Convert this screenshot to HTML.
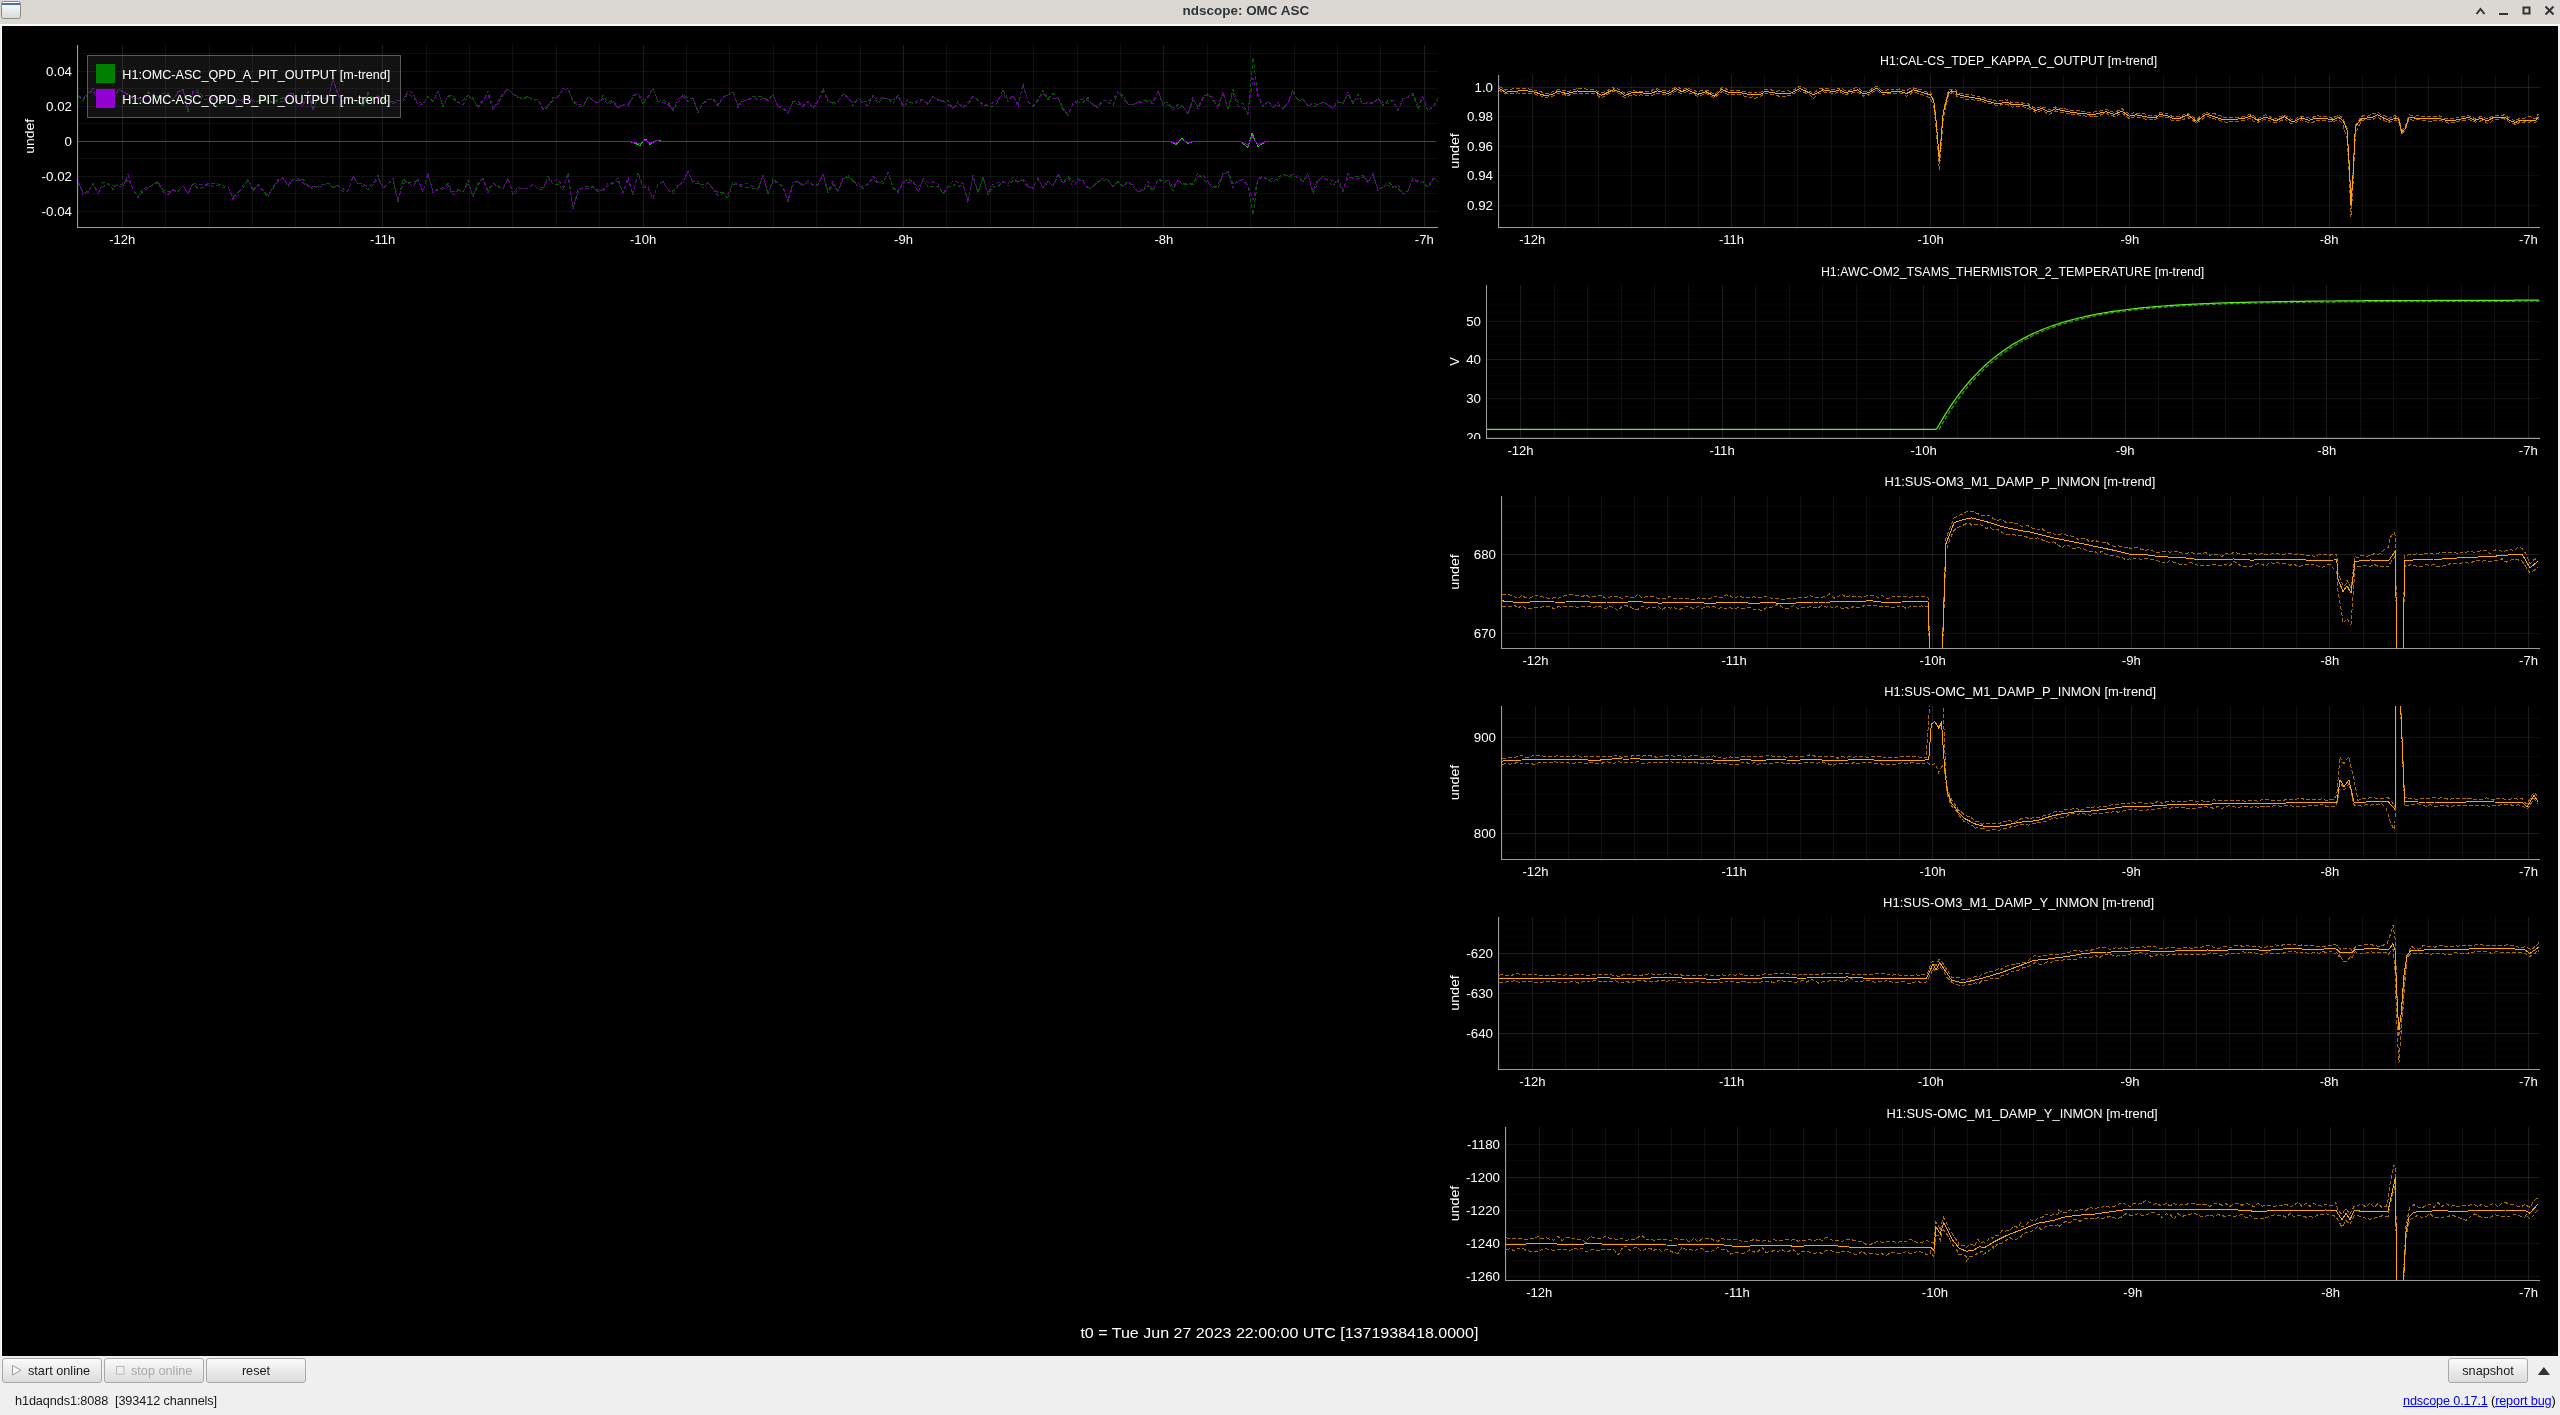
<!DOCTYPE html>
<html><head><meta charset="utf-8"><title>ndscope: OMC ASC</title>
<style>
html,body{margin:0;padding:0;}
body{width:2560px;height:1415px;overflow:hidden;background:#efefef;position:relative;font-family:'Liberation Sans', sans-serif;}
.a{position:absolute;}
#tb{left:0;top:0;width:2560px;height:24px;background:#dbd7d3;}
#tbl{left:0;top:24px;width:2560px;height:2px;background:#fbfbfb;}
#lc{left:1px;top:26px;width:1px;height:1330px;background:#ffffff;}
#blk{left:2px;top:26px;width:2556px;height:1330px;background:#000;}
#title{left:0;top:0;width:2492px;height:24px;line-height:24px;text-align:center;font-weight:bold;font-size:12.6px;color:#2e3436;}
.btn{position:absolute;top:1358px;height:23px;border:1px solid #a9a9a9;border-radius:3px;background:linear-gradient(#fafafa,#dcdcdc);box-sizing:content-box;font-size:12.7px;color:#1a1a1a;}
.btn span{position:absolute;top:5px;white-space:nowrap;}
.st{position:absolute;font-size:12.7px;white-space:nowrap;}
a{color:#0000ff;text-decoration:underline;}
svg text{font-family:'Liberation Sans', sans-serif;}
.g{mix-blend-mode:plus-lighter;}
</style></head>
<body>
<div class="a" id="tb"></div>
<div class="a" id="tbl"></div>
<div class="a" id="lc"></div>
<div class="a" id="blk"></div>
<svg class="a" style="left:0;top:0" width="2560" height="1415" viewBox="0 0 2560 1415">
<defs>
<linearGradient id="wig" x1="0" y1="0" x2="0" y2="1"><stop offset="0" stop-color="#ffffff"/><stop offset="1" stop-color="#d8dad6"/></linearGradient>
<clipPath id="c0"><rect x="78" y="45" width="1360" height="182"/></clipPath>
<clipPath id="c1"><rect x="1499" y="75" width="1041" height="152"/></clipPath>
<clipPath id="l1"><rect x="1400" y="65" width="98" height="163"/></clipPath>
<clipPath id="c2"><rect x="1487" y="285" width="1053" height="153"/></clipPath>
<clipPath id="l2"><rect x="1400" y="275" width="86" height="164"/></clipPath>
<clipPath id="c3"><rect x="1502" y="496" width="1038" height="152"/></clipPath>
<clipPath id="l3"><rect x="1400" y="486" width="101" height="163"/></clipPath>
<clipPath id="c4"><rect x="1502" y="706" width="1038" height="153"/></clipPath>
<clipPath id="l4"><rect x="1400" y="696" width="101" height="164"/></clipPath>
<clipPath id="c5"><rect x="1499" y="917" width="1041" height="152"/></clipPath>
<clipPath id="l5"><rect x="1400" y="907" width="98" height="163"/></clipPath>
<clipPath id="c6"><rect x="1506" y="1127" width="1034" height="153"/></clipPath>
<clipPath id="l6"><rect x="1400" y="1117" width="105" height="164"/></clipPath>
</defs>
<rect x="1.5" y="1.5" width="19" height="17" rx="2" fill="url(#wig)" stroke="#8c8c8c"/>
<rect x="2" y="3" width="18" height="2" fill="#4a72aa"/>
<g stroke="#2e3436" stroke-width="2" fill="none">
<polyline points="2476.5,14 2480.5,9 2484.5,14"/>
<line x1="2499" y1="14" x2="2508" y2="14"/>
<rect x="2523.5" y="7.5" width="6" height="6"/>
<line x1="2545.5" y1="6.5" x2="2553.5" y2="14.5"/>
<line x1="2553.5" y1="6.5" x2="2545.5" y2="14.5"/>
</g>
<rect class="g" x="78" y="45" width="1" height="182" fill="#111111"/>
<rect class="g" x="122" y="45" width="1" height="182" fill="#1d1d1d"/>
<rect class="g" x="165" y="45" width="1" height="182" fill="#111111"/>
<rect class="g" x="209" y="45" width="1" height="182" fill="#111111"/>
<rect class="g" x="252" y="45" width="1" height="182" fill="#111111"/>
<rect class="g" x="295" y="45" width="1" height="182" fill="#111111"/>
<rect class="g" x="339" y="45" width="1" height="182" fill="#111111"/>
<rect class="g" x="382" y="45" width="1" height="182" fill="#1d1d1d"/>
<rect class="g" x="426" y="45" width="1" height="182" fill="#111111"/>
<rect class="g" x="469" y="45" width="1" height="182" fill="#111111"/>
<rect class="g" x="512" y="45" width="1" height="182" fill="#111111"/>
<rect class="g" x="556" y="45" width="1" height="182" fill="#111111"/>
<rect class="g" x="599" y="45" width="1" height="182" fill="#111111"/>
<rect class="g" x="643" y="45" width="1" height="182" fill="#1d1d1d"/>
<rect class="g" x="686" y="45" width="1" height="182" fill="#111111"/>
<rect class="g" x="729" y="45" width="1" height="182" fill="#111111"/>
<rect class="g" x="773" y="45" width="1" height="182" fill="#111111"/>
<rect class="g" x="816" y="45" width="1" height="182" fill="#111111"/>
<rect class="g" x="860" y="45" width="1" height="182" fill="#111111"/>
<rect class="g" x="903" y="45" width="1" height="182" fill="#1d1d1d"/>
<rect class="g" x="946" y="45" width="1" height="182" fill="#111111"/>
<rect class="g" x="990" y="45" width="1" height="182" fill="#111111"/>
<rect class="g" x="1033" y="45" width="1" height="182" fill="#111111"/>
<rect class="g" x="1077" y="45" width="1" height="182" fill="#111111"/>
<rect class="g" x="1120" y="45" width="1" height="182" fill="#111111"/>
<rect class="g" x="1163" y="45" width="1" height="182" fill="#1d1d1d"/>
<rect class="g" x="1207" y="45" width="1" height="182" fill="#111111"/>
<rect class="g" x="1250" y="45" width="1" height="182" fill="#111111"/>
<rect class="g" x="1294" y="45" width="1" height="182" fill="#111111"/>
<rect class="g" x="1337" y="45" width="1" height="182" fill="#111111"/>
<rect class="g" x="1380" y="45" width="1" height="182" fill="#111111"/>
<rect class="g" x="1424" y="45" width="1" height="182" fill="#1d1d1d"/>
<rect class="g" x="78" y="211" width="1360" height="1" fill="#101010"/>
<rect class="g" x="78" y="193" width="1360" height="1" fill="#0d0d0d"/>
<rect class="g" x="78" y="176" width="1360" height="1" fill="#101010"/>
<rect class="g" x="78" y="158" width="1360" height="1" fill="#0d0d0d"/>
<rect class="g" x="78" y="141" width="1360" height="1" fill="#101010"/>
<rect class="g" x="78" y="123" width="1360" height="1" fill="#0d0d0d"/>
<rect class="g" x="78" y="106" width="1360" height="1" fill="#101010"/>
<rect class="g" x="78" y="88" width="1360" height="1" fill="#0d0d0d"/>
<rect class="g" x="78" y="71" width="1360" height="1" fill="#101010"/>
<rect class="g" x="78" y="53" width="1360" height="1" fill="#0d0d0d"/>
<rect class="g" x="1499" y="75" width="1" height="152" fill="#111111"/>
<rect class="g" x="1532" y="75" width="1" height="152" fill="#1d1d1d"/>
<rect class="g" x="1565" y="75" width="1" height="152" fill="#111111"/>
<rect class="g" x="1598" y="75" width="1" height="152" fill="#111111"/>
<rect class="g" x="1631" y="75" width="1" height="152" fill="#111111"/>
<rect class="g" x="1665" y="75" width="1" height="152" fill="#111111"/>
<rect class="g" x="1698" y="75" width="1" height="152" fill="#111111"/>
<rect class="g" x="1731" y="75" width="1" height="152" fill="#1d1d1d"/>
<rect class="g" x="1764" y="75" width="1" height="152" fill="#111111"/>
<rect class="g" x="1797" y="75" width="1" height="152" fill="#111111"/>
<rect class="g" x="1831" y="75" width="1" height="152" fill="#111111"/>
<rect class="g" x="1864" y="75" width="1" height="152" fill="#111111"/>
<rect class="g" x="1897" y="75" width="1" height="152" fill="#111111"/>
<rect class="g" x="1930" y="75" width="1" height="152" fill="#1d1d1d"/>
<rect class="g" x="1963" y="75" width="1" height="152" fill="#111111"/>
<rect class="g" x="1997" y="75" width="1" height="152" fill="#111111"/>
<rect class="g" x="2030" y="75" width="1" height="152" fill="#111111"/>
<rect class="g" x="2063" y="75" width="1" height="152" fill="#111111"/>
<rect class="g" x="2096" y="75" width="1" height="152" fill="#111111"/>
<rect class="g" x="2129" y="75" width="1" height="152" fill="#1d1d1d"/>
<rect class="g" x="2163" y="75" width="1" height="152" fill="#111111"/>
<rect class="g" x="2196" y="75" width="1" height="152" fill="#111111"/>
<rect class="g" x="2229" y="75" width="1" height="152" fill="#111111"/>
<rect class="g" x="2262" y="75" width="1" height="152" fill="#111111"/>
<rect class="g" x="2295" y="75" width="1" height="152" fill="#111111"/>
<rect class="g" x="2329" y="75" width="1" height="152" fill="#1d1d1d"/>
<rect class="g" x="2362" y="75" width="1" height="152" fill="#111111"/>
<rect class="g" x="2395" y="75" width="1" height="152" fill="#111111"/>
<rect class="g" x="2428" y="75" width="1" height="152" fill="#111111"/>
<rect class="g" x="2461" y="75" width="1" height="152" fill="#111111"/>
<rect class="g" x="2495" y="75" width="1" height="152" fill="#111111"/>
<rect class="g" x="2528" y="75" width="1" height="152" fill="#1d1d1d"/>
<rect class="g" x="1499" y="87" width="1041" height="1" fill="#1d1d1d"/>
<rect class="g" x="1499" y="116" width="1041" height="1" fill="#0b0b0b"/>
<rect class="g" x="1499" y="146" width="1041" height="1" fill="#0b0b0b"/>
<rect class="g" x="1499" y="175" width="1041" height="1" fill="#0b0b0b"/>
<rect class="g" x="1499" y="205" width="1041" height="1" fill="#0b0b0b"/>
<rect class="g" x="1520" y="285" width="1" height="153" fill="#1d1d1d"/>
<rect class="g" x="1554" y="285" width="1" height="153" fill="#111111"/>
<rect class="g" x="1587" y="285" width="1" height="153" fill="#111111"/>
<rect class="g" x="1621" y="285" width="1" height="153" fill="#111111"/>
<rect class="g" x="1654" y="285" width="1" height="153" fill="#111111"/>
<rect class="g" x="1688" y="285" width="1" height="153" fill="#111111"/>
<rect class="g" x="1722" y="285" width="1" height="153" fill="#1d1d1d"/>
<rect class="g" x="1755" y="285" width="1" height="153" fill="#111111"/>
<rect class="g" x="1789" y="285" width="1" height="153" fill="#111111"/>
<rect class="g" x="1822" y="285" width="1" height="153" fill="#111111"/>
<rect class="g" x="1856" y="285" width="1" height="153" fill="#111111"/>
<rect class="g" x="1890" y="285" width="1" height="153" fill="#111111"/>
<rect class="g" x="1923" y="285" width="1" height="153" fill="#1d1d1d"/>
<rect class="g" x="1957" y="285" width="1" height="153" fill="#111111"/>
<rect class="g" x="1990" y="285" width="1" height="153" fill="#111111"/>
<rect class="g" x="2024" y="285" width="1" height="153" fill="#111111"/>
<rect class="g" x="2057" y="285" width="1" height="153" fill="#111111"/>
<rect class="g" x="2091" y="285" width="1" height="153" fill="#111111"/>
<rect class="g" x="2125" y="285" width="1" height="153" fill="#1d1d1d"/>
<rect class="g" x="2158" y="285" width="1" height="153" fill="#111111"/>
<rect class="g" x="2192" y="285" width="1" height="153" fill="#111111"/>
<rect class="g" x="2225" y="285" width="1" height="153" fill="#111111"/>
<rect class="g" x="2259" y="285" width="1" height="153" fill="#111111"/>
<rect class="g" x="2293" y="285" width="1" height="153" fill="#111111"/>
<rect class="g" x="2326" y="285" width="1" height="153" fill="#1d1d1d"/>
<rect class="g" x="2360" y="285" width="1" height="153" fill="#111111"/>
<rect class="g" x="2393" y="285" width="1" height="153" fill="#111111"/>
<rect class="g" x="2427" y="285" width="1" height="153" fill="#111111"/>
<rect class="g" x="2461" y="285" width="1" height="153" fill="#111111"/>
<rect class="g" x="2494" y="285" width="1" height="153" fill="#111111"/>
<rect class="g" x="2528" y="285" width="1" height="153" fill="#1d1d1d"/>
<rect class="g" x="1487" y="429" width="1053" height="1" fill="#050505"/>
<rect class="g" x="1487" y="421" width="1053" height="1" fill="#050505"/>
<rect class="g" x="1487" y="413" width="1053" height="1" fill="#050505"/>
<rect class="g" x="1487" y="406" width="1053" height="1" fill="#050505"/>
<rect class="g" x="1487" y="390" width="1053" height="1" fill="#050505"/>
<rect class="g" x="1487" y="383" width="1053" height="1" fill="#050505"/>
<rect class="g" x="1487" y="375" width="1053" height="1" fill="#050505"/>
<rect class="g" x="1487" y="367" width="1053" height="1" fill="#050505"/>
<rect class="g" x="1487" y="352" width="1053" height="1" fill="#050505"/>
<rect class="g" x="1487" y="344" width="1053" height="1" fill="#050505"/>
<rect class="g" x="1487" y="336" width="1053" height="1" fill="#050505"/>
<rect class="g" x="1487" y="329" width="1053" height="1" fill="#050505"/>
<rect class="g" x="1487" y="313" width="1053" height="1" fill="#050505"/>
<rect class="g" x="1487" y="305" width="1053" height="1" fill="#050505"/>
<rect class="g" x="1487" y="298" width="1053" height="1" fill="#050505"/>
<rect class="g" x="1487" y="290" width="1053" height="1" fill="#050505"/>
<rect class="g" x="1487" y="359" width="1053" height="1" fill="#1d1d1d"/>
<rect class="g" x="1487" y="437" width="1053" height="1" fill="#1d1d1d"/>
<rect class="g" x="1487" y="321" width="1053" height="1" fill="#111111"/>
<rect class="g" x="1487" y="398" width="1053" height="1" fill="#111111"/>
<rect class="g" x="1502" y="496" width="1" height="152" fill="#111111"/>
<rect class="g" x="1535" y="496" width="1" height="152" fill="#1d1d1d"/>
<rect class="g" x="1568" y="496" width="1" height="152" fill="#111111"/>
<rect class="g" x="1601" y="496" width="1" height="152" fill="#111111"/>
<rect class="g" x="1634" y="496" width="1" height="152" fill="#111111"/>
<rect class="g" x="1667" y="496" width="1" height="152" fill="#111111"/>
<rect class="g" x="1701" y="496" width="1" height="152" fill="#111111"/>
<rect class="g" x="1734" y="496" width="1" height="152" fill="#1d1d1d"/>
<rect class="g" x="1767" y="496" width="1" height="152" fill="#111111"/>
<rect class="g" x="1800" y="496" width="1" height="152" fill="#111111"/>
<rect class="g" x="1833" y="496" width="1" height="152" fill="#111111"/>
<rect class="g" x="1866" y="496" width="1" height="152" fill="#111111"/>
<rect class="g" x="1899" y="496" width="1" height="152" fill="#111111"/>
<rect class="g" x="1932" y="496" width="1" height="152" fill="#1d1d1d"/>
<rect class="g" x="1965" y="496" width="1" height="152" fill="#111111"/>
<rect class="g" x="1998" y="496" width="1" height="152" fill="#111111"/>
<rect class="g" x="2032" y="496" width="1" height="152" fill="#111111"/>
<rect class="g" x="2065" y="496" width="1" height="152" fill="#111111"/>
<rect class="g" x="2098" y="496" width="1" height="152" fill="#111111"/>
<rect class="g" x="2131" y="496" width="1" height="152" fill="#1d1d1d"/>
<rect class="g" x="2164" y="496" width="1" height="152" fill="#111111"/>
<rect class="g" x="2197" y="496" width="1" height="152" fill="#111111"/>
<rect class="g" x="2230" y="496" width="1" height="152" fill="#111111"/>
<rect class="g" x="2263" y="496" width="1" height="152" fill="#111111"/>
<rect class="g" x="2296" y="496" width="1" height="152" fill="#111111"/>
<rect class="g" x="2329" y="496" width="1" height="152" fill="#1d1d1d"/>
<rect class="g" x="2363" y="496" width="1" height="152" fill="#111111"/>
<rect class="g" x="2396" y="496" width="1" height="152" fill="#111111"/>
<rect class="g" x="2429" y="496" width="1" height="152" fill="#111111"/>
<rect class="g" x="2462" y="496" width="1" height="152" fill="#111111"/>
<rect class="g" x="2495" y="496" width="1" height="152" fill="#111111"/>
<rect class="g" x="2528" y="496" width="1" height="152" fill="#1d1d1d"/>
<rect class="g" x="1502" y="617" width="1038" height="1" fill="#070707"/>
<rect class="g" x="1502" y="601" width="1038" height="1" fill="#070707"/>
<rect class="g" x="1502" y="585" width="1038" height="1" fill="#070707"/>
<rect class="g" x="1502" y="569" width="1038" height="1" fill="#070707"/>
<rect class="g" x="1502" y="538" width="1038" height="1" fill="#070707"/>
<rect class="g" x="1502" y="522" width="1038" height="1" fill="#070707"/>
<rect class="g" x="1502" y="506" width="1038" height="1" fill="#070707"/>
<rect class="g" x="1502" y="554" width="1038" height="1" fill="#1d1d1d"/>
<rect class="g" x="1502" y="633" width="1038" height="1" fill="#111111"/>
<rect class="g" x="1502" y="706" width="1" height="153" fill="#111111"/>
<rect class="g" x="1535" y="706" width="1" height="153" fill="#1d1d1d"/>
<rect class="g" x="1568" y="706" width="1" height="153" fill="#111111"/>
<rect class="g" x="1601" y="706" width="1" height="153" fill="#111111"/>
<rect class="g" x="1634" y="706" width="1" height="153" fill="#111111"/>
<rect class="g" x="1667" y="706" width="1" height="153" fill="#111111"/>
<rect class="g" x="1701" y="706" width="1" height="153" fill="#111111"/>
<rect class="g" x="1734" y="706" width="1" height="153" fill="#1d1d1d"/>
<rect class="g" x="1767" y="706" width="1" height="153" fill="#111111"/>
<rect class="g" x="1800" y="706" width="1" height="153" fill="#111111"/>
<rect class="g" x="1833" y="706" width="1" height="153" fill="#111111"/>
<rect class="g" x="1866" y="706" width="1" height="153" fill="#111111"/>
<rect class="g" x="1899" y="706" width="1" height="153" fill="#111111"/>
<rect class="g" x="1932" y="706" width="1" height="153" fill="#1d1d1d"/>
<rect class="g" x="1965" y="706" width="1" height="153" fill="#111111"/>
<rect class="g" x="1998" y="706" width="1" height="153" fill="#111111"/>
<rect class="g" x="2032" y="706" width="1" height="153" fill="#111111"/>
<rect class="g" x="2065" y="706" width="1" height="153" fill="#111111"/>
<rect class="g" x="2098" y="706" width="1" height="153" fill="#111111"/>
<rect class="g" x="2131" y="706" width="1" height="153" fill="#1d1d1d"/>
<rect class="g" x="2164" y="706" width="1" height="153" fill="#111111"/>
<rect class="g" x="2197" y="706" width="1" height="153" fill="#111111"/>
<rect class="g" x="2230" y="706" width="1" height="153" fill="#111111"/>
<rect class="g" x="2263" y="706" width="1" height="153" fill="#111111"/>
<rect class="g" x="2296" y="706" width="1" height="153" fill="#111111"/>
<rect class="g" x="2329" y="706" width="1" height="153" fill="#1d1d1d"/>
<rect class="g" x="2363" y="706" width="1" height="153" fill="#111111"/>
<rect class="g" x="2396" y="706" width="1" height="153" fill="#111111"/>
<rect class="g" x="2429" y="706" width="1" height="153" fill="#111111"/>
<rect class="g" x="2462" y="706" width="1" height="153" fill="#111111"/>
<rect class="g" x="2495" y="706" width="1" height="153" fill="#111111"/>
<rect class="g" x="2528" y="706" width="1" height="153" fill="#1d1d1d"/>
<rect class="g" x="1502" y="852" width="1038" height="1" fill="#080808"/>
<rect class="g" x="1502" y="814" width="1038" height="1" fill="#080808"/>
<rect class="g" x="1502" y="794" width="1038" height="1" fill="#080808"/>
<rect class="g" x="1502" y="775" width="1038" height="1" fill="#080808"/>
<rect class="g" x="1502" y="756" width="1038" height="1" fill="#080808"/>
<rect class="g" x="1502" y="718" width="1038" height="1" fill="#080808"/>
<rect class="g" x="1502" y="833" width="1038" height="1" fill="#1d1d1d"/>
<rect class="g" x="1502" y="737" width="1038" height="1" fill="#111111"/>
<rect class="g" x="1499" y="917" width="1" height="152" fill="#111111"/>
<rect class="g" x="1532" y="917" width="1" height="152" fill="#1d1d1d"/>
<rect class="g" x="1565" y="917" width="1" height="152" fill="#111111"/>
<rect class="g" x="1598" y="917" width="1" height="152" fill="#111111"/>
<rect class="g" x="1632" y="917" width="1" height="152" fill="#111111"/>
<rect class="g" x="1665" y="917" width="1" height="152" fill="#111111"/>
<rect class="g" x="1698" y="917" width="1" height="152" fill="#111111"/>
<rect class="g" x="1731" y="917" width="1" height="152" fill="#1d1d1d"/>
<rect class="g" x="1764" y="917" width="1" height="152" fill="#111111"/>
<rect class="g" x="1798" y="917" width="1" height="152" fill="#111111"/>
<rect class="g" x="1831" y="917" width="1" height="152" fill="#111111"/>
<rect class="g" x="1864" y="917" width="1" height="152" fill="#111111"/>
<rect class="g" x="1897" y="917" width="1" height="152" fill="#111111"/>
<rect class="g" x="1930" y="917" width="1" height="152" fill="#1d1d1d"/>
<rect class="g" x="1964" y="917" width="1" height="152" fill="#111111"/>
<rect class="g" x="1997" y="917" width="1" height="152" fill="#111111"/>
<rect class="g" x="2030" y="917" width="1" height="152" fill="#111111"/>
<rect class="g" x="2063" y="917" width="1" height="152" fill="#111111"/>
<rect class="g" x="2096" y="917" width="1" height="152" fill="#111111"/>
<rect class="g" x="2130" y="917" width="1" height="152" fill="#1d1d1d"/>
<rect class="g" x="2163" y="917" width="1" height="152" fill="#111111"/>
<rect class="g" x="2196" y="917" width="1" height="152" fill="#111111"/>
<rect class="g" x="2229" y="917" width="1" height="152" fill="#111111"/>
<rect class="g" x="2262" y="917" width="1" height="152" fill="#111111"/>
<rect class="g" x="2296" y="917" width="1" height="152" fill="#111111"/>
<rect class="g" x="2329" y="917" width="1" height="152" fill="#1d1d1d"/>
<rect class="g" x="2362" y="917" width="1" height="152" fill="#111111"/>
<rect class="g" x="2395" y="917" width="1" height="152" fill="#111111"/>
<rect class="g" x="2428" y="917" width="1" height="152" fill="#111111"/>
<rect class="g" x="2462" y="917" width="1" height="152" fill="#111111"/>
<rect class="g" x="2495" y="917" width="1" height="152" fill="#111111"/>
<rect class="g" x="2528" y="917" width="1" height="152" fill="#1d1d1d"/>
<rect class="g" x="1499" y="1065" width="1041" height="1" fill="#050505"/>
<rect class="g" x="1499" y="1057" width="1041" height="1" fill="#050505"/>
<rect class="g" x="1499" y="1049" width="1041" height="1" fill="#050505"/>
<rect class="g" x="1499" y="1041" width="1041" height="1" fill="#050505"/>
<rect class="g" x="1499" y="1025" width="1041" height="1" fill="#050505"/>
<rect class="g" x="1499" y="1017" width="1041" height="1" fill="#050505"/>
<rect class="g" x="1499" y="1009" width="1041" height="1" fill="#050505"/>
<rect class="g" x="1499" y="1001" width="1041" height="1" fill="#050505"/>
<rect class="g" x="1499" y="985" width="1041" height="1" fill="#050505"/>
<rect class="g" x="1499" y="977" width="1041" height="1" fill="#050505"/>
<rect class="g" x="1499" y="969" width="1041" height="1" fill="#050505"/>
<rect class="g" x="1499" y="961" width="1041" height="1" fill="#050505"/>
<rect class="g" x="1499" y="945" width="1041" height="1" fill="#050505"/>
<rect class="g" x="1499" y="937" width="1041" height="1" fill="#050505"/>
<rect class="g" x="1499" y="929" width="1041" height="1" fill="#050505"/>
<rect class="g" x="1499" y="921" width="1041" height="1" fill="#050505"/>
<rect class="g" x="1499" y="953" width="1041" height="1" fill="#1d1d1d"/>
<rect class="g" x="1499" y="1033" width="1041" height="1" fill="#1d1d1d"/>
<rect class="g" x="1499" y="993" width="1041" height="1" fill="#111111"/>
<rect class="g" x="1506" y="1127" width="1" height="153" fill="#111111"/>
<rect class="g" x="1539" y="1127" width="1" height="153" fill="#1d1d1d"/>
<rect class="g" x="1572" y="1127" width="1" height="153" fill="#111111"/>
<rect class="g" x="1605" y="1127" width="1" height="153" fill="#111111"/>
<rect class="g" x="1638" y="1127" width="1" height="153" fill="#111111"/>
<rect class="g" x="1671" y="1127" width="1" height="153" fill="#111111"/>
<rect class="g" x="1704" y="1127" width="1" height="153" fill="#111111"/>
<rect class="g" x="1737" y="1127" width="1" height="153" fill="#1d1d1d"/>
<rect class="g" x="1770" y="1127" width="1" height="153" fill="#111111"/>
<rect class="g" x="1803" y="1127" width="1" height="153" fill="#111111"/>
<rect class="g" x="1836" y="1127" width="1" height="153" fill="#111111"/>
<rect class="g" x="1869" y="1127" width="1" height="153" fill="#111111"/>
<rect class="g" x="1902" y="1127" width="1" height="153" fill="#111111"/>
<rect class="g" x="1934" y="1127" width="1" height="153" fill="#1d1d1d"/>
<rect class="g" x="1967" y="1127" width="1" height="153" fill="#111111"/>
<rect class="g" x="2000" y="1127" width="1" height="153" fill="#111111"/>
<rect class="g" x="2033" y="1127" width="1" height="153" fill="#111111"/>
<rect class="g" x="2066" y="1127" width="1" height="153" fill="#111111"/>
<rect class="g" x="2099" y="1127" width="1" height="153" fill="#111111"/>
<rect class="g" x="2132" y="1127" width="1" height="153" fill="#1d1d1d"/>
<rect class="g" x="2165" y="1127" width="1" height="153" fill="#111111"/>
<rect class="g" x="2198" y="1127" width="1" height="153" fill="#111111"/>
<rect class="g" x="2231" y="1127" width="1" height="153" fill="#111111"/>
<rect class="g" x="2264" y="1127" width="1" height="153" fill="#111111"/>
<rect class="g" x="2297" y="1127" width="1" height="153" fill="#111111"/>
<rect class="g" x="2330" y="1127" width="1" height="153" fill="#1d1d1d"/>
<rect class="g" x="2363" y="1127" width="1" height="153" fill="#111111"/>
<rect class="g" x="2396" y="1127" width="1" height="153" fill="#111111"/>
<rect class="g" x="2429" y="1127" width="1" height="153" fill="#111111"/>
<rect class="g" x="2462" y="1127" width="1" height="153" fill="#111111"/>
<rect class="g" x="2495" y="1127" width="1" height="153" fill="#111111"/>
<rect class="g" x="2528" y="1127" width="1" height="153" fill="#1d1d1d"/>
<rect class="g" x="1506" y="1160" width="1034" height="1" fill="#070707"/>
<rect class="g" x="1506" y="1194" width="1034" height="1" fill="#070707"/>
<rect class="g" x="1506" y="1227" width="1034" height="1" fill="#070707"/>
<rect class="g" x="1506" y="1260" width="1034" height="1" fill="#070707"/>
<rect class="g" x="1506" y="1177" width="1034" height="1" fill="#1d1d1d"/>
<rect class="g" x="1506" y="1144" width="1034" height="1" fill="#111111"/>
<rect class="g" x="1506" y="1210" width="1034" height="1" fill="#111111"/>
<rect class="g" x="1506" y="1243" width="1034" height="1" fill="#111111"/>
<rect class="g" x="1506" y="1276" width="1034" height="1" fill="#111111"/>
<g clip-path="url(#c1)" fill="none" shape-rendering="crispEdges">
<path d="M1499.2,86.7L1501.2,87.7L1503.2,89.0L1505.2,90.2L1505.5,89.9L1507.2,89.9L1509.2,90.2L1511.2,89.2L1513.2,88.8L1515.2,88.9L1517.2,89.0L1519.2,88.8L1521.2,88.8L1523.2,88.8L1524.5,88.5L1525.2,88.5L1527.2,88.7L1529.2,89.0L1531.2,89.5L1533.2,90.0L1535.1,90.3L1535.2,90.3L1537.2,91.1L1539.2,91.6L1541.2,91.9L1543.2,92.5L1544.6,93.3L1545.2,93.5L1547.2,93.5L1549.2,93.4L1550.9,92.9L1551.2,92.3L1553.2,91.6L1555.2,90.9L1557.2,89.8L1558.3,89.2L1559.2,89.4L1561.2,90.2L1563.2,90.5L1565.2,90.6L1566.7,91.4L1567.2,91.8L1569.2,91.2L1571.2,90.5L1573.2,89.9L1575.2,89.4L1577.2,88.4L1577.3,87.9L1579.2,88.1L1581.2,88.3L1583.2,88.4L1585.2,88.6L1587.2,89.4L1587.8,90.0L1589.2,90.2L1591.2,89.5L1593.2,89.0L1595.2,89.4L1597.2,91.1L1599.2,92.2L1601.2,92.6L1601.5,92.5L1603.2,92.2L1605.2,91.8L1607.2,90.9L1609.2,89.5L1611.2,88.3L1613.1,87.6L1613.2,88.2L1615.2,88.2L1617.2,88.7L1619.2,90.0L1619.5,89.6L1621.2,90.6L1623.2,92.0L1624.7,93.1L1625.2,93.5L1627.2,92.2L1629.2,91.5L1631.2,91.3L1632.1,91.0L1633.2,90.8L1635.2,91.1L1637.2,91.2L1639.2,91.2L1641.2,91.2L1643.2,91.3L1645.2,91.3L1647.2,91.5L1649.2,91.6L1651.1,91.2L1651.2,90.7L1653.2,89.6L1655.2,89.2L1657.2,88.9L1657.4,88.9L1659.2,89.4L1661.2,90.1L1663.2,90.5L1665.2,90.9L1667.2,91.6L1668.0,91.8L1669.2,90.6L1671.2,89.2L1673.2,88.5L1675.2,87.8L1676.4,87.0L1677.2,87.2L1679.2,87.8L1681.2,89.1L1681.7,89.9L1683.2,89.4L1685.2,88.5L1687.0,87.8L1687.2,87.6L1689.2,88.3L1691.2,89.7L1693.2,90.2L1695.2,90.7L1697.2,92.3L1697.5,92.3L1699.2,91.5L1701.2,90.6L1703.2,90.5L1705.2,90.0L1705.9,90.0L1707.2,90.3L1709.2,91.3L1711.2,92.8L1713.2,93.5L1714.4,94.3L1715.2,93.7L1717.2,91.9L1719.2,90.1L1721.2,88.2L1721.8,87.3L1723.2,87.2L1725.2,88.1L1727.2,89.4L1729.2,90.5L1731.2,90.6L1733.2,90.9L1735.2,90.5L1737.2,90.5L1739.2,90.6L1740.8,90.7L1741.2,91.2L1743.2,91.3L1745.2,91.9L1747.2,92.2L1749.2,92.5L1751.2,92.7L1752.4,92.8L1753.2,92.5L1755.2,92.4L1757.2,92.8L1759.2,92.7L1760.8,92.5L1761.2,91.8L1763.2,90.8L1765.0,89.6L1765.2,89.2L1767.2,89.4L1769.2,89.6L1771.2,89.9L1773.2,90.7L1775.2,91.4L1777.2,91.3L1778.7,90.9L1779.2,90.4L1781.2,91.0L1783.2,91.8L1785.2,91.2L1787.2,90.5L1789.2,91.2L1790.3,91.3L1791.2,90.8L1793.2,90.0L1795.2,89.2L1797.2,87.9L1799.2,86.5L1799.8,86.2L1801.2,87.0L1803.2,87.7L1805.2,88.7L1807.2,89.9L1809.2,91.0L1811.2,92.0L1813.2,92.9L1813.5,92.8L1815.2,92.1L1817.2,90.4L1819.2,89.0L1821.2,88.4L1823.0,88.1L1823.2,88.2L1825.2,88.5L1827.2,88.9L1829.2,89.0L1831.2,89.5L1833.2,89.8L1833.6,89.8L1835.2,89.6L1837.2,89.0L1839.2,88.4L1839.9,88.1L1841.2,88.4L1843.2,89.2L1845.2,90.7L1847.2,90.7L1849.2,90.2L1851.2,89.4L1853.2,88.6L1855.2,87.9L1857.2,88.0L1857.8,88.0L1859.2,88.8L1861.2,90.3L1863.1,92.1L1863.2,91.6L1865.2,91.3L1867.2,91.1L1868.4,90.8L1869.2,90.6L1871.2,89.2L1873.2,87.7L1875.2,86.8L1876.8,86.3L1877.2,86.6L1879.2,88.4L1881.2,90.0L1882.1,90.2L1883.2,90.3L1885.2,90.4L1887.2,90.0L1889.2,89.5L1891.2,89.6L1893.2,90.0L1895.2,89.5L1897.2,89.2L1899.2,89.6L1900.0,88.7L1901.2,89.3L1903.2,90.5L1905.2,91.1L1906.3,90.9L1907.2,90.3L1909.2,89.0L1911.2,88.1L1913.2,87.8L1913.7,88.1L1915.2,88.3L1917.2,89.1L1919.2,89.6L1921.2,89.8L1923.2,90.4L1925.2,91.6L1927.2,92.0L1929.2,92.6L1930.6,92.3L1931.2,93.6L1933.2,98.4L1933.8,99.1L1935.2,111.5L1936.5,122.6L1937.2,131.4L1939.2,157.7L1939.3,158.4L1941.2,136.7L1941.5,133.0L1943.2,110.9L1945.2,103.3L1947.2,95.1L1948.5,90.1L1949.2,90.0L1951.2,89.2L1951.7,89.3L1953.2,89.2L1955.2,89.8L1955.9,89.6L1957.0,92.1L1957.2,92.3L1959.2,93.1L1961.2,93.7L1963.2,94.0L1965.2,94.3L1965.4,94.7L1967.2,94.7L1969.2,94.7L1971.2,94.9L1973.2,95.3L1975.2,96.0L1977.2,96.4L1979.1,96.2L1979.2,96.8L1981.2,97.0L1983.2,97.5L1985.2,98.3L1987.2,99.2L1989.2,99.6L1991.2,99.5L1993.2,99.9L1995.2,100.6L1997.0,101.7L1997.2,101.8L1999.2,100.8L2001.2,100.5L2003.2,99.9L2005.2,99.9L2007.2,100.3L2007.6,99.6L2009.2,100.9L2011.2,102.5L2011.8,103.0L2013.2,102.9L2015.2,102.8L2017.2,102.7L2019.2,102.7L2020.2,102.2L2021.2,102.7L2023.2,103.2L2025.2,103.1L2027.2,103.5L2028.7,104.1L2029.2,104.5L2030.0,105.4L2031.2,106.4L2033.2,107.3L2035.2,108.2L2035.3,107.9L2037.2,107.6L2039.2,107.3L2041.2,106.4L2041.6,106.1L2043.2,107.5L2045.2,107.7L2047.2,108.6L2049.0,110.1L2049.2,109.9L2051.2,109.0L2053.2,108.1L2055.2,107.0L2055.3,107.2L2057.2,107.5L2059.2,108.1L2061.2,108.1L2063.2,109.0L2063.8,108.7L2065.2,108.8L2067.2,109.3L2069.2,109.7L2071.2,110.5L2072.2,110.4L2073.2,110.9L2075.2,110.8L2077.2,110.0L2079.2,110.0L2081.2,110.9L2083.2,111.8L2084.8,112.0L2085.2,111.9L2087.2,112.1L2089.2,112.0L2091.2,112.1L2093.2,112.2L2093.3,112.2L2095.2,111.8L2097.2,111.4L2099.2,111.4L2101.2,110.7L2103.2,110.2L2105.2,109.9L2105.9,109.4L2107.2,109.6L2109.2,110.6L2111.2,111.8L2113.2,112.0L2114.4,112.3L2115.2,112.5L2117.2,111.1L2119.2,110.1L2121.2,109.1L2121.8,108.5L2123.2,109.5L2125.2,111.7L2127.2,112.5L2129.1,114.0L2129.2,114.4L2131.2,113.9L2133.2,113.0L2135.2,112.7L2135.5,112.9L2137.2,113.2L2139.2,113.1L2141.2,112.9L2143.2,113.2L2145.2,114.1L2147.2,115.3L2149.2,115.3L2151.2,115.2L2153.2,115.3L2155.2,115.4L2155.5,115.7L2157.2,114.8L2159.2,113.3L2159.7,112.8L2161.2,112.9L2163.2,113.2L2165.2,113.0L2167.1,113.5L2167.2,113.7L2169.2,114.8L2171.2,115.9L2172.4,116.7L2173.2,116.6L2175.2,116.4L2177.2,116.2L2179.2,116.0L2179.8,116.2L2181.2,116.0L2183.2,115.1L2185.2,113.9L2187.2,113.0L2189.2,114.6L2191.2,116.0L2193.2,117.3L2195.2,118.4L2196.6,119.3L2197.2,119.1L2199.2,117.1L2201.2,116.1L2203.2,114.1L2205.2,113.0L2206.1,112.1L2207.2,112.7L2209.2,113.4L2211.2,113.7L2213.2,113.7L2215.2,113.9L2217.2,114.8L2219.2,115.5L2220.9,116.0L2221.2,116.2L2223.2,117.0L2225.2,117.5L2227.2,117.4L2229.2,117.9L2230.4,117.8L2231.2,117.6L2233.2,117.8L2235.2,117.2L2237.2,117.0L2239.2,117.0L2241.2,117.1L2243.2,116.7L2244.1,116.3L2245.2,115.9L2247.2,115.2L2249.2,114.4L2250.4,114.2L2251.2,114.4L2253.2,115.6L2255.2,117.1L2257.2,117.9L2257.8,118.3L2259.2,118.1L2261.2,116.9L2263.2,115.9L2265.2,114.8L2267.2,115.2L2269.2,116.2L2271.2,117.6L2273.2,118.0L2275.2,118.8L2275.8,119.0L2277.2,117.8L2279.2,117.0L2281.2,116.4L2283.2,114.9L2284.2,114.4L2285.2,115.6L2287.2,116.3L2289.2,117.5L2291.2,119.3L2291.6,119.5L2293.2,119.7L2295.2,119.3L2297.2,118.1L2299.2,117.0L2301.2,116.4L2301.6,116.3L2303.2,116.8L2305.2,117.4L2307.2,117.6L2309.0,118.1L2309.2,118.2L2311.2,117.7L2313.2,117.1L2315.2,116.3L2315.3,115.9L2317.2,115.7L2319.2,116.1L2321.2,116.7L2323.2,116.8L2325.2,116.8L2326.9,116.9L2327.2,116.6L2329.2,117.0L2331.2,117.7L2332.2,118.5L2333.2,117.5L2335.2,116.7L2337.2,115.9L2338.5,114.7L2339.2,115.3L2341.2,116.7L2342.7,118.0L2343.2,119.5L2345.2,124.2L2347.0,128.1L2347.2,131.3L2349.2,163.1L2349.5,168.1L2351.0,203.4L2351.2,200.3L2353.0,173.3L2353.2,169.1L2355.2,128.8L2355.4,124.6L2357.2,122.0L2359.2,119.6L2361.2,117.3L2361.7,116.5L2363.2,115.6L2365.2,115.4L2367.2,116.3L2369.2,115.2L2371.2,114.3L2372.3,113.9L2373.2,113.8L2375.2,113.4L2377.2,112.4L2377.5,112.1L2379.2,113.4L2381.2,115.1L2382.8,116.0L2383.2,115.8L2385.2,116.1L2387.2,117.3L2389.1,118.5L2389.2,118.2L2391.2,117.7L2393.2,116.3L2395.2,115.6L2395.5,116.1L2397.2,116.7L2398.6,117.1L2399.2,119.9L2401.2,127.8L2401.8,129.9L2403.2,128.6L2405.0,127.1L2405.2,126.6L2407.2,120.8L2409.2,114.9L2411.2,115.4L2413.2,116.1L2414.5,116.1L2415.2,116.2L2417.2,115.8L2419.2,116.0L2421.2,116.4L2423.2,116.5L2425.2,116.4L2427.2,116.2L2429.2,116.2L2431.2,116.2L2433.2,116.0L2435.2,116.1L2437.2,116.1L2438.7,115.7L2439.2,115.8L2441.2,116.8L2443.2,117.7L2445.2,118.2L2447.2,118.5L2449.2,118.8L2451.2,118.2L2453.2,118.1L2454.5,118.5L2455.2,117.7L2457.2,117.3L2459.2,117.7L2461.2,116.9L2463.2,116.7L2465.2,116.2L2467.2,115.4L2468.3,115.3L2469.2,116.0L2471.2,117.0L2473.2,117.9L2474.6,118.4L2475.2,118.4L2477.2,117.9L2479.2,117.2L2480.9,116.4L2481.2,116.3L2483.2,117.5L2485.2,118.1L2487.2,118.6L2489.2,117.7L2491.2,116.8L2492.5,116.1L2493.2,116.0L2495.2,116.0L2497.2,115.3L2499.2,115.0L2501.2,115.3L2503.2,115.2L2504.1,114.6L2505.2,115.4L2507.2,116.9L2509.2,117.8L2511.2,118.3L2511.5,118.5L2513.2,120.1L2515.2,120.0L2515.7,120.4L2517.2,119.7L2519.2,118.7L2519.9,118.4L2521.2,118.5L2523.2,118.4L2525.2,118.1L2527.2,116.9L2529.2,116.5L2531.2,117.1L2531.5,117.7L2533.2,118.5L2535.2,118.6L2535.8,118.7L2537.2,115.9L2537.9,114.6L2539.0,115.1" stroke="#a86d00" stroke-dasharray="4 2"/>
<path d="M1499.2,90.2L1501.2,91.5L1503.2,92.7L1505.2,93.7L1505.5,93.9L1507.2,94.0L1509.2,93.8L1511.2,93.4L1513.2,93.7L1515.2,93.4L1517.2,92.9L1519.2,93.1L1521.2,93.2L1523.2,93.3L1524.5,93.5L1525.2,93.5L1527.2,93.5L1529.2,93.4L1531.2,93.4L1533.2,93.5L1535.1,94.0L1535.2,94.0L1537.2,95.0L1539.2,95.4L1541.2,96.1L1543.2,97.0L1544.6,97.1L1545.2,97.5L1547.2,97.3L1549.2,96.8L1550.9,97.0L1551.2,96.8L1553.2,96.1L1555.2,95.1L1557.2,93.7L1558.3,93.0L1559.2,93.4L1561.2,94.0L1563.2,94.3L1565.2,94.8L1566.7,95.6L1567.2,95.8L1569.2,95.1L1571.2,94.4L1573.2,94.0L1575.2,93.7L1577.2,93.3L1577.3,93.3L1579.2,93.5L1581.2,93.6L1583.2,93.2L1585.2,93.5L1587.2,93.7L1587.8,93.6L1589.2,93.7L1591.2,93.6L1593.2,93.8L1595.2,94.0L1597.2,94.6L1599.2,96.9L1601.2,98.3L1601.5,98.2L1603.2,97.1L1605.2,95.3L1607.2,94.7L1609.2,93.4L1611.2,92.4L1613.1,91.5L1613.2,91.6L1615.2,92.1L1617.2,92.9L1619.2,93.4L1619.5,93.7L1621.2,95.6L1623.2,96.8L1624.7,97.1L1625.2,97.2L1627.2,96.3L1629.2,95.9L1631.2,95.2L1632.1,94.8L1633.2,94.3L1635.2,95.0L1637.2,95.2L1639.2,95.1L1641.2,94.9L1643.2,95.1L1645.2,95.0L1647.2,95.1L1649.2,95.3L1651.1,95.0L1651.2,95.4L1653.2,94.9L1655.2,93.6L1657.2,93.1L1657.4,93.3L1659.2,93.6L1661.2,93.7L1663.2,94.3L1665.2,94.5L1667.2,95.2L1668.0,95.3L1669.2,94.8L1671.2,93.7L1673.2,92.5L1675.2,91.4L1676.4,90.6L1677.2,91.2L1679.2,92.7L1681.2,93.4L1681.7,93.4L1683.2,92.8L1685.2,92.3L1687.0,91.4L1687.2,92.2L1689.2,93.0L1691.2,93.7L1693.2,94.4L1695.2,94.9L1697.2,96.2L1697.5,96.4L1699.2,96.1L1701.2,95.1L1703.2,94.9L1705.2,94.5L1705.9,93.6L1707.2,94.1L1709.2,95.2L1711.2,96.2L1713.2,97.2L1714.4,97.8L1715.2,97.2L1717.2,95.5L1719.2,94.2L1721.2,92.2L1721.8,91.5L1723.2,92.2L1725.2,93.3L1727.2,94.1L1729.2,94.4L1731.2,94.3L1733.2,94.3L1735.2,94.4L1737.2,94.4L1739.2,94.5L1740.8,94.4L1741.2,94.6L1743.2,95.4L1745.2,96.6L1747.2,96.9L1749.2,97.0L1751.2,97.2L1752.4,96.8L1753.2,98.1L1755.2,98.2L1757.2,97.4L1759.2,96.3L1760.8,96.0L1761.2,96.1L1763.2,94.6L1765.0,93.4L1765.2,93.1L1767.2,93.8L1769.2,94.1L1771.2,94.2L1773.2,94.5L1775.2,95.0L1777.2,95.1L1778.7,96.0L1779.2,96.6L1781.2,96.9L1783.2,96.6L1785.2,96.2L1787.2,96.0L1789.2,95.1L1790.3,95.8L1791.2,95.4L1793.2,93.5L1795.2,93.1L1797.2,91.9L1799.2,90.7L1799.8,90.7L1801.2,91.7L1803.2,92.0L1805.2,92.9L1807.2,93.6L1809.2,94.4L1811.2,96.2L1813.2,98.2L1813.5,98.4L1815.2,96.6L1817.2,94.6L1819.2,93.5L1821.2,92.9L1823.0,92.2L1823.2,91.9L1825.2,92.1L1827.2,92.6L1829.2,92.9L1831.2,93.0L1833.2,93.3L1833.6,93.9L1835.2,93.5L1837.2,92.6L1839.2,91.6L1839.9,91.6L1841.2,92.4L1843.2,93.7L1845.2,94.8L1847.2,94.1L1849.2,93.5L1851.2,93.1L1853.2,92.8L1855.2,92.7L1857.2,92.7L1857.8,92.7L1859.2,93.1L1861.2,94.6L1863.1,96.1L1863.2,95.6L1865.2,95.3L1867.2,94.8L1868.4,95.2L1869.2,94.5L1871.2,92.9L1873.2,91.8L1875.2,90.9L1876.8,89.8L1877.2,90.0L1879.2,92.1L1881.2,94.2L1882.1,95.0L1883.2,94.7L1885.2,94.1L1887.2,94.0L1889.2,93.8L1891.2,93.7L1893.2,93.7L1895.2,93.5L1897.2,93.3L1899.2,92.9L1900.0,92.9L1901.2,93.3L1903.2,94.2L1905.2,95.0L1906.3,96.1L1907.2,96.0L1909.2,94.9L1911.2,93.4L1913.2,91.8L1913.7,91.7L1915.2,92.2L1917.2,92.9L1919.2,94.4L1921.2,94.5L1923.2,95.0L1925.2,95.9L1927.2,96.5L1929.2,97.7L1930.6,98.4L1931.2,100.2L1933.2,104.7L1933.8,105.9L1935.2,119.5L1936.5,132.3L1937.2,141.5L1939.2,168.4L1939.3,170.2L1941.2,146.5L1941.5,142.5L1943.2,118.4L1945.2,109.6L1947.2,101.0L1948.5,95.3L1949.2,94.7L1951.2,93.4L1951.7,92.8L1953.2,93.0L1955.2,93.7L1955.9,94.3L1957.0,96.6L1957.2,96.0L1959.2,97.0L1961.2,97.4L1963.2,97.9L1965.2,98.7L1965.4,99.2L1967.2,99.5L1969.2,99.2L1971.2,99.0L1973.2,99.8L1975.2,100.4L1977.2,100.5L1979.1,100.5L1979.2,100.3L1981.2,100.9L1983.2,101.7L1985.2,102.7L1987.2,103.3L1989.2,103.7L1991.2,103.9L1993.2,104.4L1995.2,105.0L1997.0,105.8L1997.2,106.0L1999.2,105.4L2001.2,104.8L2003.2,104.9L2005.2,104.5L2007.2,104.0L2007.6,104.3L2009.2,105.5L2011.2,106.3L2011.8,107.0L2013.2,107.0L2015.2,106.3L2017.2,106.9L2019.2,107.0L2020.2,106.2L2021.2,106.6L2023.2,106.7L2025.2,107.6L2027.2,108.0L2028.7,108.5L2029.2,109.6L2030.0,110.0L2031.2,109.9L2033.2,111.2L2035.2,112.3L2035.3,112.2L2037.2,111.6L2039.2,111.1L2041.2,110.8L2041.6,110.7L2043.2,110.9L2045.2,112.3L2047.2,113.5L2049.0,114.2L2049.2,114.3L2051.2,113.3L2053.2,111.9L2055.2,110.9L2055.3,111.1L2057.2,111.1L2059.2,111.7L2061.2,112.3L2063.2,112.8L2063.8,113.0L2065.2,113.3L2067.2,113.3L2069.2,113.5L2071.2,114.0L2072.2,114.6L2073.2,114.9L2075.2,114.8L2077.2,114.7L2079.2,115.0L2081.2,115.7L2083.2,116.0L2084.8,115.6L2085.2,116.1L2087.2,116.4L2089.2,115.8L2091.2,116.5L2093.2,116.4L2093.3,116.6L2095.2,116.6L2097.2,116.4L2099.2,115.7L2101.2,114.6L2103.2,114.0L2105.2,113.7L2105.9,113.7L2107.2,113.8L2109.2,115.4L2111.2,116.0L2113.2,115.8L2114.4,116.5L2115.2,115.7L2117.2,115.4L2119.2,114.7L2121.2,113.5L2121.8,112.6L2123.2,113.9L2125.2,115.5L2127.2,117.1L2129.1,118.3L2129.2,117.7L2131.2,117.9L2133.2,117.3L2135.2,116.7L2135.5,116.5L2137.2,117.2L2139.2,117.5L2141.2,118.0L2143.2,118.6L2145.2,119.1L2147.2,119.1L2149.2,119.1L2151.2,119.8L2153.2,120.1L2155.2,119.8L2155.5,119.5L2157.2,118.4L2159.2,117.1L2159.7,116.4L2161.2,116.9L2163.2,116.7L2165.2,117.4L2167.1,117.5L2167.2,117.2L2169.2,118.5L2171.2,120.1L2172.4,120.5L2173.2,120.3L2175.2,120.1L2177.2,120.5L2179.2,120.4L2179.8,120.1L2181.2,119.7L2183.2,119.5L2185.2,118.7L2187.2,117.3L2189.2,118.4L2191.2,119.8L2193.2,120.8L2195.2,122.3L2196.6,123.4L2197.2,122.6L2199.2,121.5L2201.2,120.0L2203.2,118.4L2205.2,116.8L2206.1,116.2L2207.2,116.6L2209.2,117.0L2211.2,117.6L2213.2,118.6L2215.2,119.0L2217.2,119.4L2219.2,120.1L2220.9,121.1L2221.2,121.3L2223.2,121.0L2225.2,122.1L2227.2,122.2L2229.2,121.5L2230.4,121.5L2231.2,121.5L2233.2,121.4L2235.2,121.3L2237.2,121.2L2239.2,121.2L2241.2,121.0L2243.2,120.5L2244.1,120.4L2245.2,120.1L2247.2,119.3L2249.2,118.7L2250.4,118.2L2251.2,118.4L2253.2,121.0L2255.2,122.3L2257.2,122.9L2257.8,122.7L2259.2,121.5L2261.2,120.6L2263.2,119.9L2265.2,119.2L2267.2,120.0L2269.2,120.1L2271.2,121.8L2273.2,122.3L2275.2,122.3L2275.8,122.4L2277.2,122.0L2279.2,121.5L2281.2,120.6L2283.2,119.6L2284.2,118.7L2285.2,119.1L2287.2,121.1L2289.2,122.7L2291.2,123.5L2291.6,123.4L2293.2,124.0L2295.2,123.1L2297.2,121.7L2299.2,120.8L2301.2,119.8L2301.6,119.8L2303.2,121.0L2305.2,121.8L2307.2,122.0L2309.0,122.2L2309.2,122.6L2311.2,122.7L2313.2,122.2L2315.2,120.5L2315.3,120.1L2317.2,120.1L2319.2,120.4L2321.2,120.5L2323.2,120.6L2325.2,120.9L2326.9,120.7L2327.2,120.8L2329.2,121.7L2331.2,121.7L2332.2,122.0L2333.2,121.4L2335.2,121.0L2337.2,120.3L2338.5,119.7L2339.2,120.2L2341.2,122.1L2342.7,124.3L2343.2,125.9L2345.2,132.3L2347.0,137.4L2347.2,141.4L2349.2,175.8L2349.5,180.5L2351.0,217.4L2351.2,213.9L2353.0,184.7L2353.2,180.2L2355.2,137.5L2355.4,133.0L2357.2,129.3L2359.2,125.2L2361.2,121.5L2361.7,120.3L2363.2,120.1L2365.2,119.8L2367.2,120.0L2369.2,119.7L2371.2,119.9L2372.3,120.4L2373.2,119.2L2375.2,117.9L2377.2,116.9L2377.5,117.0L2379.2,118.4L2381.2,119.3L2382.8,119.6L2383.2,119.9L2385.2,121.3L2387.2,122.2L2389.1,122.5L2389.2,122.0L2391.2,121.2L2393.2,120.8L2395.2,120.1L2395.5,119.6L2397.2,120.4L2398.6,121.5L2399.2,123.8L2401.2,131.2L2401.8,133.6L2403.2,132.3L2405.0,130.8L2405.2,130.3L2407.2,124.6L2409.2,118.9L2411.2,119.8L2413.2,120.3L2414.5,120.0L2415.2,119.9L2417.2,119.8L2419.2,119.9L2421.2,120.2L2423.2,120.0L2425.2,120.3L2427.2,121.3L2429.2,121.6L2431.2,121.2L2433.2,120.6L2435.2,120.1L2437.2,120.5L2438.7,120.4L2439.2,120.2L2441.2,120.9L2443.2,121.3L2445.2,121.7L2447.2,122.9L2449.2,123.3L2451.2,122.7L2453.2,122.5L2454.5,122.4L2455.2,121.8L2457.2,121.6L2459.2,121.0L2461.2,120.8L2463.2,120.7L2465.2,120.2L2467.2,119.5L2468.3,119.1L2469.2,119.6L2471.2,120.7L2473.2,121.6L2474.6,122.0L2475.2,122.1L2477.2,121.8L2479.2,121.3L2480.9,120.9L2481.2,120.5L2483.2,120.9L2485.2,121.8L2487.2,123.1L2489.2,122.8L2491.2,121.8L2492.5,120.7L2493.2,120.0L2495.2,119.4L2497.2,119.5L2499.2,119.3L2501.2,119.0L2503.2,118.8L2504.1,118.8L2505.2,119.6L2507.2,120.6L2509.2,121.9L2511.2,123.3L2511.5,123.1L2513.2,123.5L2515.2,124.3L2515.7,125.0L2517.2,123.9L2519.2,122.4L2519.9,121.8L2521.2,122.1L2523.2,122.4L2525.2,121.8L2527.2,122.4L2529.2,122.4L2531.2,121.7L2531.5,121.9L2533.2,121.9L2535.2,122.3L2535.8,122.6L2537.2,120.5L2537.9,119.1L2539.0,119.1" stroke="#a86d00" stroke-dasharray="4 2"/>
<path d="M1499.2,88.5L1501.2,89.7L1503.2,90.8L1505.2,92.0L1505.5,92.2L1507.2,92.0L1509.2,91.8L1511.2,91.7L1513.2,91.5L1515.2,91.3L1517.2,91.1L1519.2,90.9L1521.2,90.7L1523.2,90.5L1524.5,90.4L1525.2,90.5L1527.2,90.9L1529.2,91.2L1531.2,91.5L1533.2,91.9L1535.1,92.2L1535.2,92.2L1537.2,92.9L1539.2,93.6L1541.2,94.3L1543.2,94.9L1544.6,95.4L1545.2,95.4L1547.2,95.2L1549.2,95.0L1550.9,94.9L1551.2,94.8L1553.2,93.8L1555.2,92.7L1557.2,91.7L1558.3,91.2L1559.2,91.5L1561.2,92.0L1563.2,92.6L1565.2,93.2L1566.7,93.6L1567.2,93.5L1569.2,93.0L1571.2,92.5L1573.2,91.9L1575.2,91.4L1577.2,90.9L1577.3,90.9L1579.2,91.1L1581.2,91.3L1583.2,91.5L1585.2,91.7L1587.2,91.8L1587.8,91.9L1589.2,91.9L1591.2,91.8L1593.2,91.8L1595.2,91.7L1597.2,92.9L1599.2,94.0L1601.2,95.2L1601.5,95.4L1603.2,94.6L1605.2,93.6L1607.2,92.6L1609.2,91.7L1611.2,90.7L1613.1,89.8L1613.2,89.8L1615.2,90.4L1617.2,91.0L1619.2,91.6L1619.5,91.7L1621.2,92.9L1623.2,94.3L1624.7,95.4L1625.2,95.2L1627.2,94.5L1629.2,93.7L1631.2,92.9L1632.1,92.6L1633.2,92.6L1635.2,92.7L1637.2,92.8L1639.2,92.9L1641.2,92.9L1643.2,93.0L1645.2,93.1L1647.2,93.2L1649.2,93.2L1651.1,93.3L1651.2,93.3L1653.2,92.5L1655.2,91.7L1657.2,91.0L1657.4,90.9L1659.2,91.4L1661.2,91.9L1663.2,92.4L1665.2,92.9L1667.2,93.4L1668.0,93.6L1669.2,92.9L1671.2,91.8L1673.2,90.6L1675.2,89.5L1676.4,88.8L1677.2,89.2L1679.2,90.3L1681.2,91.4L1681.7,91.7L1683.2,91.1L1685.2,90.3L1687.0,89.6L1687.2,89.7L1689.2,90.6L1691.2,91.5L1693.2,92.4L1695.2,93.3L1697.2,94.2L1697.5,94.3L1699.2,93.8L1701.2,93.2L1703.2,92.5L1705.2,91.9L1705.9,91.7L1707.2,92.4L1709.2,93.4L1711.2,94.4L1713.2,95.5L1714.4,96.1L1715.2,95.4L1717.2,93.6L1719.2,91.8L1721.2,89.9L1721.8,89.4L1723.2,90.0L1725.2,90.9L1727.2,91.7L1729.2,92.6L1731.2,92.6L1733.2,92.7L1735.2,92.7L1737.2,92.7L1739.2,92.8L1740.8,92.8L1741.2,92.9L1743.2,93.2L1745.2,93.6L1747.2,94.0L1749.2,94.3L1751.2,94.7L1752.4,94.9L1753.2,94.8L1755.2,94.7L1757.2,94.6L1759.2,94.4L1760.8,94.3L1761.2,94.0L1763.2,92.7L1765.0,91.5L1765.2,91.5L1767.2,91.8L1769.2,92.1L1771.2,92.5L1773.2,92.8L1775.2,93.1L1777.2,93.4L1778.7,93.6L1779.2,93.6L1781.2,93.5L1783.2,93.5L1785.2,93.4L1787.2,93.4L1789.2,93.3L1790.3,93.3L1791.2,92.8L1793.2,91.8L1795.2,90.8L1797.2,89.8L1799.2,88.8L1799.8,88.5L1801.2,89.1L1803.2,90.0L1805.2,90.9L1807.2,91.8L1809.2,92.8L1811.2,93.7L1813.2,94.6L1813.5,94.7L1815.2,93.8L1817.2,92.8L1819.2,91.8L1821.2,90.7L1823.0,89.8L1823.2,89.8L1825.2,90.2L1827.2,90.6L1829.2,90.9L1831.2,91.3L1833.2,91.6L1833.6,91.7L1835.2,91.2L1837.2,90.6L1839.2,90.0L1839.9,89.8L1841.2,90.5L1843.2,91.7L1845.2,92.8L1847.2,92.3L1849.2,91.8L1851.2,91.4L1853.2,90.9L1855.2,90.4L1857.2,89.9L1857.8,89.8L1859.2,90.9L1861.2,92.4L1863.1,93.8L1863.2,93.8L1865.2,93.4L1867.2,93.0L1868.4,92.8L1869.2,92.3L1871.2,91.2L1873.2,90.1L1875.2,88.9L1876.8,88.0L1877.2,88.4L1879.2,90.2L1881.2,92.0L1882.1,92.8L1883.2,92.7L1885.2,92.5L1887.2,92.3L1889.2,92.2L1891.2,92.0L1893.2,91.8L1895.2,91.6L1897.2,91.5L1899.2,91.3L1900.0,91.2L1901.2,91.7L1903.2,92.4L1905.2,93.2L1906.3,93.6L1907.2,93.1L1909.2,92.1L1911.2,91.1L1913.2,90.1L1913.7,89.8L1915.2,90.3L1917.2,90.9L1919.2,91.5L1921.2,92.2L1923.2,92.8L1925.2,93.4L1927.2,93.9L1929.2,94.5L1930.6,94.9L1931.2,96.1L1933.2,100.0L1933.8,101.2L1935.2,113.5L1936.5,125.0L1937.2,133.9L1939.2,159.4L1939.3,160.7L1941.2,138.5L1941.5,135.0L1943.2,112.8L1945.2,105.3L1947.2,97.7L1948.5,92.8L1949.2,92.4L1951.2,91.2L1951.7,90.9L1953.2,91.2L1955.2,91.6L1955.9,91.7L1957.0,94.3L1957.2,94.4L1959.2,94.9L1961.2,95.4L1963.2,95.9L1965.2,96.4L1965.4,96.5L1967.2,96.8L1969.2,97.1L1971.2,97.4L1973.2,97.7L1975.2,98.0L1977.2,98.3L1979.1,98.6L1979.2,98.6L1981.2,99.2L1983.2,99.8L1985.2,100.4L1987.2,101.0L1989.2,101.5L1991.2,102.1L1993.2,102.7L1995.2,103.3L1997.0,103.8L1997.2,103.8L1999.2,103.4L2001.2,103.1L2003.2,102.7L2005.2,102.4L2007.2,102.1L2007.6,102.0L2009.2,103.1L2011.2,104.5L2011.8,104.9L2013.2,104.8L2015.2,104.7L2017.2,104.6L2019.2,104.5L2020.2,104.4L2021.2,104.6L2023.2,105.0L2025.2,105.3L2027.2,105.7L2028.7,106.0L2029.2,106.5L2030.0,107.4L2031.2,108.1L2033.2,109.3L2035.2,110.5L2035.3,110.6L2037.2,110.0L2039.2,109.3L2041.2,108.6L2041.6,108.5L2043.2,109.2L2045.2,110.2L2047.2,111.1L2049.0,111.9L2049.2,111.8L2051.2,110.9L2053.2,109.9L2055.2,108.9L2055.3,108.9L2057.2,109.3L2059.2,109.8L2061.2,110.2L2063.2,110.7L2063.8,110.8L2065.2,111.1L2067.2,111.4L2069.2,111.8L2071.2,112.2L2072.2,112.4L2073.2,112.5L2075.2,112.7L2077.2,113.0L2079.2,113.2L2081.2,113.4L2083.2,113.6L2084.8,113.8L2085.2,113.8L2087.2,114.0L2089.2,114.2L2091.2,114.3L2093.2,114.5L2093.3,114.5L2095.2,114.1L2097.2,113.6L2099.2,113.2L2101.2,112.7L2103.2,112.3L2105.2,111.9L2105.9,111.7L2107.2,112.1L2109.2,112.8L2111.2,113.4L2113.2,114.1L2114.4,114.5L2115.2,114.1L2117.2,113.2L2119.2,112.2L2121.2,111.3L2121.8,111.0L2123.2,112.0L2125.2,113.4L2127.2,114.8L2129.1,116.1L2129.2,116.1L2131.2,115.7L2133.2,115.3L2135.2,114.9L2135.5,114.8L2137.2,115.1L2139.2,115.5L2141.2,115.9L2143.2,116.3L2145.2,116.6L2147.2,117.0L2149.2,117.4L2151.2,117.5L2153.2,117.6L2155.2,117.7L2155.5,117.7L2157.2,116.5L2159.2,115.1L2159.7,114.8L2161.2,114.9L2163.2,115.0L2165.2,115.2L2167.1,115.3L2167.2,115.4L2169.2,116.5L2171.2,117.7L2172.4,118.4L2173.2,118.4L2175.2,118.4L2177.2,118.4L2179.2,118.4L2179.8,118.4L2181.2,117.7L2183.2,116.7L2185.2,115.8L2187.2,114.8L2189.2,116.2L2191.2,117.6L2193.2,119.0L2195.2,120.4L2196.6,121.4L2197.2,120.9L2199.2,119.4L2201.2,117.8L2203.2,116.3L2205.2,114.7L2206.1,114.0L2207.2,114.4L2209.2,115.0L2211.2,115.7L2213.2,116.4L2215.2,117.1L2217.2,117.7L2219.2,118.4L2220.9,119.0L2221.2,119.0L2223.2,119.2L2225.2,119.4L2227.2,119.5L2229.2,119.7L2230.4,119.8L2231.2,119.7L2233.2,119.5L2235.2,119.3L2237.2,119.1L2239.2,118.9L2241.2,118.7L2243.2,118.5L2244.1,118.4L2245.2,118.0L2247.2,117.2L2249.2,116.4L2250.4,115.9L2251.2,116.4L2253.2,117.6L2255.2,118.8L2257.2,119.9L2257.8,120.3L2259.2,119.7L2261.2,118.8L2263.2,118.0L2265.2,117.1L2267.2,117.8L2269.2,118.5L2271.2,119.2L2273.2,119.9L2275.2,120.6L2275.8,120.8L2277.2,120.1L2279.2,119.1L2281.2,118.1L2283.2,117.1L2284.2,116.6L2285.2,117.2L2287.2,118.5L2289.2,119.8L2291.2,121.1L2291.6,121.4L2293.2,121.9L2295.2,121.0L2297.2,120.0L2299.2,119.1L2301.2,118.2L2301.6,118.0L2303.2,118.5L2305.2,119.1L2307.2,119.7L2309.0,120.3L2309.2,120.2L2311.2,119.6L2313.2,118.9L2315.2,118.2L2315.3,118.2L2317.2,118.3L2319.2,118.4L2321.2,118.5L2323.2,118.5L2325.2,118.6L2326.9,118.7L2327.2,118.8L2329.2,119.3L2331.2,119.8L2332.2,120.1L2333.2,119.7L2335.2,118.8L2337.2,118.0L2338.5,117.4L2339.2,117.9L2341.2,119.3L2342.7,120.3L2343.2,121.4L2345.2,125.8L2347.0,129.8L2347.2,133.0L2349.2,165.2L2349.5,170.0L2351.0,205.0L2351.2,202.0L2353.0,175.0L2353.2,171.0L2355.2,130.6L2355.4,126.6L2357.2,124.3L2359.2,121.7L2361.2,119.1L2361.7,118.4L2363.2,118.3L2365.2,118.2L2367.2,118.0L2369.2,117.9L2371.2,117.8L2372.3,117.7L2373.2,117.1L2375.2,115.9L2377.2,114.7L2377.5,114.5L2379.2,115.5L2381.2,116.7L2382.8,117.7L2383.2,117.9L2385.2,118.7L2387.2,119.5L2389.1,120.3L2389.2,120.3L2391.2,119.5L2393.2,118.8L2395.2,118.1L2395.5,118.0L2397.2,118.7L2398.6,119.3L2399.2,121.7L2401.2,129.5L2401.8,131.9L2403.2,130.5L2405.0,128.8L2405.2,128.2L2407.2,122.7L2409.2,117.1L2411.2,117.4L2413.2,117.8L2414.5,118.0L2415.2,118.0L2417.2,118.0L2419.2,118.1L2421.2,118.1L2423.2,118.1L2425.2,118.2L2427.2,118.2L2429.2,118.2L2431.2,118.3L2433.2,118.3L2435.2,118.3L2437.2,118.4L2438.7,118.4L2439.2,118.5L2441.2,119.0L2443.2,119.5L2445.2,120.0L2447.2,120.5L2449.2,120.4L2451.2,120.4L2453.2,120.3L2454.5,120.3L2455.2,120.2L2457.2,119.7L2459.2,119.3L2461.2,118.9L2463.2,118.5L2465.2,118.1L2467.2,117.6L2468.3,117.4L2469.2,117.8L2471.2,118.7L2473.2,119.7L2474.6,120.3L2475.2,120.1L2477.2,119.5L2479.2,118.9L2480.9,118.4L2481.2,118.5L2483.2,119.3L2485.2,120.0L2487.2,120.8L2489.2,119.7L2491.2,118.7L2492.5,118.0L2493.2,117.9L2495.2,117.8L2497.2,117.6L2499.2,117.5L2501.2,117.3L2503.2,117.2L2504.1,117.1L2505.2,117.7L2507.2,118.9L2509.2,120.1L2511.2,121.2L2511.5,121.4L2513.2,121.8L2515.2,122.3L2515.7,122.4L2517.2,121.6L2519.2,120.5L2519.9,120.1L2521.2,120.1L2523.2,120.1L2525.2,120.1L2527.2,120.1L2529.2,120.1L2531.2,120.1L2531.5,120.1L2533.2,120.2L2535.2,120.3L2535.8,120.3L2537.2,118.2L2537.9,117.1L2539.0,117.4" stroke="#ffa500"/>
</g>
<g clip-path="url(#c2)" fill="none">
<path d="M1937.0,428.6L1939.0,425.0L1941.0,421.5L1943.0,418.1L1945.0,414.9L1947.0,411.7L1949.0,408.6L1951.0,405.6L1953.0,402.6L1955.0,399.8L1957.0,397.0L1959.0,394.3L1961.0,391.7L1963.0,389.2L1965.0,386.7L1967.0,384.3L1969.0,382.0L1971.0,379.7L1973.0,377.5L1975.0,375.3L1977.0,373.3L1979.0,371.2L1981.0,369.3L1983.0,367.4L1985.0,365.5L1987.0,363.7L1989.0,361.9L1991.0,360.2L1993.0,358.6L1995.0,357.0L1997.0,355.4L1999.0,353.9L2001.0,352.4L2003.0,351.0L2005.0,349.6L2007.0,348.2L2009.0,346.9L2011.0,345.6L2013.0,344.3L2015.0,343.1L2017.0,342.0L2019.0,340.8L2021.0,339.7L2023.0,338.6L2025.0,337.6L2027.0,336.5L2029.0,335.5L2031.0,334.6L2033.0,333.6L2035.0,332.7L2037.0,331.8L2039.0,331.0L2041.0,330.1L2043.0,329.3L2045.0,328.5L2047.0,327.7L2049.0,327.0L2051.0,326.3L2053.0,325.6L2055.0,324.9L2057.0,324.2L2059.0,323.6L2061.0,322.9L2063.0,322.3L2065.0,321.7L2067.0,321.1L2069.0,320.6L2071.0,320.0L2073.0,319.5L2075.0,319.0L2077.0,318.5L2079.0,318.0L2081.0,317.5L2083.0,317.0L2085.0,316.6L2087.0,316.1L2089.0,315.7L2091.0,315.3L2093.0,314.9L2095.0,314.5L2097.0,314.1L2099.0,313.7L2101.0,313.4L2103.0,313.0L2105.0,312.7L2107.0,312.4L2109.0,312.0L2111.0,311.7L2113.0,311.4L2115.0,311.1L2117.0,310.8L2119.0,310.6L2121.0,310.3L2123.0,310.0L2125.0,309.8L2127.0,309.5L2129.0,309.3L2131.0,309.0L2133.0,308.8L2135.0,308.6L2137.0,308.4L2139.0,308.1L2141.0,307.9L2143.0,307.7L2145.0,307.5L2147.0,307.4L2149.0,307.2L2151.0,307.0L2153.0,306.8L2155.0,306.6L2157.0,306.5L2159.0,306.3L2161.0,306.2L2163.0,306.0L2165.0,305.9L2167.0,305.7L2169.0,305.6L2171.0,305.4L2173.0,305.3L2175.0,305.2L2177.0,305.1L2179.0,304.9L2181.0,304.8L2183.0,304.7L2185.0,304.6L2187.0,304.5L2189.0,304.4L2191.0,304.3L2193.0,304.2L2195.0,304.1L2197.0,304.0L2199.0,303.9L2201.0,303.8L2203.0,303.7L2205.0,303.6L2207.0,303.5L2209.0,303.5L2211.0,303.4L2213.0,303.3L2215.0,303.2L2217.0,303.1L2219.0,303.1L2221.0,303.0L2223.0,302.9L2225.0,302.9L2227.0,302.8L2229.0,302.7L2231.0,302.7L2233.0,302.6L2235.0,302.6L2237.0,302.5L2239.0,302.5L2241.0,302.4L2243.0,302.4L2245.0,302.3L2247.0,302.3L2249.0,302.2L2251.0,302.2L2253.0,302.1L2255.0,302.1L2257.0,302.0L2259.0,302.0L2261.0,301.9L2263.0,301.9L2265.0,301.9L2267.0,301.8L2269.0,301.8L2271.0,301.8L2273.0,301.7L2275.0,301.7L2277.0,301.6L2279.0,301.6L2281.0,301.6L2283.0,301.6L2285.0,301.5L2287.0,301.5L2289.0,301.5L2291.0,301.4L2293.0,301.4L2295.0,301.4L2297.0,301.4L2299.0,301.3L2301.0,301.3L2303.0,301.3L2305.0,301.3L2307.0,301.2L2309.0,301.2L2311.0,301.2L2313.0,301.2L2315.0,301.1L2317.0,301.1L2319.0,301.1L2321.0,301.1L2323.0,301.1L2325.0,301.0L2327.0,301.0L2329.0,301.0L2331.0,301.0L2333.0,301.0L2335.0,301.0L2337.0,300.9L2339.0,300.9L2341.0,300.9L2343.0,300.9L2345.0,300.9L2347.0,300.9L2349.0,300.8L2351.0,300.8L2353.0,300.8L2355.0,300.8L2357.0,300.8L2359.0,300.8L2361.0,300.8L2363.0,300.8L2365.0,300.7L2367.0,300.7L2369.0,300.7L2371.0,300.7L2373.0,300.7L2375.0,300.7L2377.0,300.7L2379.0,300.7L2381.0,300.7L2383.0,300.6L2385.0,300.6L2387.0,300.6L2389.0,300.6L2391.0,300.6L2393.0,300.6L2395.0,300.6L2397.0,300.6L2399.0,300.6L2401.0,300.6L2403.0,300.6L2405.0,300.5L2407.0,300.5L2409.0,300.5L2411.0,300.5L2413.0,300.5L2415.0,300.5L2417.0,300.5L2419.0,300.5L2421.0,300.5L2423.0,300.5L2425.0,300.5L2427.0,300.5L2429.0,300.5L2431.0,300.5L2433.0,300.4L2435.0,300.4L2437.0,300.4L2439.0,300.4L2441.0,300.4L2443.0,300.4L2445.0,300.4L2447.0,300.4L2449.0,300.4L2451.0,300.4L2453.0,300.4L2455.0,300.4L2457.0,300.4L2459.0,300.4L2461.0,300.4L2463.0,300.4L2465.0,300.4L2467.0,300.3L2469.0,300.3L2471.0,300.3L2473.0,300.3L2475.0,300.3L2477.0,300.3L2479.0,300.3L2481.0,300.3L2483.0,300.3L2485.0,300.3L2487.0,300.3L2489.0,300.3L2491.0,300.3L2493.0,300.3L2495.0,300.3L2497.0,300.3L2499.0,300.3L2501.0,300.3L2503.0,300.3L2505.0,300.3L2507.0,300.3L2509.0,300.3L2511.0,300.3L2513.0,300.3L2515.0,300.2L2517.0,300.2L2519.0,300.2L2521.0,300.2L2523.0,300.2L2525.0,300.2L2527.0,300.2L2529.0,300.2L2531.0,300.2L2533.0,300.2L2535.0,300.2L2537.0,300.2L2539.0,300.2" stroke="#5cf01a" stroke-width="1.3" stroke-dasharray="4 2" opacity="0.6" transform="translate(2,1)"/>
<path d="M1487.0,429.3L1489.0,429.3L1491.0,429.3L1493.0,429.3L1495.0,429.3L1497.0,429.3L1499.0,429.3L1501.0,429.3L1503.0,429.3L1505.0,429.3L1507.0,429.3L1509.0,429.3L1511.0,429.3L1513.0,429.3L1515.0,429.3L1517.0,429.3L1519.0,429.3L1521.0,429.3L1523.0,429.3L1525.0,429.3L1527.0,429.3L1529.0,429.3L1531.0,429.3L1533.0,429.3L1535.0,429.3L1537.0,429.3L1539.0,429.3L1541.0,429.3L1543.0,429.3L1545.0,429.3L1547.0,429.3L1549.0,429.3L1551.0,429.3L1553.0,429.3L1555.0,429.3L1557.0,429.3L1559.0,429.3L1561.0,429.3L1563.0,429.3L1565.0,429.3L1567.0,429.3L1569.0,429.3L1571.0,429.3L1573.0,429.3L1575.0,429.3L1577.0,429.3L1579.0,429.3L1581.0,429.3L1583.0,429.3L1585.0,429.3L1587.0,429.3L1589.0,429.3L1591.0,429.3L1593.0,429.3L1595.0,429.3L1597.0,429.3L1599.0,429.3L1601.0,429.3L1603.0,429.3L1605.0,429.3L1607.0,429.3L1609.0,429.3L1611.0,429.3L1613.0,429.3L1615.0,429.3L1617.0,429.3L1619.0,429.3L1621.0,429.3L1623.0,429.3L1625.0,429.3L1627.0,429.3L1629.0,429.3L1631.0,429.3L1633.0,429.3L1635.0,429.3L1637.0,429.3L1639.0,429.3L1641.0,429.3L1643.0,429.3L1645.0,429.3L1647.0,429.3L1649.0,429.3L1651.0,429.3L1653.0,429.3L1655.0,429.3L1657.0,429.3L1659.0,429.3L1661.0,429.3L1663.0,429.3L1665.0,429.3L1667.0,429.3L1669.0,429.3L1671.0,429.3L1673.0,429.3L1675.0,429.3L1677.0,429.3L1679.0,429.3L1681.0,429.3L1683.0,429.3L1685.0,429.3L1687.0,429.3L1689.0,429.3L1691.0,429.3L1693.0,429.3L1695.0,429.3L1697.0,429.3L1699.0,429.3L1701.0,429.3L1703.0,429.3L1705.0,429.3L1707.0,429.3L1709.0,429.3L1711.0,429.3L1713.0,429.3L1715.0,429.3L1717.0,429.3L1719.0,429.3L1721.0,429.3L1723.0,429.3L1725.0,429.3L1727.0,429.3L1729.0,429.3L1731.0,429.3L1733.0,429.3L1735.0,429.3L1737.0,429.3L1739.0,429.3L1741.0,429.3L1743.0,429.3L1745.0,429.3L1747.0,429.3L1749.0,429.3L1751.0,429.3L1753.0,429.3L1755.0,429.3L1757.0,429.3L1759.0,429.3L1761.0,429.3L1763.0,429.3L1765.0,429.3L1767.0,429.3L1769.0,429.3L1771.0,429.3L1773.0,429.3L1775.0,429.3L1777.0,429.3L1779.0,429.3L1781.0,429.3L1783.0,429.3L1785.0,429.3L1787.0,429.3L1789.0,429.3L1791.0,429.3L1793.0,429.3L1795.0,429.3L1797.0,429.3L1799.0,429.3L1801.0,429.3L1803.0,429.3L1805.0,429.3L1807.0,429.3L1809.0,429.3L1811.0,429.3L1813.0,429.3L1815.0,429.3L1817.0,429.3L1819.0,429.3L1821.0,429.3L1823.0,429.3L1825.0,429.3L1827.0,429.3L1829.0,429.3L1831.0,429.3L1833.0,429.3L1835.0,429.3L1837.0,429.3L1839.0,429.3L1841.0,429.3L1843.0,429.3L1845.0,429.3L1847.0,429.3L1849.0,429.3L1851.0,429.3L1853.0,429.3L1855.0,429.3L1857.0,429.3L1859.0,429.3L1861.0,429.3L1863.0,429.3L1865.0,429.3L1867.0,429.3L1869.0,429.3L1871.0,429.3L1873.0,429.3L1875.0,429.3L1877.0,429.3L1879.0,429.3L1881.0,429.3L1883.0,429.3L1885.0,429.3L1887.0,429.3L1889.0,429.3L1891.0,429.3L1893.0,429.3L1895.0,429.3L1897.0,429.3L1899.0,429.3L1901.0,429.3L1903.0,429.3L1905.0,429.3L1907.0,429.3L1909.0,429.3L1911.0,429.3L1913.0,429.3L1915.0,429.3L1917.0,429.3L1919.0,429.3L1921.0,429.3L1923.0,429.3L1925.0,429.3L1927.0,429.3L1929.0,429.3L1931.0,429.3L1933.0,429.3L1935.0,429.3L1937.0,428.6L1939.0,425.0L1941.0,421.5L1943.0,418.1L1945.0,414.9L1947.0,411.7L1949.0,408.6L1951.0,405.6L1953.0,402.6L1955.0,399.8L1957.0,397.0L1959.0,394.3L1961.0,391.7L1963.0,389.2L1965.0,386.7L1967.0,384.3L1969.0,382.0L1971.0,379.7L1973.0,377.5L1975.0,375.3L1977.0,373.3L1979.0,371.2L1981.0,369.3L1983.0,367.4L1985.0,365.5L1987.0,363.7L1989.0,361.9L1991.0,360.2L1993.0,358.6L1995.0,357.0L1997.0,355.4L1999.0,353.9L2001.0,352.4L2003.0,351.0L2005.0,349.6L2007.0,348.2L2009.0,346.9L2011.0,345.6L2013.0,344.3L2015.0,343.1L2017.0,342.0L2019.0,340.8L2021.0,339.7L2023.0,338.6L2025.0,337.6L2027.0,336.5L2029.0,335.5L2031.0,334.6L2033.0,333.6L2035.0,332.7L2037.0,331.8L2039.0,331.0L2041.0,330.1L2043.0,329.3L2045.0,328.5L2047.0,327.7L2049.0,327.0L2051.0,326.3L2053.0,325.6L2055.0,324.9L2057.0,324.2L2059.0,323.6L2061.0,322.9L2063.0,322.3L2065.0,321.7L2067.0,321.1L2069.0,320.6L2071.0,320.0L2073.0,319.5L2075.0,319.0L2077.0,318.5L2079.0,318.0L2081.0,317.5L2083.0,317.0L2085.0,316.6L2087.0,316.1L2089.0,315.7L2091.0,315.3L2093.0,314.9L2095.0,314.5L2097.0,314.1L2099.0,313.7L2101.0,313.4L2103.0,313.0L2105.0,312.7L2107.0,312.4L2109.0,312.0L2111.0,311.7L2113.0,311.4L2115.0,311.1L2117.0,310.8L2119.0,310.6L2121.0,310.3L2123.0,310.0L2125.0,309.8L2127.0,309.5L2129.0,309.3L2131.0,309.0L2133.0,308.8L2135.0,308.6L2137.0,308.4L2139.0,308.1L2141.0,307.9L2143.0,307.7L2145.0,307.5L2147.0,307.4L2149.0,307.2L2151.0,307.0L2153.0,306.8L2155.0,306.6L2157.0,306.5L2159.0,306.3L2161.0,306.2L2163.0,306.0L2165.0,305.9L2167.0,305.7L2169.0,305.6L2171.0,305.4L2173.0,305.3L2175.0,305.2L2177.0,305.1L2179.0,304.9L2181.0,304.8L2183.0,304.7L2185.0,304.6L2187.0,304.5L2189.0,304.4L2191.0,304.3L2193.0,304.2L2195.0,304.1L2197.0,304.0L2199.0,303.9L2201.0,303.8L2203.0,303.7L2205.0,303.6L2207.0,303.5L2209.0,303.5L2211.0,303.4L2213.0,303.3L2215.0,303.2L2217.0,303.1L2219.0,303.1L2221.0,303.0L2223.0,302.9L2225.0,302.9L2227.0,302.8L2229.0,302.7L2231.0,302.7L2233.0,302.6L2235.0,302.6L2237.0,302.5L2239.0,302.5L2241.0,302.4L2243.0,302.4L2245.0,302.3L2247.0,302.3L2249.0,302.2L2251.0,302.2L2253.0,302.1L2255.0,302.1L2257.0,302.0L2259.0,302.0L2261.0,301.9L2263.0,301.9L2265.0,301.9L2267.0,301.8L2269.0,301.8L2271.0,301.8L2273.0,301.7L2275.0,301.7L2277.0,301.6L2279.0,301.6L2281.0,301.6L2283.0,301.6L2285.0,301.5L2287.0,301.5L2289.0,301.5L2291.0,301.4L2293.0,301.4L2295.0,301.4L2297.0,301.4L2299.0,301.3L2301.0,301.3L2303.0,301.3L2305.0,301.3L2307.0,301.2L2309.0,301.2L2311.0,301.2L2313.0,301.2L2315.0,301.1L2317.0,301.1L2319.0,301.1L2321.0,301.1L2323.0,301.1L2325.0,301.0L2327.0,301.0L2329.0,301.0L2331.0,301.0L2333.0,301.0L2335.0,301.0L2337.0,300.9L2339.0,300.9L2341.0,300.9L2343.0,300.9L2345.0,300.9L2347.0,300.9L2349.0,300.8L2351.0,300.8L2353.0,300.8L2355.0,300.8L2357.0,300.8L2359.0,300.8L2361.0,300.8L2363.0,300.8L2365.0,300.7L2367.0,300.7L2369.0,300.7L2371.0,300.7L2373.0,300.7L2375.0,300.7L2377.0,300.7L2379.0,300.7L2381.0,300.7L2383.0,300.6L2385.0,300.6L2387.0,300.6L2389.0,300.6L2391.0,300.6L2393.0,300.6L2395.0,300.6L2397.0,300.6L2399.0,300.6L2401.0,300.6L2403.0,300.6L2405.0,300.5L2407.0,300.5L2409.0,300.5L2411.0,300.5L2413.0,300.5L2415.0,300.5L2417.0,300.5L2419.0,300.5L2421.0,300.5L2423.0,300.5L2425.0,300.5L2427.0,300.5L2429.0,300.5L2431.0,300.5L2433.0,300.4L2435.0,300.4L2437.0,300.4L2439.0,300.4L2441.0,300.4L2443.0,300.4L2445.0,300.4L2447.0,300.4L2449.0,300.4L2451.0,300.4L2453.0,300.4L2455.0,300.4L2457.0,300.4L2459.0,300.4L2461.0,300.4L2463.0,300.4L2465.0,300.4L2467.0,300.3L2469.0,300.3L2471.0,300.3L2473.0,300.3L2475.0,300.3L2477.0,300.3L2479.0,300.3L2481.0,300.3L2483.0,300.3L2485.0,300.3L2487.0,300.3L2489.0,300.3L2491.0,300.3L2493.0,300.3L2495.0,300.3L2497.0,300.3L2499.0,300.3L2501.0,300.3L2503.0,300.3L2505.0,300.3L2507.0,300.3L2509.0,300.3L2511.0,300.3L2513.0,300.3L2515.0,300.2L2517.0,300.2L2519.0,300.2L2521.0,300.2L2523.0,300.2L2525.0,300.2L2527.0,300.2L2529.0,300.2L2531.0,300.2L2533.0,300.2L2535.0,300.2L2537.0,300.2L2539.0,300.2" stroke="#5cf01a" stroke-width="1.2"/>
</g>
<g clip-path="url(#c3)" fill="none" shape-rendering="crispEdges">
<path d="M1502.0,594.0L1506.0,594.5L1510.0,594.9L1514.0,596.2L1518.0,598.7L1522.0,595.3L1526.0,597.9L1530.0,598.1L1534.0,596.1L1538.0,595.5L1542.0,596.7L1546.0,597.6L1550.0,598.8L1554.0,597.6L1558.0,598.6L1562.0,596.3L1566.0,595.8L1570.0,594.7L1574.0,595.1L1578.0,595.9L1582.0,596.6L1586.0,595.1L1590.0,597.6L1594.0,596.6L1598.0,596.0L1602.0,595.8L1606.0,598.9L1610.0,597.0L1614.0,596.0L1618.0,596.0L1622.0,599.0L1626.0,596.2L1630.0,597.9L1634.0,598.0L1638.0,593.9L1642.0,598.1L1646.0,596.7L1650.0,596.1L1654.0,597.0L1658.0,598.4L1662.0,598.1L1666.0,598.0L1670.0,596.4L1674.0,598.3L1678.0,598.5L1682.0,598.8L1686.0,598.0L1690.0,599.0L1694.0,599.3L1698.0,597.9L1700.0,598.3L1702.0,598.2L1706.0,598.4L1710.0,598.8L1714.0,595.9L1718.0,597.3L1722.0,597.9L1726.0,594.9L1730.0,595.5L1734.0,598.9L1738.0,596.1L1742.0,596.9L1746.0,598.0L1750.0,597.2L1754.0,596.9L1758.0,597.2L1762.0,597.2L1766.0,596.8L1770.0,597.7L1774.0,599.4L1778.0,598.2L1782.0,599.7L1786.0,598.8L1790.0,598.9L1794.0,598.5L1798.0,597.3L1802.0,597.8L1806.0,597.4L1810.0,595.6L1814.0,597.6L1818.0,597.4L1822.0,597.2L1826.0,596.1L1830.0,593.8L1834.0,598.2L1838.0,596.4L1842.0,594.0L1846.0,597.1L1850.0,595.5L1854.0,597.0L1858.0,596.1L1862.0,597.2L1866.0,595.9L1870.0,595.9L1874.0,595.9L1878.0,597.6L1882.0,595.4L1886.0,598.4L1890.0,597.9L1894.0,596.4L1898.0,596.8L1902.0,596.2L1906.0,596.7L1910.0,597.5L1914.0,595.6L1918.0,596.9L1922.0,596.9L1926.0,596.5L1928.0,597.5L1930.0,654.2L1934.0,655.4L1938.0,657.7L1942.0,655.3L1946.0,538.2L1950.0,528.1L1954.0,518.2L1958.0,515.5L1962.0,514.6L1966.0,511.8L1970.0,511.7L1971.6,511.5L1974.0,512.0L1978.0,513.7L1982.0,515.9L1986.0,515.8L1990.0,516.0L1994.0,519.0L1998.0,520.2L2002.0,519.6L2006.0,522.3L2010.0,522.0L2014.0,523.3L2018.0,524.0L2022.0,526.4L2026.0,525.1L2028.7,526.1L2030.0,526.9L2034.0,528.8L2038.0,530.0L2042.0,528.6L2046.0,532.1L2050.0,532.1L2054.0,534.0L2058.0,534.7L2062.0,533.7L2066.0,535.1L2070.0,535.5L2074.0,537.1L2078.0,539.3L2082.0,538.3L2086.0,538.4L2090.0,542.8L2094.0,539.8L2098.0,541.8L2102.0,542.6L2106.0,542.0L2110.0,545.0L2114.0,546.2L2118.0,545.8L2122.0,546.9L2126.0,547.7L2129.7,546.8L2130.0,549.0L2134.0,547.6L2138.0,548.0L2142.0,549.6L2146.0,550.5L2150.0,549.1L2154.0,551.8L2158.0,553.0L2162.0,551.6L2166.0,551.6L2170.0,552.1L2174.0,551.6L2178.0,551.3L2182.0,553.1L2186.0,553.5L2190.0,552.6L2194.0,553.2L2198.0,553.5L2198.7,553.5L2202.0,553.2L2206.0,552.7L2210.0,555.4L2214.0,554.1L2218.0,554.6L2222.0,556.3L2226.0,553.5L2230.0,554.4L2234.0,552.2L2238.0,553.2L2242.0,555.0L2246.0,554.3L2250.0,553.2L2254.0,553.0L2258.0,554.8L2262.0,553.1L2266.0,554.7L2270.0,554.1L2274.0,553.5L2278.0,553.8L2282.0,554.7L2286.0,553.9L2290.0,552.9L2294.0,554.5L2298.0,553.9L2302.0,554.3L2306.0,555.4L2310.0,555.3L2314.0,556.2L2318.0,554.9L2322.0,554.6L2326.0,554.6L2330.0,555.2L2334.0,553.8L2336.8,554.2L2338.0,572.9L2342.0,582.9L2343.0,586.3L2346.0,584.4L2347.0,580.0L2350.0,586.2L2351.0,587.8L2354.0,564.1L2355.0,556.3L2358.0,557.9L2362.0,555.0L2366.0,556.6L2370.0,555.4L2374.0,553.8L2378.0,554.3L2382.0,552.5L2386.0,547.5L2388.6,547.1L2390.0,537.8L2394.0,532.2L2395.3,536.2L2397.0,654.7L2398.0,653.8L2402.0,657.2L2403.0,654.7L2404.6,555.7L2406.0,555.8L2410.0,554.5L2414.0,554.2L2418.0,553.8L2422.0,555.0L2426.0,553.2L2430.0,553.7L2434.0,554.1L2438.0,553.3L2442.0,552.2L2446.0,552.3L2450.0,552.9L2454.0,552.0L2458.0,553.7L2462.0,552.4L2466.0,552.2L2470.0,551.0L2474.0,552.5L2478.0,551.4L2482.0,550.5L2486.0,550.7L2490.0,553.7L2494.0,550.2L2498.0,549.7L2502.0,551.6L2506.0,550.7L2510.0,549.2L2514.0,550.6L2518.0,547.4L2522.0,548.3L2526.0,553.9L2530.0,563.9L2534.0,559.2L2538.0,558.7" stroke="#a86d00" stroke-dasharray="4 2"/>
<path d="M1502.0,606.8L1506.0,606.7L1510.0,606.9L1514.0,604.9L1518.0,608.2L1522.0,605.3L1526.0,608.5L1530.0,608.0L1534.0,608.0L1538.0,607.8L1542.0,607.1L1546.0,606.3L1550.0,606.7L1554.0,608.9L1558.0,606.8L1562.0,607.2L1566.0,606.5L1570.0,606.6L1574.0,606.7L1578.0,607.2L1582.0,606.7L1586.0,606.8L1590.0,606.6L1594.0,607.4L1598.0,605.8L1602.0,607.3L1606.0,608.7L1610.0,606.6L1614.0,607.5L1618.0,610.7L1622.0,606.5L1626.0,605.6L1630.0,606.7L1634.0,609.1L1638.0,609.3L1642.0,605.9L1646.0,608.1L1650.0,607.9L1654.0,607.5L1658.0,606.2L1662.0,609.4L1666.0,607.1L1670.0,608.1L1674.0,607.6L1678.0,609.5L1682.0,608.7L1686.0,606.2L1690.0,607.2L1694.0,608.7L1698.0,606.3L1700.0,607.5L1702.0,608.4L1706.0,606.6L1710.0,607.1L1714.0,606.5L1718.0,608.5L1722.0,607.4L1726.0,608.8L1730.0,607.8L1734.0,608.4L1738.0,607.8L1742.0,608.9L1746.0,608.1L1750.0,607.3L1754.0,609.7L1758.0,609.5L1762.0,610.7L1766.0,607.9L1770.0,607.4L1774.0,606.6L1778.0,604.1L1782.0,607.1L1786.0,609.1L1790.0,607.6L1794.0,605.6L1798.0,608.9L1802.0,607.3L1806.0,607.2L1810.0,606.9L1814.0,607.2L1818.0,607.9L1822.0,605.5L1826.0,607.1L1830.0,606.7L1834.0,608.4L1838.0,605.9L1842.0,608.8L1846.0,607.6L1850.0,608.7L1854.0,606.1L1858.0,607.7L1862.0,607.0L1866.0,604.6L1870.0,605.9L1874.0,605.9L1878.0,605.8L1882.0,606.6L1886.0,606.1L1890.0,607.2L1894.0,607.9L1898.0,606.5L1902.0,605.6L1906.0,608.3L1910.0,606.7L1914.0,606.9L1918.0,606.4L1922.0,605.9L1926.0,607.0L1928.0,605.8L1930.0,665.0L1934.0,663.6L1938.0,663.8L1942.0,665.4L1946.0,551.0L1950.0,538.9L1954.0,530.3L1958.0,527.2L1962.0,525.9L1966.0,523.7L1970.0,523.5L1971.6,525.2L1974.0,525.1L1978.0,524.1L1982.0,525.2L1986.0,528.3L1990.0,527.5L1994.0,530.4L1998.0,529.6L2002.0,532.4L2006.0,534.5L2010.0,534.7L2014.0,534.9L2018.0,535.6L2022.0,536.0L2026.0,536.6L2028.7,538.3L2030.0,538.6L2034.0,538.7L2038.0,537.9L2042.0,539.8L2046.0,541.7L2050.0,542.4L2054.0,541.8L2058.0,544.9L2062.0,547.8L2066.0,544.3L2070.0,546.5L2074.0,549.1L2078.0,547.6L2082.0,548.4L2086.0,549.9L2090.0,551.2L2094.0,551.1L2098.0,553.5L2102.0,551.1L2106.0,554.7L2110.0,555.2L2114.0,555.4L2118.0,556.9L2122.0,557.5L2126.0,559.9L2129.7,558.9L2130.0,559.3L2134.0,558.0L2138.0,558.4L2142.0,559.5L2146.0,558.4L2150.0,559.7L2154.0,559.7L2158.0,561.1L2162.0,562.2L2166.0,563.3L2170.0,560.3L2174.0,562.4L2178.0,563.8L2182.0,564.5L2186.0,564.9L2190.0,562.2L2194.0,563.7L2198.0,565.4L2198.7,565.9L2202.0,565.2L2206.0,565.2L2210.0,565.3L2214.0,564.3L2218.0,565.3L2222.0,565.8L2226.0,564.2L2230.0,565.6L2234.0,561.2L2238.0,564.1L2242.0,566.7L2246.0,566.1L2250.0,566.9L2254.0,565.4L2258.0,563.7L2262.0,564.2L2266.0,566.2L2270.0,562.4L2274.0,563.4L2278.0,562.6L2282.0,563.9L2286.0,564.0L2290.0,565.2L2294.0,563.8L2298.0,566.8L2302.0,565.8L2306.0,564.8L2310.0,564.5L2314.0,564.0L2318.0,565.9L2322.0,567.8L2326.0,565.4L2330.0,564.2L2334.0,569.2L2336.8,571.5L2338.0,591.4L2342.0,614.6L2343.0,623.1L2346.0,620.0L2347.0,618.4L2350.0,623.6L2351.0,624.5L2354.0,581.9L2355.0,567.9L2358.0,566.3L2362.0,566.2L2366.0,565.0L2370.0,566.5L2374.0,564.3L2378.0,566.3L2382.0,566.8L2386.0,566.9L2388.6,566.8L2390.0,563.5L2394.0,557.7L2395.3,556.0L2397.0,664.4L2398.0,663.7L2402.0,664.7L2403.0,664.7L2404.6,565.0L2406.0,566.4L2410.0,564.8L2414.0,565.5L2418.0,566.5L2422.0,566.5L2426.0,564.6L2430.0,565.6L2434.0,564.6L2438.0,567.0L2442.0,566.1L2446.0,565.5L2450.0,563.8L2454.0,563.3L2458.0,563.9L2462.0,563.0L2466.0,562.6L2470.0,563.5L2474.0,561.2L2478.0,560.2L2482.0,561.1L2486.0,560.7L2490.0,561.7L2494.0,560.5L2498.0,561.0L2502.0,558.7L2506.0,562.2L2510.0,560.6L2514.0,558.8L2518.0,559.9L2522.0,560.8L2526.0,567.2L2530.0,573.0L2534.0,570.5L2538.0,567.5" stroke="#a86d00" stroke-dasharray="4 2"/>
<path d="M1502.0,600.9L1506.0,601.2L1510.0,601.7L1514.0,602.1L1518.0,602.4L1522.0,602.4L1526.0,602.2L1530.0,602.0L1534.0,601.8L1538.0,601.6L1542.0,601.5L1546.0,601.6L1550.0,601.7L1554.0,602.0L1558.0,602.1L1562.0,602.1L1566.0,602.0L1570.0,601.9L1574.0,601.7L1578.0,601.6L1582.0,601.7L1586.0,601.9L1590.0,602.0L1594.0,602.0L1598.0,602.0L1602.0,602.0L1606.0,602.0L1610.0,602.1L1614.0,602.3L1618.0,602.3L1622.0,602.3L1626.0,602.1L1630.0,601.9L1634.0,601.8L1638.0,601.8L1642.0,601.9L1646.0,602.2L1650.0,602.6L1654.0,602.9L1658.0,603.0L1662.0,603.0L1666.0,602.8L1670.0,602.5L1674.0,602.2L1678.0,602.1L1682.0,602.1L1686.0,602.2L1690.0,602.2L1694.0,602.3L1698.0,602.4L1700.0,602.6L1702.0,602.9L1706.0,603.1L1710.0,603.2L1714.0,603.1L1718.0,602.9L1722.0,602.7L1726.0,602.5L1730.0,602.4L1734.0,602.4L1738.0,602.6L1742.0,602.7L1746.0,602.9L1750.0,603.1L1754.0,603.1L1758.0,603.1L1762.0,602.9L1766.0,602.8L1770.0,602.8L1774.0,602.9L1778.0,603.1L1782.0,603.2L1786.0,603.3L1790.0,603.2L1794.0,603.1L1798.0,602.9L1802.0,602.7L1806.0,602.3L1810.0,602.1L1814.0,602.0L1818.0,602.0L1822.0,602.1L1826.0,602.0L1830.0,602.0L1834.0,601.9L1838.0,601.8L1842.0,601.7L1846.0,601.7L1850.0,601.6L1854.0,601.6L1858.0,601.5L1862.0,601.3L1866.0,601.0L1870.0,600.8L1874.0,601.1L1878.0,601.6L1882.0,602.1L1886.0,602.4L1890.0,602.4L1894.0,602.3L1898.0,602.1L1902.0,602.0L1906.0,601.9L1910.0,601.8L1914.0,601.6L1918.0,601.4L1922.0,601.2L1926.0,601.1L1928.0,601.1L1930.0,659.6L1934.0,659.9L1938.0,660.3L1942.0,660.6L1946.0,543.6L1950.0,533.4L1954.0,522.9L1958.0,521.4L1962.0,520.1L1966.0,519.1L1970.0,518.2L1971.6,517.9L1974.0,518.5L1978.0,519.5L1982.0,520.4L1986.0,521.5L1990.0,522.8L1994.0,524.1L1998.0,525.3L2002.0,526.5L2006.0,527.5L2010.0,528.4L2014.0,529.3L2018.0,530.1L2022.0,530.8L2026.0,531.4L2028.7,531.7L2030.0,532.0L2034.0,533.0L2038.0,534.0L2042.0,535.1L2046.0,536.1L2050.0,537.1L2054.0,538.0L2058.0,538.8L2062.0,539.6L2066.0,540.4L2070.0,541.2L2074.0,542.0L2078.0,542.8L2082.0,543.6L2086.0,544.4L2090.0,545.3L2094.0,546.2L2098.0,547.1L2102.0,547.9L2106.0,548.7L2110.0,549.5L2114.0,550.3L2118.0,551.2L2122.0,552.2L2126.0,553.2L2129.7,554.1L2130.0,554.1L2134.0,554.2L2138.0,554.3L2142.0,554.4L2146.0,554.8L2150.0,555.3L2154.0,555.9L2158.0,556.4L2162.0,556.7L2166.0,556.9L2170.0,557.1L2174.0,557.3L2178.0,557.5L2182.0,557.7L2186.0,558.0L2190.0,558.4L2194.0,559.0L2198.0,559.5L2198.7,559.6L2202.0,559.6L2206.0,559.6L2210.0,559.7L2214.0,559.8L2218.0,559.8L2222.0,559.6L2226.0,559.3L2230.0,559.1L2234.0,559.0L2238.0,559.2L2242.0,559.5L2246.0,559.9L2250.0,560.0L2254.0,560.0L2258.0,559.7L2262.0,559.4L2266.0,559.2L2270.0,559.1L2274.0,559.2L2278.0,559.2L2282.0,559.2L2286.0,559.2L2290.0,559.2L2294.0,559.4L2298.0,559.6L2302.0,559.8L2306.0,560.0L2310.0,560.3L2314.0,560.4L2318.0,560.4L2322.0,560.4L2326.0,560.2L2330.0,560.1L2334.0,560.0L2336.8,559.9L2338.0,579.1L2342.0,589.0L2343.0,591.8L2346.0,587.1L2347.0,585.7L2350.0,591.2L2351.0,593.0L2354.0,569.6L2355.0,561.5L2358.0,561.1L2362.0,560.6L2366.0,560.2L2370.0,560.0L2374.0,560.1L2378.0,560.3L2382.0,560.5L2386.0,560.7L2388.6,560.7L2390.0,558.7L2394.0,553.0L2395.3,551.1L2397.0,659.5L2398.0,659.6L2402.0,659.9L2403.0,660.1L2404.6,560.7L2406.0,560.7L2410.0,560.3L2414.0,559.9L2418.0,559.5L2422.0,559.3L2426.0,559.2L2430.0,559.1L2434.0,559.0L2438.0,559.0L2442.0,559.0L2446.0,558.9L2450.0,558.7L2454.0,558.3L2458.0,557.9L2462.0,557.7L2466.0,557.6L2470.0,557.4L2474.0,557.2L2478.0,557.0L2482.0,556.9L2486.0,556.7L2490.0,556.4L2494.0,556.2L2498.0,555.9L2502.0,555.6L2506.0,555.3L2510.0,554.8L2514.0,554.5L2518.0,554.3L2522.0,554.2L2526.0,561.0L2530.0,567.8L2534.0,564.5L2538.0,561.2" stroke="#ffa500"/>
</g>
<g clip-path="url(#c4)" fill="none" shape-rendering="crispEdges">
<path d="M1502.0,758.5L1506.0,758.1L1510.0,757.3L1514.0,757.5L1518.0,756.4L1522.0,755.5L1526.0,757.9L1530.0,757.0L1534.0,755.2L1538.0,755.8L1542.0,755.9L1546.0,756.4L1550.0,756.9L1554.0,756.2L1558.0,755.8L1562.0,756.7L1566.0,756.4L1570.0,756.8L1574.0,756.1L1578.0,755.6L1582.0,757.4L1586.0,756.5L1590.0,757.0L1594.0,756.6L1598.0,756.6L1602.0,756.5L1606.0,756.8L1610.0,756.7L1614.0,756.1L1618.0,755.3L1622.0,757.8L1626.0,756.5L1630.0,756.4L1634.0,755.3L1638.0,755.6L1642.0,756.3L1646.0,754.9L1650.0,755.7L1654.0,756.5L1658.0,757.8L1662.0,756.3L1666.0,755.2L1670.0,755.0L1674.0,756.5L1678.0,755.2L1682.0,755.6L1686.0,757.3L1690.0,756.0L1694.0,755.8L1698.0,755.7L1702.0,757.3L1706.0,757.4L1710.0,756.2L1714.0,755.9L1718.0,757.1L1722.0,758.4L1726.0,758.0L1730.0,756.9L1734.0,757.7L1738.0,757.6L1742.0,756.6L1746.0,756.6L1750.0,756.7L1754.0,756.7L1758.0,756.7L1762.0,756.1L1766.0,756.0L1770.0,755.4L1774.0,756.8L1778.0,756.8L1782.0,756.6L1786.0,757.1L1790.0,756.9L1794.0,756.4L1798.0,757.0L1802.0,756.5L1806.0,756.3L1810.0,754.8L1814.0,755.9L1818.0,756.7L1822.0,756.5L1826.0,756.4L1830.0,756.1L1834.0,756.8L1838.0,758.2L1842.0,756.6L1846.0,757.6L1850.0,756.4L1854.0,757.4L1858.0,756.3L1862.0,756.9L1866.0,757.0L1870.0,757.0L1874.0,756.2L1878.0,757.0L1882.0,756.9L1886.0,757.6L1890.0,757.3L1894.0,757.2L1898.0,757.6L1902.0,756.3L1906.0,756.5L1910.0,756.7L1914.0,757.0L1918.0,756.7L1922.0,757.6L1922.9,756.4L1926.0,757.8L1928.8,718.7L1930.0,700.1L1931.3,680.5L1934.0,678.3L1934.7,678.2L1938.0,684.6L1938.7,684.9L1941.5,680.3L1942.0,686.4L1942.7,698.3L1944.1,730.9L1945.6,767.6L1946.0,775.7L1947.6,789.6L1950.0,795.7L1951.6,800.2L1954.0,803.0L1957.5,808.1L1958.0,809.6L1962.0,812.4L1964.4,815.3L1966.0,815.8L1970.0,816.9L1974.0,820.0L1974.3,821.6L1978.0,821.0L1982.0,824.3L1984.2,823.7L1986.0,823.5L1990.0,823.8L1994.0,823.0L1998.0,823.0L1999.1,823.9L2002.0,822.1L2006.0,821.8L2010.0,820.4L2010.9,821.0L2014.0,822.4L2018.0,820.3L2022.0,818.2L2026.0,817.2L2028.8,818.6L2030.0,818.8L2034.0,817.3L2038.0,818.0L2042.0,816.4L2043.6,815.9L2046.0,815.1L2050.0,814.2L2054.0,812.1L2058.0,811.0L2062.0,811.7L2063.4,810.4L2066.0,809.3L2070.0,809.7L2074.0,808.5L2078.0,808.6L2078.2,810.7L2082.0,809.7L2086.0,808.0L2090.0,807.2L2093.1,807.7L2094.0,806.8L2098.0,807.1L2102.0,806.6L2106.0,806.4L2110.0,805.5L2114.0,804.0L2118.0,804.3L2122.0,803.9L2126.0,803.6L2130.0,803.9L2132.0,802.3L2134.0,803.1L2138.0,802.9L2142.0,802.8L2146.0,803.6L2150.0,802.5L2154.0,804.1L2158.0,800.8L2162.0,803.3L2166.0,801.8L2170.0,800.7L2174.0,801.4L2178.0,801.2L2182.0,801.7L2186.0,801.9L2190.0,800.5L2194.0,801.0L2198.0,801.1L2198.7,801.1L2202.0,800.8L2206.0,802.0L2210.0,801.1L2214.0,799.8L2218.0,800.8L2222.0,800.3L2226.0,800.1L2230.0,800.8L2234.0,800.7L2238.0,800.6L2242.0,800.8L2246.0,801.2L2250.0,800.1L2254.0,800.4L2258.0,801.1L2262.0,799.7L2266.0,799.8L2270.0,799.8L2274.0,801.1L2278.0,800.0L2282.0,800.9L2286.0,799.5L2290.0,799.6L2294.0,799.5L2298.0,798.8L2302.0,798.5L2306.0,799.9L2310.0,799.1L2314.0,799.9L2318.0,800.1L2322.0,798.7L2326.0,800.6L2330.0,799.7L2334.0,799.2L2336.8,794.9L2338.0,780.2L2340.0,756.7L2342.0,761.4L2344.0,763.4L2346.0,760.0L2349.0,756.6L2350.0,762.9L2354.0,779.2L2358.0,800.5L2362.0,798.5L2366.0,798.3L2370.0,797.9L2374.0,797.9L2378.0,798.4L2382.0,798.6L2386.0,797.4L2388.6,798.0L2390.0,799.9L2394.0,804.7L2395.0,807.2L2396.0,688.5L2398.0,687.9L2400.0,688.2L2402.0,735.3L2404.6,798.7L2406.0,797.2L2410.0,798.5L2414.0,798.9L2418.0,799.3L2422.0,798.7L2426.0,798.7L2430.0,798.0L2434.0,797.1L2438.0,798.3L2442.0,797.6L2446.0,798.9L2450.0,799.2L2454.0,798.5L2458.0,798.1L2462.0,798.9L2466.0,798.3L2470.0,798.8L2474.0,799.1L2478.0,799.6L2482.0,799.2L2486.0,797.9L2490.0,798.6L2494.0,800.2L2498.0,798.2L2502.0,798.5L2506.0,799.7L2510.0,799.2L2514.0,798.4L2518.0,799.2L2522.0,798.6L2526.0,803.6L2527.0,803.8L2530.0,798.7L2534.0,792.0L2538.0,797.1" stroke="#a86d00" stroke-dasharray="4 2"/>
<path d="M1502.0,764.6L1506.0,763.6L1510.0,764.1L1514.0,763.5L1518.0,762.2L1522.0,763.9L1526.0,763.0L1530.0,763.5L1534.0,764.3L1538.0,763.1L1542.0,762.0L1546.0,762.1L1550.0,763.1L1554.0,761.3L1558.0,762.7L1562.0,763.0L1566.0,762.2L1570.0,763.2L1574.0,763.3L1578.0,762.3L1582.0,762.6L1586.0,763.5L1590.0,762.4L1594.0,762.8L1598.0,764.0L1602.0,763.2L1606.0,761.7L1610.0,762.3L1614.0,763.4L1618.0,761.0L1622.0,762.8L1626.0,762.8L1630.0,762.0L1634.0,762.5L1638.0,761.7L1642.0,763.4L1646.0,763.7L1650.0,762.1L1654.0,762.5L1658.0,762.6L1662.0,762.0L1666.0,762.5L1670.0,761.5L1674.0,762.6L1678.0,762.0L1682.0,762.2L1686.0,762.6L1690.0,763.0L1694.0,761.8L1698.0,763.2L1702.0,763.3L1706.0,762.8L1710.0,764.1L1714.0,762.8L1718.0,763.2L1722.0,764.1L1726.0,763.6L1730.0,765.1L1734.0,764.0L1738.0,764.6L1742.0,762.3L1746.0,762.3L1750.0,764.1L1754.0,762.7L1758.0,764.3L1762.0,762.9L1766.0,763.4L1770.0,763.8L1774.0,762.8L1778.0,762.1L1782.0,762.7L1786.0,764.0L1790.0,763.4L1794.0,763.8L1798.0,763.3L1802.0,763.3L1806.0,762.7L1810.0,762.0L1814.0,763.0L1818.0,763.0L1822.0,761.8L1826.0,763.5L1830.0,764.3L1834.0,765.1L1838.0,762.7L1842.0,763.6L1846.0,763.7L1850.0,763.7L1854.0,762.6L1858.0,763.4L1862.0,762.7L1866.0,762.9L1870.0,762.6L1874.0,763.5L1878.0,763.3L1882.0,764.1L1886.0,764.0L1890.0,764.6L1894.0,765.0L1898.0,763.5L1902.0,762.9L1906.0,763.3L1910.0,763.1L1914.0,762.4L1918.0,763.7L1922.0,763.3L1922.9,764.2L1926.0,762.9L1928.8,763.1L1930.0,765.3L1931.3,765.4L1934.0,763.9L1934.7,763.5L1938.0,770.1L1938.7,772.8L1941.5,767.3L1942.0,766.6L1942.7,764.9L1944.1,764.1L1945.6,780.3L1946.0,783.3L1947.6,795.3L1950.0,802.4L1951.6,805.8L1954.0,809.0L1957.5,812.8L1958.0,813.7L1962.0,819.1L1964.4,822.0L1966.0,821.3L1970.0,824.6L1974.0,826.7L1974.3,829.0L1978.0,827.2L1982.0,828.6L1984.2,828.9L1986.0,830.1L1990.0,830.2L1994.0,829.2L1998.0,830.4L1999.1,830.8L2002.0,828.6L2006.0,828.7L2010.0,827.4L2010.9,826.8L2014.0,826.3L2018.0,825.7L2022.0,824.3L2026.0,824.7L2028.8,825.1L2030.0,824.0L2034.0,823.7L2038.0,822.7L2042.0,822.7L2043.6,821.7L2046.0,821.5L2050.0,819.5L2054.0,817.7L2058.0,818.2L2062.0,816.9L2063.4,817.7L2066.0,817.0L2070.0,814.0L2074.0,813.8L2078.0,814.7L2078.2,814.3L2082.0,813.2L2086.0,814.2L2090.0,815.2L2093.1,814.4L2094.0,813.2L2098.0,813.5L2102.0,813.4L2106.0,812.1L2110.0,813.1L2114.0,810.8L2118.0,812.2L2122.0,811.3L2126.0,810.1L2130.0,809.5L2132.0,809.3L2134.0,808.9L2138.0,810.4L2142.0,810.6L2146.0,810.1L2150.0,809.5L2154.0,809.2L2158.0,808.2L2162.0,808.2L2166.0,807.3L2170.0,808.2L2174.0,807.0L2178.0,808.0L2182.0,806.9L2186.0,808.4L2190.0,808.5L2194.0,808.4L2198.0,808.0L2198.7,807.1L2202.0,807.2L2206.0,806.8L2210.0,807.5L2214.0,808.3L2218.0,806.2L2222.0,808.5L2226.0,806.3L2230.0,805.8L2234.0,806.9L2238.0,807.5L2242.0,806.6L2246.0,806.3L2250.0,808.1L2254.0,805.9L2258.0,807.2L2262.0,806.6L2266.0,806.2L2270.0,806.7L2274.0,805.9L2278.0,805.9L2282.0,806.7L2286.0,805.5L2290.0,805.3L2294.0,806.7L2298.0,806.8L2302.0,806.4L2306.0,806.3L2310.0,805.6L2314.0,806.0L2318.0,805.5L2322.0,804.1L2326.0,806.2L2330.0,806.1L2334.0,806.4L2336.8,804.7L2338.0,797.8L2340.0,782.5L2342.0,785.5L2344.0,789.7L2346.0,787.8L2349.0,783.2L2350.0,788.1L2354.0,804.9L2358.0,805.8L2362.0,806.1L2366.0,804.6L2370.0,805.4L2374.0,804.0L2378.0,805.0L2382.0,803.8L2386.0,808.2L2388.6,815.9L2390.0,821.1L2394.0,829.7L2395.0,821.0L2396.0,693.9L2398.0,693.3L2400.0,694.4L2402.0,741.9L2404.6,805.9L2406.0,805.2L2410.0,805.3L2414.0,804.2L2418.0,803.8L2422.0,804.7L2426.0,806.5L2430.0,804.5L2434.0,806.0L2438.0,806.2L2442.0,805.0L2446.0,805.5L2450.0,806.8L2454.0,805.8L2458.0,805.6L2462.0,805.2L2466.0,805.3L2470.0,805.0L2474.0,805.8L2478.0,805.2L2482.0,805.9L2486.0,805.0L2490.0,806.9L2494.0,805.1L2498.0,805.2L2502.0,804.7L2506.0,804.1L2510.0,804.7L2514.0,805.5L2518.0,804.8L2522.0,806.1L2526.0,808.3L2527.0,809.2L2530.0,805.3L2534.0,798.6L2538.0,804.2" stroke="#a86d00" stroke-dasharray="4 2"/>
<path d="M1502.0,761.1L1506.0,760.8L1510.0,760.5L1514.0,760.2L1518.0,760.1L1522.0,760.0L1526.0,759.9L1530.0,759.9L1534.0,759.8L1538.0,759.7L1542.0,759.5L1546.0,759.3L1550.0,759.2L1554.0,759.2L1558.0,759.3L1562.0,759.6L1566.0,759.8L1570.0,759.8L1574.0,759.7L1578.0,759.7L1582.0,759.7L1586.0,759.9L1590.0,760.1L1594.0,760.2L1598.0,760.2L1602.0,759.9L1606.0,759.5L1610.0,759.1L1614.0,758.9L1618.0,758.9L1622.0,759.0L1626.0,759.1L1630.0,759.0L1634.0,758.9L1638.0,758.9L1642.0,759.1L1646.0,759.3L1650.0,759.5L1654.0,759.5L1658.0,759.3L1662.0,759.2L1666.0,759.1L1670.0,759.0L1674.0,759.0L1678.0,759.0L1682.0,759.0L1686.0,759.1L1690.0,759.2L1694.0,759.3L1698.0,759.4L1702.0,759.5L1706.0,759.7L1710.0,759.8L1714.0,760.1L1718.0,760.4L1722.0,760.7L1726.0,760.9L1730.0,760.9L1734.0,760.7L1738.0,760.2L1742.0,759.8L1746.0,759.7L1750.0,759.9L1754.0,760.2L1758.0,760.4L1762.0,760.3L1766.0,760.0L1770.0,759.8L1774.0,759.7L1778.0,759.7L1782.0,759.8L1786.0,760.0L1790.0,760.1L1794.0,760.1L1798.0,760.1L1802.0,759.9L1806.0,759.7L1810.0,759.5L1814.0,759.4L1818.0,759.6L1822.0,760.0L1826.0,760.3L1830.0,760.5L1834.0,760.5L1838.0,760.5L1842.0,760.3L1846.0,760.1L1850.0,759.9L1854.0,759.9L1858.0,759.9L1862.0,759.8L1866.0,759.8L1870.0,759.8L1874.0,760.0L1878.0,760.4L1882.0,760.7L1886.0,760.9L1890.0,760.8L1894.0,760.6L1898.0,760.4L1902.0,760.2L1906.0,760.2L1910.0,760.3L1914.0,760.4L1918.0,760.4L1922.0,760.4L1922.9,760.4L1926.0,759.8L1928.8,759.2L1930.0,742.5L1931.3,724.4L1934.0,721.8L1934.7,721.3L1938.0,726.5L1938.7,728.1L1941.5,722.5L1942.0,730.1L1942.7,740.5L1944.1,759.9L1945.6,777.3L1946.0,780.2L1947.6,792.7L1950.0,799.0L1951.6,803.2L1954.0,806.3L1957.5,811.0L1958.0,811.7L1962.0,815.8L1964.4,818.3L1966.0,819.3L1970.0,821.3L1974.0,823.4L1974.3,823.7L1978.0,824.7L1982.0,825.8L1984.2,826.4L1986.0,826.4L1990.0,826.3L1994.0,826.2L1998.0,826.1L1999.1,826.1L2002.0,825.7L2006.0,825.1L2010.0,824.4L2010.9,824.1L2014.0,823.4L2018.0,822.6L2022.0,822.0L2026.0,821.5L2028.8,821.4L2030.0,821.5L2034.0,820.9L2038.0,820.2L2042.0,819.2L2043.6,818.6L2046.0,817.7L2050.0,816.6L2054.0,815.5L2058.0,814.7L2062.0,813.9L2063.4,813.7L2066.0,813.3L2070.0,812.6L2074.0,812.0L2078.0,811.5L2078.2,811.6L2082.0,811.5L2086.0,811.4L2090.0,811.1L2093.1,810.8L2094.0,810.6L2098.0,810.1L2102.0,809.5L2106.0,809.1L2110.0,808.7L2114.0,808.1L2118.0,807.5L2122.0,807.0L2126.0,806.5L2130.0,806.1L2132.0,806.1L2134.0,806.3L2138.0,806.5L2142.0,806.5L2146.0,806.3L2150.0,806.1L2154.0,805.9L2158.0,805.7L2162.0,805.4L2166.0,805.1L2170.0,804.7L2174.0,804.4L2178.0,804.2L2182.0,804.2L2186.0,804.2L2190.0,804.2L2194.0,804.1L2198.0,804.0L2198.7,804.1L2202.0,804.2L2206.0,804.2L2210.0,804.1L2214.0,803.9L2218.0,803.8L2222.0,803.6L2226.0,803.5L2230.0,803.4L2234.0,803.4L2238.0,803.5L2242.0,803.7L2246.0,803.8L2250.0,803.7L2254.0,803.5L2258.0,803.3L2262.0,803.3L2266.0,803.3L2270.0,803.4L2274.0,803.5L2278.0,803.5L2282.0,803.3L2286.0,803.0L2290.0,802.7L2294.0,802.5L2298.0,802.4L2302.0,802.4L2306.0,802.5L2310.0,802.6L2314.0,802.7L2318.0,802.8L2322.0,802.9L2326.0,802.9L2330.0,802.8L2334.0,802.6L2336.8,802.3L2338.0,793.8L2340.0,779.7L2342.0,783.1L2344.0,786.6L2346.0,784.0L2349.0,780.0L2350.0,784.6L2354.0,802.3L2358.0,802.3L2362.0,802.2L2366.0,802.0L2370.0,801.9L2374.0,801.7L2378.0,801.6L2382.0,801.7L2386.0,801.8L2388.6,802.0L2390.0,803.7L2394.0,808.2L2395.0,809.5L2396.0,690.6L2398.0,690.8L2400.0,690.8L2402.0,739.1L2404.6,801.7L2406.0,801.7L2410.0,801.8L2414.0,801.9L2418.0,802.0L2422.0,802.1L2426.0,802.0L2430.0,802.0L2434.0,802.0L2438.0,802.1L2442.0,802.2L2446.0,802.5L2450.0,802.7L2454.0,802.8L2458.0,802.7L2462.0,802.4L2466.0,802.0L2470.0,801.8L2474.0,801.8L2478.0,801.8L2482.0,801.8L2486.0,801.8L2490.0,801.9L2494.0,802.0L2498.0,802.1L2502.0,802.1L2506.0,802.1L2510.0,802.1L2514.0,802.2L2518.0,802.3L2522.0,802.3L2526.0,806.2L2527.0,807.1L2530.0,801.9L2534.0,795.1L2538.0,801.7" stroke="#ffa500"/>
</g>
<g clip-path="url(#c5)" fill="none" shape-rendering="crispEdges">
<path d="M1499.0,975.2L1503.0,974.2L1507.0,975.8L1511.0,975.9L1515.0,973.5L1519.0,973.9L1523.0,974.9L1527.0,974.5L1531.0,974.8L1535.0,974.3L1539.0,975.8L1543.0,975.8L1547.0,975.2L1551.0,976.0L1555.0,975.5L1559.0,974.5L1563.0,975.5L1567.0,974.4L1571.0,975.8L1575.0,974.9L1579.0,974.9L1583.0,974.6L1587.0,976.1L1591.0,974.9L1595.0,974.3L1599.0,974.0L1603.0,974.6L1607.0,974.6L1611.0,974.9L1615.0,975.3L1619.0,976.8L1623.0,974.8L1627.0,974.6L1631.0,974.3L1635.0,975.5L1639.0,975.9L1643.0,974.9L1647.0,974.1L1651.0,973.8L1655.0,974.7L1659.0,974.6L1663.0,974.3L1667.0,973.3L1671.0,974.0L1675.0,974.1L1679.0,974.5L1683.0,975.3L1687.0,975.0L1691.0,975.4L1695.0,975.1L1699.0,975.4L1703.0,975.8L1707.0,974.4L1711.0,975.5L1715.0,975.4L1719.0,975.1L1723.0,975.0L1727.0,976.1L1731.0,974.1L1735.0,975.5L1739.0,973.6L1743.0,975.0L1747.0,975.6L1751.0,975.9L1755.0,975.7L1759.0,975.4L1763.0,974.1L1767.0,973.8L1771.0,974.7L1775.0,973.9L1779.0,973.0L1783.0,973.2L1787.0,973.4L1791.0,974.6L1795.0,974.5L1799.0,975.1L1803.0,974.3L1807.0,974.6L1811.0,974.8L1815.0,974.1L1819.0,974.8L1823.0,973.9L1827.0,974.0L1831.0,973.8L1835.0,973.0L1839.0,974.1L1843.0,973.2L1847.0,973.5L1851.0,974.0L1855.0,974.1L1859.0,974.6L1863.0,974.4L1867.0,974.4L1871.0,974.8L1875.0,973.5L1879.0,973.7L1883.0,973.8L1887.0,974.2L1891.0,975.4L1895.0,974.4L1899.0,974.9L1903.0,976.2L1907.0,974.9L1911.0,975.9L1915.0,974.6L1919.0,975.3L1923.0,974.5L1926.5,974.8L1927.0,974.5L1931.0,963.7L1933.0,961.0L1935.0,964.5L1936.0,965.6L1939.0,959.6L1939.8,959.4L1943.0,963.5L1947.0,970.0L1951.0,975.6L1951.7,977.9L1955.0,977.2L1959.0,977.5L1962.3,979.4L1963.0,979.3L1967.0,979.4L1971.0,978.1L1975.0,976.8L1979.0,976.7L1983.0,973.6L1987.0,972.8L1991.0,971.4L1995.0,970.5L1999.0,968.6L1999.5,970.1L2003.0,968.2L2007.0,965.8L2011.0,964.7L2015.0,964.2L2019.0,963.1L2023.0,962.6L2027.0,961.8L2031.0,958.4L2034.0,956.1L2035.0,955.1L2039.0,956.6L2043.0,955.3L2047.0,955.2L2051.0,954.6L2055.0,954.4L2059.0,954.9L2063.0,953.7L2067.0,952.9L2071.0,951.6L2075.0,950.4L2079.0,950.7L2079.2,950.8L2083.0,951.8L2087.0,950.0L2091.0,950.2L2095.0,948.7L2099.0,947.8L2103.0,947.8L2107.0,947.9L2111.0,950.2L2115.0,947.8L2119.0,948.9L2123.0,947.3L2127.0,948.5L2131.0,947.8L2135.0,947.2L2139.0,947.2L2143.0,946.5L2145.6,947.5L2147.0,947.0L2151.0,946.6L2155.0,946.7L2159.0,947.9L2163.0,949.0L2167.0,947.9L2171.0,947.6L2175.0,947.8L2179.0,948.4L2183.0,947.5L2187.0,947.1L2191.0,948.3L2195.0,947.6L2199.0,948.2L2203.0,946.8L2207.0,945.6L2211.0,945.5L2215.0,948.1L2219.0,948.3L2223.0,946.7L2227.0,946.3L2231.0,947.5L2235.0,945.2L2239.0,945.2L2243.0,946.5L2247.0,945.8L2251.0,946.2L2255.0,946.2L2259.0,946.8L2263.0,947.8L2267.0,946.8L2271.0,947.0L2275.0,944.6L2279.0,945.8L2283.0,944.9L2287.0,944.3L2291.0,944.3L2295.0,944.7L2299.0,945.9L2303.0,944.5L2307.0,946.0L2311.0,945.8L2315.0,946.0L2319.0,946.8L2323.0,946.0L2327.0,946.4L2331.0,945.1L2335.0,944.8L2336.8,945.4L2339.0,948.2L2340.0,949.2L2343.0,948.0L2347.0,948.9L2351.0,949.0L2352.0,950.9L2355.0,947.3L2359.0,945.1L2363.0,945.3L2367.0,944.1L2371.0,944.7L2375.0,945.5L2379.0,946.4L2383.0,945.2L2387.0,943.5L2388.6,939.3L2391.0,932.8L2393.0,925.2L2395.0,937.8L2397.5,1008.5L2399.0,1036.1L2401.0,1027.8L2403.0,1008.9L2404.0,994.2L2407.0,958.8L2411.0,946.1L2415.0,948.5L2419.0,949.2L2423.0,945.7L2427.0,946.0L2431.0,946.3L2435.0,947.3L2439.0,945.1L2443.0,945.7L2447.0,946.7L2451.0,946.5L2455.0,945.9L2459.0,946.1L2463.0,945.0L2467.0,945.5L2471.0,945.1L2475.0,945.1L2479.0,944.2L2483.0,945.1L2487.0,945.8L2491.0,945.4L2495.0,945.7L2499.0,945.4L2503.0,945.4L2507.0,944.8L2511.0,945.6L2515.0,945.4L2519.0,947.4L2523.0,947.3L2525.0,946.7L2527.0,947.3L2530.0,949.1L2531.0,950.2L2535.0,946.5L2538.0,944.4L2539.0,942.4" stroke="#a86d00" stroke-dasharray="4 2"/>
<path d="M1499.0,982.1L1503.0,982.6L1507.0,981.7L1511.0,981.5L1515.0,980.5L1519.0,982.7L1523.0,981.8L1527.0,981.9L1531.0,981.2L1535.0,982.9L1539.0,982.8L1543.0,982.0L1547.0,981.7L1551.0,981.8L1555.0,981.5L1559.0,982.2L1563.0,981.7L1567.0,982.6L1571.0,981.8L1575.0,981.7L1579.0,983.2L1583.0,981.5L1587.0,980.9L1591.0,982.3L1595.0,980.0L1599.0,981.5L1603.0,982.0L1607.0,981.3L1611.0,981.6L1615.0,980.3L1619.0,982.6L1623.0,982.4L1627.0,981.1L1631.0,983.5L1635.0,981.0L1639.0,980.7L1643.0,980.5L1647.0,981.8L1651.0,981.7L1655.0,981.5L1659.0,980.7L1663.0,980.2L1667.0,981.5L1671.0,980.1L1675.0,980.0L1679.0,982.4L1683.0,981.7L1687.0,982.2L1691.0,982.4L1695.0,981.5L1699.0,981.7L1703.0,982.8L1707.0,982.1L1711.0,983.0L1715.0,982.7L1719.0,981.6L1723.0,983.0L1727.0,980.9L1731.0,981.9L1735.0,981.8L1739.0,983.0L1743.0,981.4L1747.0,982.0L1751.0,982.3L1755.0,982.3L1759.0,982.5L1763.0,981.6L1767.0,981.2L1771.0,981.9L1775.0,982.7L1779.0,980.0L1783.0,981.1L1787.0,981.7L1791.0,981.3L1795.0,982.6L1799.0,981.3L1803.0,980.8L1807.0,982.2L1811.0,979.1L1815.0,981.0L1819.0,983.3L1823.0,981.4L1827.0,981.6L1831.0,980.4L1835.0,980.9L1839.0,980.6L1843.0,982.1L1847.0,979.7L1851.0,978.4L1855.0,981.1L1859.0,982.4L1863.0,980.9L1867.0,980.3L1871.0,981.0L1875.0,982.2L1879.0,981.4L1883.0,981.9L1887.0,980.1L1891.0,981.7L1895.0,982.8L1899.0,982.0L1903.0,981.3L1907.0,983.0L1911.0,983.1L1915.0,982.0L1919.0,981.8L1923.0,983.3L1926.5,981.7L1927.0,980.7L1931.0,973.5L1933.0,967.9L1935.0,970.9L1936.0,971.5L1939.0,967.8L1939.8,966.2L1943.0,970.5L1947.0,977.5L1951.0,981.5L1951.7,982.3L1955.0,983.7L1959.0,985.3L1962.3,985.0L1963.0,985.2L1967.0,984.6L1971.0,984.4L1975.0,982.9L1979.0,983.3L1983.0,979.7L1987.0,980.6L1991.0,978.5L1995.0,978.1L1999.0,978.2L1999.5,976.5L2003.0,975.5L2007.0,974.6L2011.0,971.3L2015.0,971.4L2019.0,970.0L2023.0,967.8L2027.0,967.0L2031.0,965.1L2034.0,963.2L2035.0,962.7L2039.0,964.1L2043.0,964.3L2047.0,961.9L2051.0,962.3L2055.0,960.5L2059.0,960.6L2063.0,960.1L2067.0,959.0L2071.0,959.3L2075.0,959.5L2079.0,958.4L2079.2,957.3L2083.0,958.4L2087.0,957.0L2091.0,957.8L2095.0,954.9L2099.0,958.1L2103.0,955.4L2107.0,954.5L2111.0,954.6L2115.0,956.1L2119.0,955.9L2123.0,955.6L2127.0,955.2L2131.0,953.6L2135.0,954.2L2139.0,952.3L2143.0,953.3L2145.6,954.6L2147.0,952.8L2151.0,956.4L2155.0,955.7L2159.0,953.8L2163.0,955.3L2167.0,955.2L2171.0,954.5L2175.0,955.0L2179.0,954.1L2183.0,954.3L2187.0,954.8L2191.0,954.8L2195.0,954.5L2199.0,954.2L2203.0,954.4L2207.0,954.2L2211.0,952.7L2215.0,953.2L2219.0,955.1L2223.0,955.1L2227.0,954.1L2231.0,953.1L2235.0,953.7L2239.0,953.5L2243.0,951.7L2247.0,953.1L2251.0,952.1L2255.0,953.0L2259.0,953.6L2263.0,955.1L2267.0,952.0L2271.0,953.2L2275.0,953.8L2279.0,953.4L2283.0,953.2L2287.0,951.4L2291.0,951.9L2295.0,951.6L2299.0,953.2L2303.0,952.4L2307.0,953.0L2311.0,953.4L2315.0,952.2L2319.0,953.4L2323.0,951.7L2327.0,952.5L2331.0,951.6L2335.0,953.3L2336.8,952.6L2339.0,956.5L2340.0,954.2L2343.0,961.8L2347.0,961.3L2351.0,956.0L2352.0,957.7L2355.0,951.7L2359.0,952.9L2363.0,953.6L2367.0,952.8L2371.0,951.8L2375.0,952.7L2379.0,952.1L2383.0,952.5L2387.0,952.5L2388.6,954.1L2391.0,950.2L2393.0,949.0L2395.0,971.2L2397.5,1039.5L2399.0,1062.8L2401.0,1034.2L2403.0,999.4L2404.0,983.9L2407.0,957.9L2411.0,953.5L2415.0,953.5L2419.0,954.0L2423.0,953.6L2427.0,953.2L2431.0,954.4L2435.0,953.3L2439.0,953.2L2443.0,953.8L2447.0,954.6L2451.0,954.3L2455.0,952.4L2459.0,953.6L2463.0,953.7L2467.0,953.5L2471.0,952.2L2475.0,951.9L2479.0,951.0L2483.0,951.4L2487.0,951.0L2491.0,953.3L2495.0,952.0L2499.0,951.7L2503.0,952.6L2507.0,952.4L2511.0,951.8L2515.0,952.8L2519.0,952.2L2523.0,953.4L2525.0,953.3L2527.0,955.1L2530.0,956.7L2531.0,955.7L2535.0,953.5L2538.0,949.7L2539.0,951.9" stroke="#a86d00" stroke-dasharray="4 2"/>
<path d="M1499.0,978.4L1503.0,978.6L1507.0,978.7L1511.0,978.7L1515.0,978.6L1519.0,978.4L1523.0,978.3L1527.0,978.3L1531.0,978.3L1535.0,978.5L1539.0,978.6L1543.0,978.6L1547.0,978.6L1551.0,978.6L1555.0,978.6L1559.0,978.7L1563.0,978.7L1567.0,978.6L1571.0,978.5L1575.0,978.5L1579.0,978.5L1583.0,978.6L1587.0,978.6L1591.0,978.5L1595.0,978.2L1599.0,977.8L1603.0,977.7L1607.0,977.8L1611.0,978.1L1615.0,978.4L1619.0,978.6L1623.0,978.6L1627.0,978.5L1631.0,978.5L1635.0,978.5L1639.0,978.5L1643.0,978.5L1647.0,978.3L1651.0,978.0L1655.0,977.7L1659.0,977.5L1663.0,977.4L1667.0,977.3L1671.0,977.3L1675.0,977.5L1679.0,977.8L1683.0,978.1L1687.0,978.3L1691.0,978.4L1695.0,978.5L1699.0,978.6L1703.0,978.8L1707.0,979.1L1711.0,979.3L1715.0,979.3L1719.0,979.1L1723.0,978.8L1727.0,978.4L1731.0,978.3L1735.0,978.3L1739.0,978.5L1743.0,978.8L1747.0,978.9L1751.0,978.9L1755.0,978.7L1759.0,978.3L1763.0,977.9L1767.0,977.6L1771.0,977.6L1775.0,977.6L1779.0,977.6L1783.0,977.6L1787.0,977.6L1791.0,977.7L1795.0,977.9L1799.0,978.1L1803.0,978.1L1807.0,978.0L1811.0,977.8L1815.0,977.8L1819.0,977.9L1823.0,977.9L1827.0,977.8L1831.0,977.6L1835.0,977.4L1839.0,977.2L1843.0,977.1L1847.0,977.0L1851.0,977.1L1855.0,977.3L1859.0,977.6L1863.0,978.0L1867.0,978.2L1871.0,978.3L1875.0,978.3L1879.0,978.4L1883.0,978.4L1887.0,978.5L1891.0,978.6L1895.0,978.7L1899.0,978.7L1903.0,978.6L1907.0,978.7L1911.0,978.8L1915.0,978.9L1919.0,978.9L1923.0,978.8L1926.5,978.6L1927.0,977.3L1931.0,968.6L1933.0,964.2L1935.0,967.8L1936.0,969.5L1939.0,964.2L1939.8,962.8L1943.0,967.5L1947.0,973.3L1951.0,979.1L1951.7,980.1L1955.0,980.9L1959.0,981.9L1962.3,982.7L1963.0,982.6L1967.0,981.8L1971.0,980.9L1975.0,980.0L1979.0,979.1L1983.0,978.0L1987.0,976.8L1991.0,975.6L1995.0,974.3L1999.0,973.2L1999.5,973.1L2003.0,971.9L2007.0,970.5L2011.0,969.0L2015.0,967.4L2019.0,965.9L2023.0,964.5L2027.0,963.0L2031.0,961.5L2034.0,960.4L2035.0,960.3L2039.0,959.9L2043.0,959.5L2047.0,959.1L2051.0,958.6L2055.0,958.0L2059.0,957.5L2063.0,957.0L2067.0,956.5L2071.0,955.9L2075.0,955.3L2079.0,954.5L2079.2,954.3L2083.0,953.8L2087.0,953.4L2091.0,952.9L2095.0,952.6L2099.0,952.3L2103.0,952.1L2107.0,952.0L2111.0,952.0L2115.0,951.9L2119.0,951.8L2123.0,951.5L2127.0,951.3L2131.0,951.0L2135.0,950.8L2139.0,950.7L2143.0,950.6L2145.6,950.6L2147.0,950.8L2151.0,951.1L2155.0,951.2L2159.0,951.3L2163.0,951.3L2167.0,951.3L2171.0,951.2L2175.0,951.0L2179.0,950.9L2183.0,950.9L2187.0,950.9L2191.0,950.9L2195.0,950.8L2199.0,950.4L2203.0,950.2L2207.0,950.0L2211.0,950.1L2215.0,950.3L2219.0,950.4L2223.0,950.4L2227.0,950.1L2231.0,949.8L2235.0,949.5L2239.0,949.4L2243.0,949.5L2247.0,949.6L2251.0,949.7L2255.0,949.8L2259.0,950.0L2263.0,950.2L2267.0,950.2L2271.0,950.0L2275.0,949.7L2279.0,949.4L2283.0,949.0L2287.0,948.7L2291.0,948.5L2295.0,948.5L2299.0,948.7L2303.0,949.1L2307.0,949.4L2311.0,949.7L2315.0,949.7L2319.0,949.5L2323.0,949.1L2327.0,948.8L2331.0,948.7L2335.0,948.8L2336.8,949.1L2339.0,951.5L2340.0,952.5L2343.0,952.4L2347.0,952.3L2351.0,952.3L2352.0,952.4L2355.0,949.3L2359.0,949.3L2363.0,949.1L2367.0,948.8L2371.0,948.7L2375.0,948.7L2379.0,949.0L2383.0,949.3L2387.0,949.5L2388.6,949.7L2391.0,946.4L2393.0,943.5L2395.0,950.3L2397.5,1010.2L2399.0,1029.7L2401.0,1015.3L2403.0,988.6L2404.0,975.3L2407.0,955.3L2411.0,950.4L2415.0,950.5L2419.0,950.4L2423.0,950.1L2427.0,949.8L2431.0,949.5L2435.0,949.4L2439.0,949.4L2443.0,949.4L2447.0,949.6L2451.0,949.7L2455.0,949.7L2459.0,949.7L2463.0,949.6L2467.0,949.2L2471.0,948.8L2475.0,948.4L2479.0,948.2L2483.0,948.2L2487.0,948.5L2491.0,948.7L2495.0,948.9L2499.0,948.9L2503.0,948.9L2507.0,948.8L2511.0,948.9L2515.0,949.0L2519.0,949.2L2523.0,949.5L2525.0,949.9L2527.0,951.4L2530.0,953.5L2531.0,952.7L2535.0,949.8L2538.0,947.5L2539.0,947.3" stroke="#ffa500"/>
</g>
<g clip-path="url(#c6)" fill="none" shape-rendering="crispEdges">
<path d="M1506.0,1237.5L1510.0,1239.0L1514.0,1238.6L1518.0,1238.5L1522.0,1239.0L1526.0,1239.5L1530.0,1238.7L1534.0,1238.6L1538.0,1236.6L1542.0,1238.9L1546.0,1237.6L1550.0,1239.5L1554.0,1240.1L1558.0,1236.3L1562.0,1240.6L1566.0,1238.0L1570.0,1237.5L1574.0,1238.6L1578.0,1239.2L1582.0,1240.0L1586.0,1242.4L1590.0,1236.3L1594.0,1237.8L1598.0,1238.9L1602.0,1237.8L1606.0,1236.3L1610.0,1238.5L1614.0,1238.9L1618.0,1239.6L1622.0,1238.4L1626.0,1240.7L1630.0,1239.0L1634.0,1239.8L1638.0,1237.3L1642.0,1235.3L1646.0,1240.0L1650.0,1239.5L1654.0,1240.2L1658.0,1239.5L1662.0,1239.0L1666.0,1239.2L1670.0,1241.0L1674.0,1238.6L1678.0,1239.1L1682.0,1239.3L1686.0,1239.6L1690.0,1242.0L1694.0,1238.0L1698.0,1242.1L1702.0,1238.8L1706.0,1238.7L1710.0,1238.2L1714.0,1240.2L1718.0,1241.4L1722.0,1238.1L1726.0,1239.6L1730.0,1239.9L1734.0,1240.0L1738.0,1239.6L1742.0,1241.5L1746.0,1241.8L1750.0,1240.9L1754.0,1239.5L1758.0,1240.3L1762.0,1241.2L1766.0,1240.5L1770.0,1241.3L1774.0,1239.6L1778.0,1240.9L1782.0,1240.8L1786.0,1239.2L1790.0,1240.2L1794.0,1239.8L1798.0,1241.2L1800.0,1240.7L1802.0,1240.8L1806.0,1240.4L1810.0,1239.5L1814.0,1241.0L1818.0,1238.8L1822.0,1240.4L1826.0,1237.2L1830.0,1239.0L1834.0,1241.4L1838.0,1240.2L1842.0,1241.3L1846.0,1240.0L1850.0,1239.5L1854.0,1240.3L1858.0,1241.8L1862.0,1241.3L1866.0,1244.3L1870.0,1244.5L1874.0,1243.2L1878.0,1240.9L1882.0,1242.4L1886.0,1241.8L1890.0,1241.7L1894.0,1241.9L1898.0,1242.2L1902.0,1241.6L1906.0,1241.8L1910.0,1239.3L1914.0,1241.0L1918.0,1242.7L1922.0,1242.5L1926.0,1239.9L1930.0,1242.0L1930.5,1241.7L1933.9,1243.0L1934.0,1243.8L1935.9,1222.1L1938.0,1224.6L1940.3,1230.6L1942.0,1221.8L1943.7,1217.4L1946.0,1222.3L1950.0,1230.2L1952.0,1232.8L1954.0,1236.9L1958.0,1241.8L1958.8,1245.7L1962.0,1245.7L1966.0,1245.6L1966.6,1247.5L1970.0,1244.0L1973.5,1245.3L1974.0,1246.6L1978.0,1239.5L1980.3,1242.5L1982.0,1242.5L1983.2,1241.7L1986.0,1242.4L1990.0,1237.2L1993.0,1238.2L1994.0,1236.2L1998.0,1235.6L2002.0,1230.5L2006.0,1231.1L2010.0,1229.8L2014.0,1225.7L2018.0,1227.8L2020.3,1223.1L2022.0,1227.0L2026.0,1225.2L2030.0,1219.7L2034.0,1221.5L2038.0,1218.2L2040.9,1217.4L2042.0,1217.5L2046.0,1213.9L2050.0,1215.6L2054.0,1214.3L2058.0,1214.3L2058.4,1210.0L2062.0,1212.2L2066.0,1212.8L2070.0,1209.8L2074.0,1211.1L2078.0,1210.6L2079.9,1209.2L2082.0,1209.9L2086.0,1210.4L2090.0,1206.8L2094.0,1209.5L2098.0,1207.7L2101.4,1207.7L2102.0,1206.8L2106.0,1206.1L2110.0,1207.3L2114.0,1206.3L2118.0,1204.7L2122.0,1202.3L2126.0,1204.7L2127.8,1204.8L2130.0,1207.0L2134.0,1203.1L2138.0,1204.2L2142.0,1203.4L2146.0,1200.0L2150.0,1202.7L2154.0,1204.3L2158.0,1202.8L2160.0,1206.2L2162.0,1204.8L2166.0,1203.7L2170.0,1205.7L2174.0,1203.7L2178.0,1205.6L2182.0,1204.4L2186.0,1204.6L2190.0,1203.0L2194.0,1203.9L2198.0,1204.3L2202.0,1204.0L2206.0,1204.7L2210.0,1206.4L2214.0,1203.8L2218.0,1203.2L2222.0,1205.3L2226.0,1203.6L2230.0,1206.4L2234.0,1203.7L2238.0,1203.4L2242.0,1205.2L2246.0,1203.5L2250.0,1204.7L2254.0,1206.8L2258.0,1203.4L2262.0,1206.2L2266.0,1205.0L2270.0,1205.3L2274.0,1206.5L2278.0,1205.5L2282.0,1205.8L2286.0,1204.1L2290.0,1206.7L2294.0,1205.3L2298.0,1202.0L2302.0,1206.5L2306.0,1203.0L2310.0,1206.5L2314.0,1203.5L2318.0,1205.4L2322.0,1206.1L2326.0,1204.2L2330.0,1205.2L2334.0,1205.7L2336.0,1202.6L2338.0,1210.9L2342.0,1214.1L2346.0,1208.3L2350.0,1214.4L2354.0,1206.5L2358.0,1205.5L2362.0,1204.0L2366.0,1207.1L2370.0,1202.8L2374.0,1207.3L2378.0,1203.6L2382.0,1207.5L2386.0,1206.7L2388.0,1200.1L2390.0,1184.4L2394.0,1164.9L2395.3,1166.2L2397.0,1285.5L2398.0,1285.1L2402.0,1285.9L2403.0,1283.5L2406.0,1226.1L2409.0,1210.4L2410.0,1207.5L2414.0,1204.7L2418.0,1206.9L2422.0,1208.0L2426.0,1205.3L2430.0,1204.5L2434.0,1207.4L2438.0,1202.6L2442.0,1206.5L2446.0,1203.0L2450.0,1206.3L2454.0,1205.8L2458.0,1206.7L2462.0,1206.1L2466.0,1205.0L2470.0,1205.0L2474.0,1204.5L2478.0,1206.7L2482.0,1203.9L2486.0,1206.8L2490.0,1204.9L2494.0,1203.4L2498.0,1206.7L2502.0,1202.9L2506.0,1202.8L2510.0,1204.4L2514.0,1204.9L2518.0,1206.4L2522.0,1206.5L2525.0,1204.2L2526.0,1205.3L2530.0,1207.2L2534.0,1200.5L2538.0,1197.9" stroke="#a86d00" stroke-dasharray="4 2"/>
<path d="M1506.0,1249.8L1510.0,1248.6L1514.0,1250.9L1518.0,1248.3L1522.0,1248.0L1526.0,1250.3L1530.0,1251.3L1534.0,1251.1L1538.0,1251.1L1542.0,1249.7L1546.0,1248.6L1550.0,1249.9L1554.0,1250.1L1558.0,1249.7L1562.0,1248.8L1566.0,1249.7L1570.0,1250.4L1574.0,1248.3L1578.0,1249.2L1582.0,1247.9L1586.0,1251.9L1590.0,1250.4L1594.0,1249.1L1598.0,1250.7L1602.0,1249.8L1606.0,1248.9L1610.0,1249.9L1614.0,1249.8L1618.0,1255.1L1622.0,1248.5L1626.0,1245.9L1630.0,1250.8L1634.0,1247.8L1638.0,1247.8L1642.0,1251.7L1646.0,1248.7L1650.0,1248.2L1654.0,1250.2L1658.0,1248.5L1662.0,1251.5L1666.0,1249.4L1670.0,1250.7L1674.0,1252.7L1678.0,1253.4L1682.0,1247.2L1686.0,1249.4L1690.0,1249.3L1694.0,1250.9L1698.0,1249.0L1702.0,1248.2L1706.0,1251.8L1710.0,1251.7L1714.0,1250.1L1718.0,1247.1L1722.0,1250.1L1726.0,1248.8L1730.0,1254.2L1734.0,1252.4L1738.0,1252.5L1742.0,1253.2L1746.0,1252.8L1750.0,1249.7L1754.0,1252.1L1758.0,1251.4L1762.0,1247.1L1766.0,1252.5L1770.0,1251.5L1774.0,1250.7L1778.0,1251.5L1782.0,1249.6L1786.0,1252.5L1790.0,1250.8L1794.0,1249.9L1798.0,1254.9L1800.0,1253.0L1802.0,1251.7L1806.0,1251.8L1810.0,1252.1L1814.0,1253.4L1818.0,1252.4L1822.0,1253.4L1826.0,1250.5L1830.0,1250.3L1834.0,1251.8L1838.0,1252.2L1842.0,1251.8L1846.0,1251.1L1850.0,1252.2L1854.0,1254.1L1858.0,1254.0L1862.0,1251.2L1866.0,1254.1L1870.0,1253.6L1874.0,1253.5L1878.0,1254.4L1882.0,1253.7L1886.0,1255.9L1890.0,1252.8L1894.0,1252.0L1898.0,1253.6L1902.0,1253.7L1906.0,1251.4L1910.0,1253.6L1914.0,1253.2L1918.0,1251.1L1922.0,1252.3L1926.0,1254.3L1930.0,1254.1L1930.5,1251.1L1933.9,1256.9L1934.0,1254.8L1935.9,1235.5L1938.0,1235.4L1940.3,1240.2L1942.0,1231.4L1943.7,1229.7L1946.0,1232.6L1950.0,1239.8L1952.0,1243.8L1954.0,1247.0L1958.0,1251.6L1958.8,1254.3L1962.0,1254.2L1966.0,1256.2L1966.6,1260.8L1970.0,1256.2L1973.5,1256.6L1974.0,1255.8L1978.0,1253.0L1980.3,1252.3L1982.0,1250.9L1983.2,1254.6L1986.0,1252.6L1990.0,1250.1L1993.0,1246.3L1994.0,1248.6L1998.0,1243.2L2002.0,1243.1L2006.0,1240.3L2010.0,1237.6L2014.0,1240.3L2018.0,1238.6L2020.3,1237.5L2022.0,1235.0L2026.0,1232.2L2030.0,1232.1L2034.0,1230.0L2038.0,1226.2L2040.9,1229.6L2042.0,1229.1L2046.0,1226.5L2050.0,1225.2L2054.0,1225.6L2058.0,1224.8L2058.4,1227.2L2062.0,1223.8L2066.0,1220.9L2070.0,1222.7L2074.0,1219.5L2078.0,1219.3L2079.9,1221.3L2082.0,1220.1L2086.0,1218.2L2090.0,1219.0L2094.0,1218.9L2098.0,1217.6L2101.4,1218.0L2102.0,1218.6L2106.0,1217.5L2110.0,1216.1L2114.0,1217.8L2118.0,1218.4L2122.0,1216.8L2126.0,1213.7L2127.8,1214.0L2130.0,1215.3L2134.0,1215.3L2138.0,1213.6L2142.0,1215.5L2146.0,1214.8L2150.0,1213.0L2154.0,1212.2L2158.0,1214.7L2160.0,1213.9L2162.0,1217.8L2166.0,1213.8L2170.0,1214.4L2174.0,1219.1L2178.0,1213.5L2182.0,1216.5L2186.0,1215.2L2190.0,1214.4L2194.0,1213.3L2198.0,1214.9L2202.0,1217.0L2206.0,1216.1L2210.0,1214.9L2214.0,1216.4L2218.0,1214.7L2222.0,1215.5L2226.0,1216.9L2230.0,1215.4L2234.0,1216.5L2238.0,1215.7L2242.0,1214.2L2246.0,1217.9L2250.0,1215.4L2254.0,1218.6L2258.0,1218.4L2262.0,1218.9L2266.0,1217.8L2270.0,1216.1L2274.0,1214.9L2278.0,1215.3L2282.0,1215.2L2286.0,1217.3L2290.0,1213.5L2294.0,1217.1L2298.0,1215.3L2302.0,1216.4L2306.0,1217.1L2310.0,1216.7L2314.0,1217.3L2318.0,1214.7L2322.0,1215.0L2326.0,1213.7L2330.0,1215.4L2334.0,1215.7L2336.0,1216.7L2338.0,1220.1L2342.0,1227.1L2346.0,1220.5L2350.0,1224.4L2354.0,1215.9L2358.0,1215.9L2362.0,1216.3L2366.0,1218.5L2370.0,1219.2L2374.0,1218.1L2378.0,1217.8L2382.0,1215.8L2386.0,1216.2L2388.0,1216.6L2390.0,1204.2L2394.0,1189.8L2395.3,1182.8L2397.0,1298.2L2398.0,1295.3L2402.0,1293.2L2403.0,1296.0L2406.0,1237.8L2409.0,1222.6L2410.0,1219.7L2414.0,1217.7L2418.0,1214.9L2422.0,1217.8L2426.0,1216.7L2430.0,1213.4L2434.0,1217.4L2438.0,1217.8L2442.0,1217.9L2446.0,1217.4L2450.0,1215.8L2454.0,1215.8L2458.0,1217.6L2462.0,1218.4L2466.0,1220.5L2470.0,1216.9L2474.0,1213.8L2478.0,1215.8L2482.0,1217.5L2486.0,1217.3L2490.0,1217.8L2494.0,1214.8L2498.0,1215.2L2502.0,1216.6L2506.0,1216.1L2510.0,1216.1L2514.0,1214.8L2518.0,1215.2L2522.0,1216.7L2525.0,1217.3L2526.0,1214.7L2530.0,1219.1L2534.0,1214.9L2538.0,1209.8" stroke="#a86d00" stroke-dasharray="4 2"/>
<path d="M1506.0,1244.1L1510.0,1244.2L1514.0,1244.2L1518.0,1244.1L1522.0,1244.1L1526.0,1244.0L1530.0,1243.9L1534.0,1243.8L1538.0,1243.7L1542.0,1243.6L1546.0,1243.6L1550.0,1243.6L1554.0,1243.8L1558.0,1244.1L1562.0,1244.3L1566.0,1244.4L1570.0,1244.5L1574.0,1244.4L1578.0,1244.3L1582.0,1244.1L1586.0,1243.9L1590.0,1243.9L1594.0,1243.8L1598.0,1243.9L1602.0,1244.0L1606.0,1244.2L1610.0,1244.3L1614.0,1244.5L1618.0,1244.5L1622.0,1244.4L1626.0,1244.3L1630.0,1244.2L1634.0,1244.2L1638.0,1244.3L1642.0,1244.3L1646.0,1244.4L1650.0,1244.5L1654.0,1244.7L1658.0,1244.8L1662.0,1244.9L1666.0,1245.0L1670.0,1245.1L1674.0,1245.1L1678.0,1245.0L1682.0,1244.9L1686.0,1244.6L1690.0,1244.4L1694.0,1244.2L1698.0,1244.1L1702.0,1244.1L1706.0,1244.1L1710.0,1244.3L1714.0,1244.4L1718.0,1244.6L1722.0,1244.8L1726.0,1245.2L1730.0,1245.8L1734.0,1246.2L1738.0,1246.4L1742.0,1246.4L1746.0,1246.2L1750.0,1246.0L1754.0,1245.7L1758.0,1245.4L1762.0,1245.3L1766.0,1245.3L1770.0,1245.3L1774.0,1245.3L1778.0,1245.2L1782.0,1245.3L1786.0,1245.5L1790.0,1245.9L1794.0,1246.2L1798.0,1246.4L1800.0,1246.3L1802.0,1246.1L1806.0,1245.9L1810.0,1245.8L1814.0,1245.7L1818.0,1245.8L1822.0,1245.8L1826.0,1245.9L1830.0,1245.9L1834.0,1245.9L1838.0,1246.0L1842.0,1246.3L1846.0,1246.8L1850.0,1247.1L1854.0,1247.3L1858.0,1247.3L1862.0,1247.4L1866.0,1247.4L1870.0,1247.4L1874.0,1247.5L1878.0,1247.6L1882.0,1247.7L1886.0,1247.9L1890.0,1248.0L1894.0,1247.9L1898.0,1247.7L1902.0,1247.5L1906.0,1247.4L1910.0,1247.4L1914.0,1247.3L1918.0,1247.2L1922.0,1247.2L1926.0,1247.2L1930.0,1247.2L1930.5,1247.1L1933.9,1250.3L1934.0,1249.1L1935.9,1226.9L1938.0,1230.2L1940.3,1233.7L1942.0,1228.1L1943.7,1222.6L1946.0,1227.2L1950.0,1235.0L1952.0,1239.0L1954.0,1241.7L1958.0,1246.9L1958.8,1247.9L1962.0,1249.4L1966.0,1251.1L1966.6,1251.1L1970.0,1250.8L1973.5,1250.4L1974.0,1249.9L1978.0,1247.6L1980.3,1246.6L1982.0,1247.3L1983.2,1248.1L1986.0,1246.7L1990.0,1244.4L1993.0,1242.4L1994.0,1241.7L1998.0,1239.7L2002.0,1237.7L2006.0,1235.8L2010.0,1234.1L2014.0,1232.6L2018.0,1231.1L2020.3,1230.2L2022.0,1229.5L2026.0,1227.9L2030.0,1226.3L2034.0,1224.7L2038.0,1223.2L2040.9,1222.4L2042.0,1222.5L2046.0,1221.9L2050.0,1221.1L2054.0,1220.2L2058.0,1219.0L2058.4,1218.6L2062.0,1217.7L2066.0,1216.9L2070.0,1216.3L2074.0,1215.8L2078.0,1215.3L2079.9,1215.1L2082.0,1214.9L2086.0,1214.7L2090.0,1214.4L2094.0,1214.1L2098.0,1213.6L2101.4,1213.2L2102.0,1213.0L2106.0,1212.4L2110.0,1211.8L2114.0,1211.3L2118.0,1210.6L2122.0,1210.1L2126.0,1209.7L2127.8,1209.6L2130.0,1209.7L2134.0,1209.6L2138.0,1209.4L2142.0,1209.3L2146.0,1209.2L2150.0,1209.2L2154.0,1209.2L2158.0,1209.2L2160.0,1209.4L2162.0,1209.5L2166.0,1209.7L2170.0,1209.7L2174.0,1209.7L2178.0,1209.6L2182.0,1209.5L2186.0,1209.4L2190.0,1209.3L2194.0,1209.3L2198.0,1209.2L2202.0,1209.3L2206.0,1209.3L2210.0,1209.4L2214.0,1209.6L2218.0,1209.7L2222.0,1209.7L2226.0,1209.7L2230.0,1209.7L2234.0,1209.8L2238.0,1210.0L2242.0,1210.2L2246.0,1210.5L2250.0,1210.9L2254.0,1211.2L2258.0,1211.4L2262.0,1211.4L2266.0,1211.1L2270.0,1210.8L2274.0,1210.6L2278.0,1210.5L2282.0,1210.4L2286.0,1210.3L2290.0,1210.3L2294.0,1210.2L2298.0,1210.2L2302.0,1210.2L2306.0,1210.3L2310.0,1210.3L2314.0,1210.3L2318.0,1210.2L2322.0,1210.1L2326.0,1210.0L2330.0,1210.2L2334.0,1210.4L2336.0,1210.6L2338.0,1213.8L2342.0,1219.8L2346.0,1213.1L2350.0,1219.7L2354.0,1210.7L2358.0,1210.9L2362.0,1211.2L2366.0,1211.4L2370.0,1211.5L2374.0,1211.5L2378.0,1211.5L2382.0,1211.5L2386.0,1211.4L2388.0,1211.2L2390.0,1202.0L2394.0,1183.7L2395.3,1177.5L2397.0,1290.1L2398.0,1290.0L2402.0,1290.0L2403.0,1290.3L2406.0,1232.5L2409.0,1216.7L2410.0,1215.8L2414.0,1212.1L2418.0,1211.9L2422.0,1211.7L2426.0,1211.4L2430.0,1211.1L2434.0,1210.9L2438.0,1210.7L2442.0,1210.7L2446.0,1210.9L2450.0,1211.1L2454.0,1211.3L2458.0,1211.4L2462.0,1211.3L2466.0,1211.1L2470.0,1210.9L2474.0,1210.7L2478.0,1210.7L2482.0,1210.8L2486.0,1210.9L2490.0,1210.8L2494.0,1210.6L2498.0,1210.3L2502.0,1210.1L2506.0,1210.0L2510.0,1210.0L2514.0,1210.2L2518.0,1210.4L2522.0,1210.5L2525.0,1210.5L2526.0,1211.0L2530.0,1213.3L2534.0,1208.5L2538.0,1203.9" stroke="#ffa500"/>
</g>
<g clip-path="url(#c0)" fill="none" shape-rendering="crispEdges">
<path d="M78.0,95.7L83.0,100.6L88.0,93.9L93.0,90.0L98.0,103.3L103.0,97.7L108.0,103.6L113.0,101.7L118.0,90.1L123.0,91.4L128.0,94.2L133.0,98.4L138.0,98.5L143.0,102.6L148.0,91.7L153.0,94.4L158.0,97.0L163.0,93.3L168.0,93.5L173.0,100.7L178.0,91.5L183.0,89.0L188.0,111.6L193.0,92.4L198.0,89.9L203.0,96.5L208.0,95.4L213.0,100.3L218.0,98.9L223.0,103.5L228.0,101.7L233.0,102.7L238.0,98.8L243.0,101.6L248.0,98.6L253.0,100.9L258.0,101.4L263.0,96.6L268.0,103.3L273.0,102.4L278.0,98.9L283.0,97.9L288.0,95.2L293.0,93.6L298.0,103.1L303.0,105.3L308.0,91.6L313.0,108.2L318.0,99.2L323.0,98.0L328.0,99.4L333.0,79.2L338.0,95.4L343.0,101.3L348.0,98.5L353.0,100.7L358.0,100.7L363.0,105.0L368.0,92.6L373.0,98.9L378.0,95.6L383.0,98.8L388.0,101.0L393.0,101.9L398.0,99.9L403.0,101.2L408.0,93.4L413.0,97.9L418.0,101.3L423.0,104.3L428.0,96.4L433.0,101.4L438.0,91.1L443.0,106.8L448.0,96.1L453.0,98.9L458.0,103.0L463.0,100.3L468.0,95.6L473.0,98.2L478.0,108.1L483.0,101.4L488.0,90.7L493.0,108.1L498.0,103.4L503.0,95.0L508.0,88.9L513.0,94.3L518.0,96.4L523.0,99.8L528.0,96.0L533.0,100.3L538.0,99.4L543.0,109.5L548.0,107.4L553.0,97.2L558.0,97.1L563.0,89.6L568.0,88.9L573.0,101.8L578.0,105.7L583.0,107.1L588.0,96.1L593.0,100.2L598.0,103.8L603.0,95.6L608.0,102.6L613.0,100.3L618.0,107.8L623.0,105.2L628.0,104.1L633.0,97.2L638.0,92.9L643.0,104.2L648.0,96.3L653.0,88.3L658.0,101.4L663.0,100.5L668.0,101.8L673.0,110.4L678.0,102.3L683.0,94.4L688.0,98.0L693.0,98.1L698.0,113.2L703.0,103.3L708.0,99.3L713.0,99.4L718.0,105.9L723.0,97.3L728.0,94.5L733.0,91.7L738.0,104.9L743.0,101.5L748.0,99.6L753.0,96.8L758.0,96.1L763.0,97.4L768.0,100.1L773.0,94.4L778.0,106.5L783.0,108.9L788.0,113.3L793.0,101.3L798.0,104.5L803.0,105.2L808.0,102.1L813.0,106.8L818.0,101.4L823.0,88.1L828.0,102.2L833.0,103.1L838.0,101.5L843.0,93.5L848.0,97.1L853.0,105.8L858.0,98.0L863.0,102.0L868.0,101.8L873.0,95.8L878.0,103.5L883.0,98.0L888.0,98.2L893.0,103.6L898.0,95.1L903.0,106.8L908.0,102.8L913.0,102.7L918.0,100.5L923.0,99.1L928.0,104.9L933.0,96.0L938.0,99.7L943.0,101.6L948.0,100.5L953.0,108.8L958.0,103.6L963.0,106.4L968.0,104.8L973.0,96.7L978.0,100.1L983.0,106.0L988.0,105.4L993.0,107.0L998.0,101.7L1003.0,89.4L1008.0,99.7L1013.0,95.9L1018.0,103.8L1023.0,86.6L1028.0,100.7L1033.0,106.5L1038.0,100.7L1043.0,90.2L1048.0,98.8L1053.0,93.4L1058.0,98.9L1063.0,109.6L1068.0,114.5L1073.0,104.4L1078.0,102.8L1083.0,102.7L1088.0,97.6L1093.0,106.1L1098.0,105.0L1103.0,99.9L1108.0,101.9L1113.0,105.5L1118.0,91.0L1123.0,95.6L1128.0,104.3L1133.0,104.4L1138.0,102.0L1143.0,101.0L1148.0,100.1L1153.0,101.7L1158.0,91.3L1163.0,103.5L1168.0,102.3L1173.0,109.9L1178.0,104.5L1183.0,106.7L1188.0,114.2L1193.0,99.7L1198.0,106.7L1203.0,96.7L1208.0,93.7L1213.0,100.6L1218.0,105.8L1223.0,91.9L1228.0,109.6L1233.0,89.6L1238.0,102.2L1243.0,103.4L1248.0,114.5L1253.0,57.5L1258.0,95.6L1263.0,107.3L1268.0,101.0L1273.0,107.8L1278.0,104.9L1283.0,108.5L1288.0,102.8L1293.0,89.6L1298.0,101.3L1303.0,99.2L1308.0,105.6L1313.0,106.6L1318.0,104.9L1323.0,101.6L1328.0,104.9L1333.0,107.9L1338.0,102.1L1343.0,103.5L1348.0,94.2L1353.0,103.5L1358.0,94.4L1363.0,103.1L1368.0,103.9L1373.0,103.7L1378.0,97.9L1383.0,105.4L1388.0,100.3L1393.0,100.8L1398.0,111.0L1403.0,98.5L1408.0,97.6L1413.0,94.7L1418.0,109.0L1423.0,96.7L1428.0,111.3L1433.0,107.3L1438.0,97.8" stroke="#005a00" stroke-dasharray="4 2"/>
<path d="M78.0,182.6L83.0,192.4L88.0,191.8L93.0,183.4L98.0,193.7L103.0,182.0L108.0,183.8L113.0,189.4L118.0,184.0L123.0,185.2L128.0,179.3L133.0,189.0L138.0,197.8L143.0,191.4L148.0,188.4L153.0,184.1L158.0,181.7L163.0,190.1L168.0,192.0L173.0,190.4L178.0,191.6L183.0,185.8L188.0,193.4L193.0,183.9L198.0,188.3L203.0,187.8L208.0,183.7L213.0,183.1L218.0,184.0L223.0,185.9L228.0,186.7L233.0,197.5L238.0,192.4L243.0,188.1L248.0,179.8L253.0,191.0L258.0,184.4L263.0,190.2L268.0,197.2L273.0,187.1L278.0,179.4L283.0,177.7L288.0,186.6L293.0,179.1L298.0,181.1L303.0,179.4L308.0,185.6L313.0,188.9L318.0,185.9L323.0,184.6L328.0,183.4L333.0,187.4L338.0,185.2L343.0,188.7L348.0,191.4L353.0,176.0L358.0,183.5L363.0,186.6L368.0,189.5L373.0,185.1L378.0,175.2L383.0,189.1L388.0,183.6L393.0,180.4L398.0,202.6L403.0,178.8L408.0,182.9L413.0,181.7L418.0,180.7L423.0,191.7L428.0,174.1L433.0,191.3L438.0,190.0L443.0,187.7L448.0,183.6L453.0,192.1L458.0,189.8L463.0,192.3L468.0,180.5L473.0,196.2L478.0,185.0L483.0,178.2L488.0,190.5L493.0,182.9L498.0,185.7L503.0,189.0L508.0,178.9L513.0,194.7L518.0,189.8L523.0,187.8L528.0,188.8L533.0,184.2L538.0,188.7L543.0,190.0L548.0,176.6L553.0,184.2L558.0,184.0L563.0,190.4L568.0,172.7L573.0,207.8L578.0,192.7L583.0,186.8L588.0,186.6L593.0,186.5L598.0,191.4L603.0,189.4L608.0,185.8L613.0,183.2L618.0,181.1L623.0,192.4L628.0,180.4L633.0,194.5L638.0,172.4L643.0,184.8L648.0,187.5L653.0,198.8L658.0,183.8L663.0,181.5L668.0,190.2L673.0,191.1L678.0,185.5L683.0,182.4L688.0,170.9L693.0,183.6L698.0,183.6L703.0,185.0L708.0,182.7L713.0,188.6L718.0,192.3L723.0,192.6L728.0,198.5L733.0,181.3L738.0,185.2L743.0,186.8L748.0,187.3L753.0,188.2L758.0,189.0L763.0,175.5L768.0,194.2L773.0,178.5L778.0,183.1L783.0,186.3L788.0,201.7L793.0,184.7L798.0,181.0L803.0,185.5L808.0,182.5L813.0,184.9L818.0,185.0L823.0,174.4L828.0,193.2L833.0,184.1L838.0,191.6L843.0,179.7L848.0,175.5L853.0,181.6L858.0,182.9L863.0,188.8L868.0,183.7L873.0,179.3L878.0,183.3L883.0,181.4L888.0,172.1L893.0,187.3L898.0,191.3L903.0,182.1L908.0,179.2L913.0,181.8L918.0,187.3L923.0,180.9L928.0,186.4L933.0,186.0L938.0,186.6L943.0,193.7L948.0,187.9L953.0,184.4L958.0,186.4L963.0,185.1L968.0,200.3L973.0,177.7L978.0,192.5L983.0,177.7L988.0,194.9L993.0,186.8L998.0,186.5L1003.0,181.1L1008.0,186.0L1013.0,180.4L1018.0,181.8L1023.0,180.1L1028.0,187.4L1033.0,187.5L1038.0,179.2L1043.0,187.4L1048.0,181.0L1053.0,185.8L1058.0,175.4L1063.0,182.3L1068.0,176.3L1073.0,181.8L1078.0,178.6L1083.0,180.3L1088.0,189.6L1093.0,186.7L1098.0,181.2L1103.0,180.5L1108.0,179.2L1113.0,186.6L1118.0,181.6L1123.0,186.3L1128.0,181.3L1133.0,186.8L1138.0,191.8L1143.0,190.9L1148.0,185.2L1153.0,191.1L1158.0,178.8L1163.0,181.2L1168.0,180.6L1173.0,190.8L1178.0,179.8L1183.0,185.3L1188.0,184.0L1193.0,184.9L1198.0,172.9L1203.0,179.0L1208.0,183.3L1213.0,186.0L1218.0,188.4L1223.0,173.6L1228.0,171.6L1233.0,183.6L1238.0,182.2L1243.0,178.9L1248.0,185.3L1253.0,215.0L1258.0,178.7L1263.0,175.9L1268.0,180.2L1273.0,182.3L1278.0,177.0L1283.0,174.1L1288.0,176.6L1293.0,177.5L1298.0,175.7L1303.0,181.7L1308.0,173.6L1313.0,193.7L1318.0,182.3L1323.0,176.0L1328.0,181.1L1333.0,186.0L1338.0,178.7L1343.0,190.4L1348.0,177.2L1353.0,177.6L1358.0,176.3L1363.0,175.0L1368.0,182.0L1373.0,174.8L1378.0,189.5L1383.0,186.8L1388.0,181.8L1393.0,186.3L1398.0,188.2L1403.0,194.0L1408.0,191.1L1413.0,177.9L1418.0,182.5L1423.0,181.6L1428.0,188.0L1433.0,179.4L1438.0,181.5" stroke="#005a00" stroke-dasharray="4 2"/>
<path d="M78.0,95.5L83.0,98.5L88.0,92.8L93.0,88.3L98.0,104.6L103.0,98.7L108.0,104.0L113.0,102.0L118.0,89.9L123.0,90.2L128.0,95.7L133.0,97.1L138.0,99.1L143.0,101.6L148.0,93.1L153.0,93.4L158.0,97.8L163.0,92.9L168.0,94.9L173.0,99.7L178.0,92.7L183.0,89.7L188.0,110.2L193.0,91.6L198.0,92.4L203.0,100.5L208.0,98.7L213.0,98.4L218.0,95.9L223.0,101.0L228.0,99.8L233.0,104.6L238.0,100.9L243.0,99.6L248.0,97.9L253.0,100.3L258.0,101.9L263.0,100.4L268.0,101.3L273.0,101.6L278.0,101.1L283.0,101.6L288.0,94.2L293.0,93.4L298.0,102.4L303.0,106.6L308.0,91.2L313.0,110.9L318.0,95.5L323.0,98.4L328.0,100.5L333.0,78.3L338.0,94.5L343.0,103.9L348.0,97.3L353.0,103.8L358.0,102.8L363.0,105.5L368.0,94.0L373.0,98.2L378.0,96.5L383.0,98.1L388.0,102.2L393.0,103.4L398.0,100.6L403.0,100.3L408.0,90.8L413.0,93.1L418.0,105.5L423.0,104.0L428.0,96.8L433.0,101.8L438.0,91.2L443.0,106.4L448.0,95.6L453.0,95.7L458.0,102.2L463.0,105.2L468.0,96.3L473.0,99.5L478.0,106.5L483.0,100.1L488.0,94.5L493.0,109.7L498.0,100.9L503.0,93.8L508.0,88.5L513.0,94.6L518.0,97.5L523.0,97.8L528.0,96.8L533.0,98.9L538.0,99.8L543.0,108.6L548.0,105.5L553.0,100.6L558.0,96.6L563.0,88.5L568.0,90.0L573.0,100.1L578.0,104.3L583.0,105.4L588.0,96.9L593.0,100.5L598.0,102.9L603.0,98.7L608.0,104.4L613.0,101.9L618.0,108.0L623.0,103.8L628.0,106.6L633.0,95.5L638.0,93.8L643.0,100.0L648.0,97.6L653.0,88.1L658.0,101.0L663.0,102.3L668.0,104.5L673.0,109.5L678.0,98.9L683.0,96.6L688.0,101.5L693.0,98.3L698.0,110.5L703.0,103.8L708.0,100.4L713.0,97.8L718.0,105.1L723.0,97.2L728.0,94.9L733.0,92.0L738.0,107.5L743.0,99.9L748.0,100.7L753.0,97.4L758.0,99.7L763.0,98.8L768.0,100.8L773.0,94.7L778.0,106.9L783.0,107.0L788.0,112.8L793.0,101.9L798.0,101.4L803.0,106.8L808.0,101.1L813.0,108.7L818.0,100.5L823.0,91.5L828.0,98.9L833.0,104.6L838.0,101.7L843.0,94.2L848.0,97.7L853.0,102.8L858.0,100.2L863.0,102.8L868.0,106.0L873.0,95.6L878.0,100.1L883.0,97.2L888.0,98.9L893.0,100.1L898.0,95.2L903.0,105.4L908.0,99.5L913.0,103.8L918.0,102.4L923.0,99.6L928.0,103.5L933.0,96.3L938.0,100.3L943.0,100.0L948.0,104.6L953.0,108.3L958.0,101.5L963.0,108.3L968.0,101.9L973.0,96.5L978.0,100.6L983.0,104.1L988.0,105.4L993.0,102.8L998.0,100.0L1003.0,93.4L1008.0,102.0L1013.0,95.3L1018.0,107.0L1023.0,83.3L1028.0,101.9L1033.0,105.9L1038.0,98.9L1043.0,93.2L1048.0,99.5L1053.0,98.8L1058.0,97.5L1063.0,107.6L1068.0,115.8L1073.0,103.2L1078.0,100.8L1083.0,98.8L1088.0,100.6L1093.0,104.3L1098.0,108.0L1103.0,100.4L1108.0,101.3L1113.0,99.8L1118.0,92.0L1123.0,98.0L1128.0,103.8L1133.0,105.4L1138.0,102.0L1143.0,103.0L1148.0,100.9L1153.0,103.9L1158.0,90.5L1163.0,105.6L1168.0,104.8L1173.0,107.9L1178.0,108.4L1183.0,106.6L1188.0,113.9L1193.0,97.1L1198.0,108.7L1203.0,98.4L1208.0,94.7L1213.0,97.1L1218.0,109.2L1223.0,92.1L1228.0,108.3L1233.0,93.3L1238.0,106.0L1243.0,107.9L1248.0,113.2L1253.0,78.0L1258.0,94.3L1263.0,106.3L1268.0,100.9L1273.0,107.5L1278.0,102.4L1283.0,109.6L1288.0,102.7L1293.0,92.2L1298.0,99.8L1303.0,98.8L1308.0,106.1L1313.0,103.0L1318.0,104.9L1323.0,102.3L1328.0,105.2L1333.0,108.9L1338.0,100.0L1343.0,103.9L1348.0,92.0L1353.0,102.3L1358.0,98.5L1363.0,104.3L1368.0,102.1L1373.0,102.9L1378.0,99.1L1383.0,102.3L1388.0,103.6L1393.0,100.4L1398.0,110.3L1403.0,99.0L1408.0,96.9L1413.0,92.8L1418.0,105.2L1423.0,96.6L1428.0,111.2L1433.0,106.4L1438.0,101.6" stroke="#680092" stroke-dasharray="4 2"/>
<path d="M78.0,180.3L83.0,194.7L88.0,192.5L93.0,183.2L98.0,192.7L103.0,186.9L108.0,183.7L113.0,186.1L118.0,185.8L123.0,186.9L128.0,174.5L133.0,189.2L138.0,196.5L143.0,188.2L148.0,187.8L153.0,184.8L158.0,182.8L163.0,191.8L168.0,194.4L173.0,189.6L178.0,192.2L183.0,185.7L188.0,193.4L193.0,183.3L198.0,184.4L203.0,184.0L208.0,185.3L213.0,186.3L218.0,185.1L223.0,187.4L228.0,186.5L233.0,199.5L238.0,194.9L243.0,185.1L248.0,179.7L253.0,189.0L258.0,185.2L263.0,191.3L268.0,194.9L273.0,188.6L278.0,181.3L283.0,177.7L288.0,184.9L293.0,179.3L298.0,178.5L303.0,182.6L308.0,186.9L313.0,186.5L318.0,187.1L323.0,186.6L328.0,182.5L333.0,188.0L338.0,185.2L343.0,191.9L348.0,190.8L353.0,177.0L358.0,183.2L363.0,184.2L368.0,186.8L373.0,183.6L378.0,178.3L383.0,188.1L388.0,184.0L393.0,178.1L398.0,200.4L403.0,183.3L408.0,182.6L413.0,186.2L418.0,179.5L423.0,192.1L428.0,172.4L433.0,192.7L438.0,189.0L443.0,189.1L448.0,185.5L453.0,195.3L458.0,190.4L463.0,191.7L468.0,183.4L473.0,196.5L478.0,182.5L483.0,179.0L488.0,192.8L493.0,183.2L498.0,187.0L503.0,188.6L508.0,177.9L513.0,193.8L518.0,187.4L523.0,189.1L528.0,188.1L533.0,184.6L538.0,188.6L543.0,187.0L548.0,179.8L553.0,180.5L558.0,179.6L563.0,187.1L568.0,175.2L573.0,209.3L578.0,188.2L583.0,188.7L588.0,188.6L593.0,187.6L598.0,189.8L603.0,191.2L608.0,183.5L613.0,182.8L618.0,178.2L623.0,193.4L628.0,177.4L633.0,194.6L638.0,173.5L643.0,187.6L648.0,186.4L653.0,198.4L658.0,184.4L663.0,182.1L668.0,189.9L673.0,193.8L678.0,186.4L683.0,181.3L688.0,172.6L693.0,181.9L698.0,181.4L703.0,188.2L708.0,182.8L713.0,188.8L718.0,195.8L723.0,193.7L728.0,194.1L733.0,184.2L738.0,184.2L743.0,184.2L748.0,183.8L753.0,186.5L758.0,190.9L763.0,175.1L768.0,193.9L773.0,181.2L778.0,182.8L783.0,188.2L788.0,199.7L793.0,182.2L798.0,181.5L803.0,186.2L808.0,180.1L813.0,185.5L818.0,185.2L823.0,173.7L828.0,191.6L833.0,181.5L838.0,190.9L843.0,178.2L848.0,176.9L853.0,179.9L858.0,186.8L863.0,185.8L868.0,184.7L873.0,176.3L878.0,182.4L883.0,183.6L888.0,172.4L893.0,188.4L898.0,193.0L903.0,182.2L908.0,182.5L913.0,181.6L918.0,192.4L923.0,178.7L928.0,182.9L933.0,181.8L938.0,184.1L943.0,193.5L948.0,186.3L953.0,181.2L958.0,182.1L963.0,183.4L968.0,202.9L973.0,175.1L978.0,192.4L983.0,177.4L988.0,192.9L993.0,184.6L998.0,182.4L1003.0,182.1L1008.0,183.7L1013.0,176.9L1018.0,182.6L1023.0,178.1L1028.0,186.0L1033.0,188.7L1038.0,177.6L1043.0,188.3L1048.0,182.1L1053.0,185.5L1058.0,173.4L1063.0,183.9L1068.0,177.8L1073.0,186.4L1078.0,179.9L1083.0,181.2L1088.0,188.0L1093.0,186.8L1098.0,182.0L1103.0,178.4L1108.0,180.0L1113.0,187.2L1118.0,181.0L1123.0,185.7L1128.0,182.3L1133.0,184.3L1138.0,192.4L1143.0,188.9L1148.0,181.6L1153.0,190.2L1158.0,179.3L1163.0,184.0L1168.0,179.8L1173.0,187.3L1178.0,180.3L1183.0,183.8L1188.0,183.4L1193.0,183.7L1198.0,176.8L1203.0,175.0L1208.0,181.6L1213.0,188.4L1218.0,184.6L1223.0,174.4L1228.0,172.4L1233.0,187.5L1238.0,179.8L1243.0,181.3L1248.0,185.5L1253.0,200.0L1258.0,179.0L1263.0,177.2L1268.0,180.2L1273.0,178.1L1278.0,180.2L1283.0,174.8L1288.0,176.0L1293.0,174.6L1298.0,178.1L1303.0,181.7L1308.0,175.0L1313.0,191.2L1318.0,179.1L1323.0,178.9L1328.0,179.2L1333.0,180.4L1338.0,181.6L1343.0,191.5L1348.0,173.6L1353.0,179.0L1358.0,178.6L1363.0,177.1L1368.0,182.6L1373.0,173.2L1378.0,190.8L1383.0,186.9L1388.0,185.6L1393.0,187.3L1398.0,185.1L1403.0,192.8L1408.0,190.8L1413.0,179.0L1418.0,180.8L1423.0,182.1L1428.0,186.9L1433.0,178.3L1438.0,179.0" stroke="#680092" stroke-dasharray="4 2"/>
<path d="M78.0,141.4L80.0,141.4L82.0,141.4L84.0,141.4L86.0,141.4L88.0,141.4L90.0,141.4L92.0,141.4L94.0,141.4L96.0,141.4L98.0,141.4L100.0,141.4L102.0,141.4L104.0,141.4L106.0,141.4L108.0,141.4L110.0,141.4L112.0,141.4L114.0,141.4L116.0,141.4L118.0,141.4L120.0,141.4L122.0,141.4L124.0,141.4L126.0,141.4L128.0,141.4L130.0,141.4L132.0,141.4L134.0,141.4L136.0,141.4L138.0,141.4L140.0,141.4L142.0,141.4L144.0,141.4L146.0,141.4L148.0,141.4L150.0,141.4L152.0,141.4L154.0,141.4L156.0,141.4L158.0,141.4L160.0,141.4L162.0,141.4L164.0,141.4L166.0,141.4L168.0,141.4L170.0,141.4L172.0,141.4L174.0,141.4L176.0,141.4L178.0,141.4L180.0,141.4L182.0,141.4L184.0,141.4L186.0,141.4L188.0,141.4L190.0,141.4L192.0,141.4L194.0,141.4L196.0,141.4L198.0,141.4L200.0,141.4L202.0,141.4L204.0,141.4L206.0,141.4L208.0,141.4L210.0,141.4L212.0,141.4L214.0,141.4L216.0,141.4L218.0,141.4L220.0,141.4L222.0,141.4L224.0,141.4L226.0,141.4L228.0,141.4L230.0,141.4L232.0,141.4L234.0,141.4L236.0,141.4L238.0,141.4L240.0,141.4L242.0,141.4L244.0,141.4L246.0,141.4L248.0,141.4L250.0,141.4L252.0,141.4L254.0,141.4L256.0,141.4L258.0,141.4L260.0,141.4L262.0,141.4L264.0,141.4L266.0,141.4L268.0,141.4L270.0,141.4L272.0,141.4L274.0,141.4L276.0,141.4L278.0,141.4L280.0,141.4L282.0,141.4L284.0,141.4L286.0,141.4L288.0,141.4L290.0,141.4L292.0,141.4L294.0,141.4L296.0,141.4L298.0,141.4L300.0,141.4L302.0,141.4L304.0,141.4L306.0,141.4L308.0,141.4L310.0,141.4L312.0,141.4L314.0,141.4L316.0,141.4L318.0,141.4L320.0,141.4L322.0,141.4L324.0,141.4L326.0,141.4L328.0,141.4L330.0,141.4L332.0,141.4L334.0,141.4L336.0,141.4L338.0,141.4L340.0,141.4L342.0,141.4L344.0,141.4L346.0,141.4L348.0,141.4L350.0,141.4L352.0,141.4L354.0,141.4L356.0,141.4L358.0,141.4L360.0,141.4L362.0,141.4L364.0,141.4L366.0,141.4L368.0,141.4L370.0,141.4L372.0,141.4L374.0,141.4L376.0,141.4L378.0,141.4L380.0,141.4L382.0,141.4L384.0,141.4L386.0,141.4L388.0,141.4L390.0,141.4L392.0,141.4L394.0,141.4L396.0,141.4L398.0,141.4L400.0,141.4L402.0,141.4L404.0,141.4L406.0,141.4L408.0,141.4L410.0,141.4L412.0,141.4L414.0,141.4L416.0,141.4L418.0,141.4L420.0,141.4L422.0,141.4L424.0,141.4L426.0,141.4L428.0,141.4L430.0,141.4L432.0,141.4L434.0,141.4L436.0,141.4L438.0,141.4L440.0,141.4L442.0,141.4L444.0,141.4L446.0,141.4L448.0,141.4L450.0,141.4L452.0,141.4L454.0,141.4L456.0,141.4L458.0,141.4L460.0,141.4L462.0,141.4L464.0,141.4L466.0,141.4L468.0,141.4L470.0,141.4L472.0,141.4L474.0,141.4L476.0,141.4L478.0,141.4L480.0,141.4L482.0,141.4L484.0,141.4L486.0,141.4L488.0,141.4L490.0,141.4L492.0,141.4L494.0,141.4L496.0,141.4L498.0,141.4L500.0,141.4L502.0,141.4L504.0,141.4L506.0,141.4L508.0,141.4L510.0,141.4L512.0,141.4L514.0,141.4L516.0,141.4L518.0,141.4L520.0,141.4L522.0,141.4L524.0,141.4L526.0,141.4L528.0,141.4L530.0,141.4L532.0,141.4L534.0,141.4L536.0,141.4L538.0,141.4L540.0,141.4L542.0,141.4L544.0,141.4L546.0,141.4L548.0,141.4L550.0,141.4L552.0,141.4L554.0,141.4L556.0,141.4L558.0,141.4L560.0,141.4L562.0,141.4L564.0,141.4L566.0,141.4L568.0,141.4L570.0,141.4L572.0,141.4L574.0,141.4L576.0,141.4L578.0,141.4L580.0,141.4L582.0,141.4L584.0,141.4L586.0,141.4L588.0,141.4L590.0,141.4L592.0,141.4L594.0,141.4L596.0,141.4L598.0,141.4L600.0,141.4L602.0,141.4L604.0,141.4L606.0,141.4L608.0,141.4L610.0,141.4L612.0,141.4L614.0,141.4L616.0,141.4L618.0,141.4L620.0,141.4L622.0,141.4L624.0,141.4L626.0,141.4L628.0,141.4L630.0,141.4L632.0,142.2L634.0,143.0L636.0,143.8L638.0,144.6L640.0,145.4L642.0,142.6L644.0,139.8L646.0,139.6L648.0,142.0L650.0,144.4L652.0,143.1L654.0,141.7L656.0,140.4L658.0,140.6L660.0,140.8L662.0,141.1L664.0,141.3L666.0,141.4L668.0,141.4L670.0,141.4L672.0,141.4L674.0,141.4L676.0,141.4L678.0,141.4L680.0,141.4L682.0,141.4L684.0,141.4L686.0,141.4L688.0,141.4L690.0,141.4L692.0,141.4L694.0,141.4L696.0,141.4L698.0,141.4L700.0,141.4L702.0,141.4L704.0,141.4L706.0,141.4L708.0,141.4L710.0,141.4L712.0,141.4L714.0,141.4L716.0,141.4L718.0,141.4L720.0,141.4L722.0,141.4L724.0,141.4L726.0,141.4L728.0,141.4L730.0,141.4L732.0,141.4L734.0,141.4L736.0,141.4L738.0,141.4L740.0,141.4L742.0,141.4L744.0,141.4L746.0,141.4L748.0,141.4L750.0,141.4L752.0,141.4L754.0,141.4L756.0,141.4L758.0,141.4L760.0,141.4L762.0,141.4L764.0,141.4L766.0,141.4L768.0,141.4L770.0,141.4L772.0,141.4L774.0,141.4L776.0,141.4L778.0,141.4L780.0,141.4L782.0,141.4L784.0,141.4L786.0,141.4L788.0,141.4L790.0,141.4L792.0,141.4L794.0,141.4L796.0,141.4L798.0,141.4L800.0,141.4L802.0,141.4L804.0,141.4L806.0,141.4L808.0,141.4L810.0,141.4L812.0,141.4L814.0,141.4L816.0,141.4L818.0,141.4L820.0,141.4L822.0,141.4L824.0,141.4L826.0,141.4L828.0,141.4L830.0,141.4L832.0,141.4L834.0,141.4L836.0,141.4L838.0,141.4L840.0,141.4L842.0,141.4L844.0,141.4L846.0,141.4L848.0,141.4L850.0,141.4L852.0,141.4L854.0,141.4L856.0,141.4L858.0,141.4L860.0,141.4L862.0,141.4L864.0,141.4L866.0,141.4L868.0,141.4L870.0,141.4L872.0,141.4L874.0,141.4L876.0,141.4L878.0,141.4L880.0,141.4L882.0,141.4L884.0,141.4L886.0,141.4L888.0,141.4L890.0,141.4L892.0,141.4L894.0,141.4L896.0,141.4L898.0,141.4L900.0,141.4L902.0,141.4L904.0,141.4L906.0,141.4L908.0,141.4L910.0,141.4L912.0,141.4L914.0,141.4L916.0,141.4L918.0,141.4L920.0,141.4L922.0,141.4L924.0,141.4L926.0,141.4L928.0,141.4L930.0,141.4L932.0,141.4L934.0,141.4L936.0,141.4L938.0,141.4L940.0,141.4L942.0,141.4L944.0,141.4L946.0,141.4L948.0,141.4L950.0,141.4L952.0,141.4L954.0,141.4L956.0,141.4L958.0,141.4L960.0,141.4L962.0,141.4L964.0,141.4L966.0,141.4L968.0,141.4L970.0,141.4L972.0,141.4L974.0,141.4L976.0,141.4L978.0,141.4L980.0,141.4L982.0,141.4L984.0,141.4L986.0,141.4L988.0,141.4L990.0,141.4L992.0,141.4L994.0,141.4L996.0,141.4L998.0,141.4L1000.0,141.4L1002.0,141.4L1004.0,141.4L1006.0,141.4L1008.0,141.4L1010.0,141.4L1012.0,141.4L1014.0,141.4L1016.0,141.4L1018.0,141.4L1020.0,141.4L1022.0,141.4L1024.0,141.4L1026.0,141.4L1028.0,141.4L1030.0,141.4L1032.0,141.4L1034.0,141.4L1036.0,141.4L1038.0,141.4L1040.0,141.4L1042.0,141.4L1044.0,141.4L1046.0,141.4L1048.0,141.4L1050.0,141.4L1052.0,141.4L1054.0,141.4L1056.0,141.4L1058.0,141.4L1060.0,141.4L1062.0,141.4L1064.0,141.4L1066.0,141.4L1068.0,141.4L1070.0,141.4L1072.0,141.4L1074.0,141.4L1076.0,141.4L1078.0,141.4L1080.0,141.4L1082.0,141.4L1084.0,141.4L1086.0,141.4L1088.0,141.4L1090.0,141.4L1092.0,141.4L1094.0,141.4L1096.0,141.4L1098.0,141.4L1100.0,141.4L1102.0,141.4L1104.0,141.4L1106.0,141.4L1108.0,141.4L1110.0,141.4L1112.0,141.4L1114.0,141.4L1116.0,141.4L1118.0,141.4L1120.0,141.4L1122.0,141.4L1124.0,141.4L1126.0,141.4L1128.0,141.4L1130.0,141.4L1132.0,141.4L1134.0,141.4L1136.0,141.4L1138.0,141.4L1140.0,141.4L1142.0,141.4L1144.0,141.4L1146.0,141.4L1148.0,141.4L1150.0,141.4L1152.0,141.4L1154.0,141.4L1156.0,141.4L1158.0,141.4L1160.0,141.4L1162.0,141.4L1164.0,141.4L1166.0,141.4L1168.0,141.4L1170.0,141.4L1172.0,142.4L1174.0,143.4L1176.0,144.4L1178.0,142.4L1180.0,140.4L1182.0,138.4L1184.0,140.1L1186.0,141.7L1188.0,143.4L1190.0,142.7L1192.0,142.1L1194.0,141.4L1196.0,141.4L1198.0,141.4L1200.0,141.4L1202.0,141.4L1204.0,141.4L1206.0,141.4L1208.0,141.4L1210.0,141.4L1212.0,141.4L1214.0,141.4L1216.0,141.4L1218.0,141.4L1220.0,141.4L1222.0,141.4L1224.0,141.4L1226.0,141.4L1228.0,141.4L1230.0,141.4L1232.0,141.4L1234.0,141.4L1236.0,141.4L1238.0,141.4L1240.0,141.4L1242.0,142.9L1244.0,144.4L1246.0,145.9L1248.0,147.4L1250.0,140.4L1252.0,133.4L1254.0,137.7L1256.0,142.1L1258.0,146.4L1260.0,145.2L1262.0,143.9L1264.0,142.7L1266.0,141.4L1268.0,141.4L1270.0,141.4L1272.0,141.4L1274.0,141.4L1276.0,141.4L1278.0,141.4L1280.0,141.4L1282.0,141.4L1284.0,141.4L1286.0,141.4L1288.0,141.4L1290.0,141.4L1292.0,141.4L1294.0,141.4L1296.0,141.4L1298.0,141.4L1300.0,141.4L1302.0,141.4L1304.0,141.4L1306.0,141.4L1308.0,141.4L1310.0,141.4L1312.0,141.4L1314.0,141.4L1316.0,141.4L1318.0,141.4L1320.0,141.4L1322.0,141.4L1324.0,141.4L1326.0,141.4L1328.0,141.4L1330.0,141.4L1332.0,141.4L1334.0,141.4L1336.0,141.4L1338.0,141.4L1340.0,141.4L1342.0,141.4L1344.0,141.4L1346.0,141.4L1348.0,141.4L1350.0,141.4L1352.0,141.4L1354.0,141.4L1356.0,141.4L1358.0,141.4L1360.0,141.4L1362.0,141.4L1364.0,141.4L1366.0,141.4L1368.0,141.4L1370.0,141.4L1372.0,141.4L1374.0,141.4L1376.0,141.4L1378.0,141.4L1380.0,141.4L1382.0,141.4L1384.0,141.4L1386.0,141.4L1388.0,141.4L1390.0,141.4L1392.0,141.4L1394.0,141.4L1396.0,141.4L1398.0,141.4L1400.0,141.4L1402.0,141.4L1404.0,141.4L1406.0,141.4L1408.0,141.4L1410.0,141.4L1412.0,141.4L1414.0,141.4L1416.0,141.4L1418.0,141.4L1420.0,141.4L1422.0,141.4L1424.0,141.4L1426.0,141.4L1428.0,141.4L1430.0,141.4L1432.0,141.4L1434.0,141.4L1436.0,141.4" stroke="#19c019"/>
<path d="M78.0,141.4L80.0,141.4L82.0,141.4L84.0,141.4L86.0,141.4L88.0,141.4L90.0,141.4L92.0,141.4L94.0,141.4L96.0,141.4L98.0,141.4L100.0,141.4L102.0,141.4L104.0,141.4L106.0,141.4L108.0,141.4L110.0,141.4L112.0,141.4L114.0,141.4L116.0,141.4L118.0,141.4L120.0,141.4L122.0,141.4L124.0,141.4L126.0,141.4L128.0,141.4L130.0,141.4L132.0,141.4L134.0,141.4L136.0,141.4L138.0,141.4L140.0,141.4L142.0,141.4L144.0,141.4L146.0,141.4L148.0,141.4L150.0,141.4L152.0,141.4L154.0,141.4L156.0,141.4L158.0,141.4L160.0,141.4L162.0,141.4L164.0,141.4L166.0,141.4L168.0,141.4L170.0,141.4L172.0,141.4L174.0,141.4L176.0,141.4L178.0,141.4L180.0,141.4L182.0,141.4L184.0,141.4L186.0,141.4L188.0,141.4L190.0,141.4L192.0,141.4L194.0,141.4L196.0,141.4L198.0,141.4L200.0,141.4L202.0,141.4L204.0,141.4L206.0,141.4L208.0,141.4L210.0,141.4L212.0,141.4L214.0,141.4L216.0,141.4L218.0,141.4L220.0,141.4L222.0,141.4L224.0,141.4L226.0,141.4L228.0,141.4L230.0,141.4L232.0,141.4L234.0,141.4L236.0,141.4L238.0,141.4L240.0,141.4L242.0,141.4L244.0,141.4L246.0,141.4L248.0,141.4L250.0,141.4L252.0,141.4L254.0,141.4L256.0,141.4L258.0,141.4L260.0,141.4L262.0,141.4L264.0,141.4L266.0,141.4L268.0,141.4L270.0,141.4L272.0,141.4L274.0,141.4L276.0,141.4L278.0,141.4L280.0,141.4L282.0,141.4L284.0,141.4L286.0,141.4L288.0,141.4L290.0,141.4L292.0,141.4L294.0,141.4L296.0,141.4L298.0,141.4L300.0,141.4L302.0,141.4L304.0,141.4L306.0,141.4L308.0,141.4L310.0,141.4L312.0,141.4L314.0,141.4L316.0,141.4L318.0,141.4L320.0,141.4L322.0,141.4L324.0,141.4L326.0,141.4L328.0,141.4L330.0,141.4L332.0,141.4L334.0,141.4L336.0,141.4L338.0,141.4L340.0,141.4L342.0,141.4L344.0,141.4L346.0,141.4L348.0,141.4L350.0,141.4L352.0,141.4L354.0,141.4L356.0,141.4L358.0,141.4L360.0,141.4L362.0,141.4L364.0,141.4L366.0,141.4L368.0,141.4L370.0,141.4L372.0,141.4L374.0,141.4L376.0,141.4L378.0,141.4L380.0,141.4L382.0,141.4L384.0,141.4L386.0,141.4L388.0,141.4L390.0,141.4L392.0,141.4L394.0,141.4L396.0,141.4L398.0,141.4L400.0,141.4L402.0,141.4L404.0,141.4L406.0,141.4L408.0,141.4L410.0,141.4L412.0,141.4L414.0,141.4L416.0,141.4L418.0,141.4L420.0,141.4L422.0,141.4L424.0,141.4L426.0,141.4L428.0,141.4L430.0,141.4L432.0,141.4L434.0,141.4L436.0,141.4L438.0,141.4L440.0,141.4L442.0,141.4L444.0,141.4L446.0,141.4L448.0,141.4L450.0,141.4L452.0,141.4L454.0,141.4L456.0,141.4L458.0,141.4L460.0,141.4L462.0,141.4L464.0,141.4L466.0,141.4L468.0,141.4L470.0,141.4L472.0,141.4L474.0,141.4L476.0,141.4L478.0,141.4L480.0,141.4L482.0,141.4L484.0,141.4L486.0,141.4L488.0,141.4L490.0,141.4L492.0,141.4L494.0,141.4L496.0,141.4L498.0,141.4L500.0,141.4L502.0,141.4L504.0,141.4L506.0,141.4L508.0,141.4L510.0,141.4L512.0,141.4L514.0,141.4L516.0,141.4L518.0,141.4L520.0,141.4L522.0,141.4L524.0,141.4L526.0,141.4L528.0,141.4L530.0,141.4L532.0,141.4L534.0,141.4L536.0,141.4L538.0,141.4L540.0,141.4L542.0,141.4L544.0,141.4L546.0,141.4L548.0,141.4L550.0,141.4L552.0,141.4L554.0,141.4L556.0,141.4L558.0,141.4L560.0,141.4L562.0,141.4L564.0,141.4L566.0,141.4L568.0,141.4L570.0,141.4L572.0,141.4L574.0,141.4L576.0,141.4L578.0,141.4L580.0,141.4L582.0,141.4L584.0,141.4L586.0,141.4L588.0,141.4L590.0,141.4L592.0,141.4L594.0,141.4L596.0,141.4L598.0,141.4L600.0,141.4L602.0,141.4L604.0,141.4L606.0,141.4L608.0,141.4L610.0,141.4L612.0,141.4L614.0,141.4L616.0,141.4L618.0,141.4L620.0,141.4L622.0,141.4L624.0,141.4L626.0,141.4L628.0,141.4L630.0,141.4L632.0,141.9L634.0,142.4L636.0,142.8L638.0,143.3L640.0,143.8L642.0,142.1L644.0,140.4L646.0,140.3L648.0,141.8L650.0,143.2L652.0,142.4L654.0,141.6L656.0,140.8L658.0,140.9L660.0,141.1L662.0,141.2L664.0,141.3L666.0,141.4L668.0,141.4L670.0,141.4L672.0,141.4L674.0,141.4L676.0,141.4L678.0,141.4L680.0,141.4L682.0,141.4L684.0,141.4L686.0,141.4L688.0,141.4L690.0,141.4L692.0,141.4L694.0,141.4L696.0,141.4L698.0,141.4L700.0,141.4L702.0,141.4L704.0,141.4L706.0,141.4L708.0,141.4L710.0,141.4L712.0,141.4L714.0,141.4L716.0,141.4L718.0,141.4L720.0,141.4L722.0,141.4L724.0,141.4L726.0,141.4L728.0,141.4L730.0,141.4L732.0,141.4L734.0,141.4L736.0,141.4L738.0,141.4L740.0,141.4L742.0,141.4L744.0,141.4L746.0,141.4L748.0,141.4L750.0,141.4L752.0,141.4L754.0,141.4L756.0,141.4L758.0,141.4L760.0,141.4L762.0,141.4L764.0,141.4L766.0,141.4L768.0,141.4L770.0,141.4L772.0,141.4L774.0,141.4L776.0,141.4L778.0,141.4L780.0,141.4L782.0,141.4L784.0,141.4L786.0,141.4L788.0,141.4L790.0,141.4L792.0,141.4L794.0,141.4L796.0,141.4L798.0,141.4L800.0,141.4L802.0,141.4L804.0,141.4L806.0,141.4L808.0,141.4L810.0,141.4L812.0,141.4L814.0,141.4L816.0,141.4L818.0,141.4L820.0,141.4L822.0,141.4L824.0,141.4L826.0,141.4L828.0,141.4L830.0,141.4L832.0,141.4L834.0,141.4L836.0,141.4L838.0,141.4L840.0,141.4L842.0,141.4L844.0,141.4L846.0,141.4L848.0,141.4L850.0,141.4L852.0,141.4L854.0,141.4L856.0,141.4L858.0,141.4L860.0,141.4L862.0,141.4L864.0,141.4L866.0,141.4L868.0,141.4L870.0,141.4L872.0,141.4L874.0,141.4L876.0,141.4L878.0,141.4L880.0,141.4L882.0,141.4L884.0,141.4L886.0,141.4L888.0,141.4L890.0,141.4L892.0,141.4L894.0,141.4L896.0,141.4L898.0,141.4L900.0,141.4L902.0,141.4L904.0,141.4L906.0,141.4L908.0,141.4L910.0,141.4L912.0,141.4L914.0,141.4L916.0,141.4L918.0,141.4L920.0,141.4L922.0,141.4L924.0,141.4L926.0,141.4L928.0,141.4L930.0,141.4L932.0,141.4L934.0,141.4L936.0,141.4L938.0,141.4L940.0,141.4L942.0,141.4L944.0,141.4L946.0,141.4L948.0,141.4L950.0,141.4L952.0,141.4L954.0,141.4L956.0,141.4L958.0,141.4L960.0,141.4L962.0,141.4L964.0,141.4L966.0,141.4L968.0,141.4L970.0,141.4L972.0,141.4L974.0,141.4L976.0,141.4L978.0,141.4L980.0,141.4L982.0,141.4L984.0,141.4L986.0,141.4L988.0,141.4L990.0,141.4L992.0,141.4L994.0,141.4L996.0,141.4L998.0,141.4L1000.0,141.4L1002.0,141.4L1004.0,141.4L1006.0,141.4L1008.0,141.4L1010.0,141.4L1012.0,141.4L1014.0,141.4L1016.0,141.4L1018.0,141.4L1020.0,141.4L1022.0,141.4L1024.0,141.4L1026.0,141.4L1028.0,141.4L1030.0,141.4L1032.0,141.4L1034.0,141.4L1036.0,141.4L1038.0,141.4L1040.0,141.4L1042.0,141.4L1044.0,141.4L1046.0,141.4L1048.0,141.4L1050.0,141.4L1052.0,141.4L1054.0,141.4L1056.0,141.4L1058.0,141.4L1060.0,141.4L1062.0,141.4L1064.0,141.4L1066.0,141.4L1068.0,141.4L1070.0,141.4L1072.0,141.4L1074.0,141.4L1076.0,141.4L1078.0,141.4L1080.0,141.4L1082.0,141.4L1084.0,141.4L1086.0,141.4L1088.0,141.4L1090.0,141.4L1092.0,141.4L1094.0,141.4L1096.0,141.4L1098.0,141.4L1100.0,141.4L1102.0,141.4L1104.0,141.4L1106.0,141.4L1108.0,141.4L1110.0,141.4L1112.0,141.4L1114.0,141.4L1116.0,141.4L1118.0,141.4L1120.0,141.4L1122.0,141.4L1124.0,141.4L1126.0,141.4L1128.0,141.4L1130.0,141.4L1132.0,141.4L1134.0,141.4L1136.0,141.4L1138.0,141.4L1140.0,141.4L1142.0,141.4L1144.0,141.4L1146.0,141.4L1148.0,141.4L1150.0,141.4L1152.0,141.4L1154.0,141.4L1156.0,141.4L1158.0,141.4L1160.0,141.4L1162.0,141.4L1164.0,141.4L1166.0,141.4L1168.0,141.4L1170.0,141.4L1172.0,142.0L1174.0,142.6L1176.0,143.2L1178.0,142.0L1180.0,140.8L1182.0,139.6L1184.0,140.6L1186.0,141.6L1188.0,142.6L1190.0,142.2L1192.0,141.8L1194.0,141.4L1196.0,141.4L1198.0,141.4L1200.0,141.4L1202.0,141.4L1204.0,141.4L1206.0,141.4L1208.0,141.4L1210.0,141.4L1212.0,141.4L1214.0,141.4L1216.0,141.4L1218.0,141.4L1220.0,141.4L1222.0,141.4L1224.0,141.4L1226.0,141.4L1228.0,141.4L1230.0,141.4L1232.0,141.4L1234.0,141.4L1236.0,141.4L1238.0,141.4L1240.0,141.4L1242.0,142.3L1244.0,143.2L1246.0,144.1L1248.0,145.0L1250.0,140.8L1252.0,136.6L1254.0,139.2L1256.0,141.8L1258.0,144.4L1260.0,143.7L1262.0,142.9L1264.0,142.2L1266.0,141.4L1268.0,141.4L1270.0,141.4L1272.0,141.4L1274.0,141.4L1276.0,141.4L1278.0,141.4L1280.0,141.4L1282.0,141.4L1284.0,141.4L1286.0,141.4L1288.0,141.4L1290.0,141.4L1292.0,141.4L1294.0,141.4L1296.0,141.4L1298.0,141.4L1300.0,141.4L1302.0,141.4L1304.0,141.4L1306.0,141.4L1308.0,141.4L1310.0,141.4L1312.0,141.4L1314.0,141.4L1316.0,141.4L1318.0,141.4L1320.0,141.4L1322.0,141.4L1324.0,141.4L1326.0,141.4L1328.0,141.4L1330.0,141.4L1332.0,141.4L1334.0,141.4L1336.0,141.4L1338.0,141.4L1340.0,141.4L1342.0,141.4L1344.0,141.4L1346.0,141.4L1348.0,141.4L1350.0,141.4L1352.0,141.4L1354.0,141.4L1356.0,141.4L1358.0,141.4L1360.0,141.4L1362.0,141.4L1364.0,141.4L1366.0,141.4L1368.0,141.4L1370.0,141.4L1372.0,141.4L1374.0,141.4L1376.0,141.4L1378.0,141.4L1380.0,141.4L1382.0,141.4L1384.0,141.4L1386.0,141.4L1388.0,141.4L1390.0,141.4L1392.0,141.4L1394.0,141.4L1396.0,141.4L1398.0,141.4L1400.0,141.4L1402.0,141.4L1404.0,141.4L1406.0,141.4L1408.0,141.4L1410.0,141.4L1412.0,141.4L1414.0,141.4L1416.0,141.4L1418.0,141.4L1420.0,141.4L1422.0,141.4L1424.0,141.4L1426.0,141.4L1428.0,141.4L1430.0,141.4L1432.0,141.4L1434.0,141.4L1436.0,141.4" stroke="#9400d3"/>
</g>
<rect x="77" y="45" width="1" height="183" fill="#9c9c9c"/>
<rect x="77" y="227" width="1361" height="1" fill="#9c9c9c"/>
<text x="122.30" y="244.00" font-size="12.70" text-anchor="middle" fill="#fff" textLength="26.2" lengthAdjust="spacingAndGlyphs">-12h</text>
<text x="382.70" y="244.00" font-size="12.70" text-anchor="middle" fill="#fff" textLength="25.2" lengthAdjust="spacingAndGlyphs">-11h</text>
<text x="643.10" y="244.00" font-size="12.70" text-anchor="middle" fill="#fff" textLength="26.2" lengthAdjust="spacingAndGlyphs">-10h</text>
<text x="903.50" y="244.00" font-size="12.70" text-anchor="middle" fill="#fff" textLength="18.9" lengthAdjust="spacingAndGlyphs">-9h</text>
<text x="1163.90" y="244.00" font-size="12.70" text-anchor="middle" fill="#fff" textLength="18.9" lengthAdjust="spacingAndGlyphs">-8h</text>
<text x="1424.30" y="244.00" font-size="12.70" text-anchor="middle" fill="#fff" textLength="18.9" lengthAdjust="spacingAndGlyphs">-7h</text>
<text x="72.00" y="75.90" font-size="12.70" text-anchor="end" fill="#fff" textLength="26.0" lengthAdjust="spacingAndGlyphs">0.04</text>
<text x="72.00" y="110.90" font-size="12.70" text-anchor="end" fill="#fff" textLength="26.0" lengthAdjust="spacingAndGlyphs">0.02</text>
<text x="72.00" y="145.90" font-size="12.70" text-anchor="end" fill="#fff" textLength="7.4" lengthAdjust="spacingAndGlyphs">0</text>
<text x="72.00" y="180.90" font-size="12.70" text-anchor="end" fill="#fff" textLength="30.4" lengthAdjust="spacingAndGlyphs">-0.02</text>
<text x="72.00" y="215.90" font-size="12.70" text-anchor="end" fill="#fff" textLength="30.4" lengthAdjust="spacingAndGlyphs">-0.04</text>
<rect x="1498" y="75" width="1" height="153" fill="#9c9c9c"/>
<rect x="1498" y="227" width="1042" height="1" fill="#9c9c9c"/>
<text x="1532.30" y="244.00" font-size="12.70" text-anchor="middle" fill="#fff" textLength="26.2" lengthAdjust="spacingAndGlyphs">-12h</text>
<text x="1731.52" y="244.00" font-size="12.70" text-anchor="middle" fill="#fff" textLength="25.2" lengthAdjust="spacingAndGlyphs">-11h</text>
<text x="1930.74" y="244.00" font-size="12.70" text-anchor="middle" fill="#fff" textLength="26.2" lengthAdjust="spacingAndGlyphs">-10h</text>
<text x="2129.96" y="244.00" font-size="12.70" text-anchor="middle" fill="#fff" textLength="18.9" lengthAdjust="spacingAndGlyphs">-9h</text>
<text x="2329.18" y="244.00" font-size="12.70" text-anchor="middle" fill="#fff" textLength="18.9" lengthAdjust="spacingAndGlyphs">-8h</text>
<text x="2528.40" y="244.00" font-size="12.70" text-anchor="middle" fill="#fff" textLength="18.9" lengthAdjust="spacingAndGlyphs">-7h</text>
<text x="1493.00" y="91.75" font-size="12.70" text-anchor="end" fill="#fff" clip-path="url(#l1)" textLength="18.5" lengthAdjust="spacingAndGlyphs">1.0</text>
<text x="1493.00" y="121.26" font-size="12.70" text-anchor="end" fill="#fff" clip-path="url(#l1)" textLength="26.0" lengthAdjust="spacingAndGlyphs">0.98</text>
<text x="1493.00" y="150.77" font-size="12.70" text-anchor="end" fill="#fff" clip-path="url(#l1)" textLength="26.0" lengthAdjust="spacingAndGlyphs">0.96</text>
<text x="1493.00" y="180.29" font-size="12.70" text-anchor="end" fill="#fff" clip-path="url(#l1)" textLength="26.0" lengthAdjust="spacingAndGlyphs">0.94</text>
<text x="1493.00" y="209.80" font-size="12.70" text-anchor="end" fill="#fff" clip-path="url(#l1)" textLength="26.0" lengthAdjust="spacingAndGlyphs">0.92</text>
<rect x="1486" y="285" width="1" height="154" fill="#9c9c9c"/>
<rect x="1486" y="438" width="1054" height="1" fill="#9c9c9c"/>
<text x="1520.50" y="455.00" font-size="12.70" text-anchor="middle" fill="#fff" textLength="26.2" lengthAdjust="spacingAndGlyphs">-12h</text>
<text x="1722.06" y="455.00" font-size="12.70" text-anchor="middle" fill="#fff" textLength="25.2" lengthAdjust="spacingAndGlyphs">-11h</text>
<text x="1923.62" y="455.00" font-size="12.70" text-anchor="middle" fill="#fff" textLength="26.2" lengthAdjust="spacingAndGlyphs">-10h</text>
<text x="2125.18" y="455.00" font-size="12.70" text-anchor="middle" fill="#fff" textLength="18.9" lengthAdjust="spacingAndGlyphs">-9h</text>
<text x="2326.74" y="455.00" font-size="12.70" text-anchor="middle" fill="#fff" textLength="18.9" lengthAdjust="spacingAndGlyphs">-8h</text>
<text x="2528.30" y="455.00" font-size="12.70" text-anchor="middle" fill="#fff" textLength="18.9" lengthAdjust="spacingAndGlyphs">-7h</text>
<text x="1481.00" y="325.80" font-size="12.70" text-anchor="end" fill="#fff" clip-path="url(#l2)" textLength="14.8" lengthAdjust="spacingAndGlyphs">50</text>
<text x="1481.00" y="364.40" font-size="12.70" text-anchor="end" fill="#fff" clip-path="url(#l2)" textLength="14.8" lengthAdjust="spacingAndGlyphs">40</text>
<text x="1481.00" y="403.00" font-size="12.70" text-anchor="end" fill="#fff" clip-path="url(#l2)" textLength="14.8" lengthAdjust="spacingAndGlyphs">30</text>
<text x="1481.00" y="441.60" font-size="12.70" text-anchor="end" fill="#fff" clip-path="url(#l2)" textLength="14.8" lengthAdjust="spacingAndGlyphs">20</text>
<rect x="1501" y="496" width="1" height="153" fill="#9c9c9c"/>
<rect x="1501" y="648" width="1039" height="1" fill="#9c9c9c"/>
<text x="1535.50" y="665.00" font-size="12.70" text-anchor="middle" fill="#fff" textLength="26.2" lengthAdjust="spacingAndGlyphs">-12h</text>
<text x="1734.10" y="665.00" font-size="12.70" text-anchor="middle" fill="#fff" textLength="25.2" lengthAdjust="spacingAndGlyphs">-11h</text>
<text x="1932.70" y="665.00" font-size="12.70" text-anchor="middle" fill="#fff" textLength="26.2" lengthAdjust="spacingAndGlyphs">-10h</text>
<text x="2131.30" y="665.00" font-size="12.70" text-anchor="middle" fill="#fff" textLength="18.9" lengthAdjust="spacingAndGlyphs">-9h</text>
<text x="2329.90" y="665.00" font-size="12.70" text-anchor="middle" fill="#fff" textLength="18.9" lengthAdjust="spacingAndGlyphs">-8h</text>
<text x="2528.50" y="665.00" font-size="12.70" text-anchor="middle" fill="#fff" textLength="18.9" lengthAdjust="spacingAndGlyphs">-7h</text>
<text x="1496.00" y="558.70" font-size="12.70" text-anchor="end" fill="#fff" clip-path="url(#l3)" textLength="22.2" lengthAdjust="spacingAndGlyphs">680</text>
<text x="1496.00" y="637.60" font-size="12.70" text-anchor="end" fill="#fff" clip-path="url(#l3)" textLength="22.2" lengthAdjust="spacingAndGlyphs">670</text>
<rect x="1501" y="706" width="1" height="154" fill="#9c9c9c"/>
<rect x="1501" y="859" width="1039" height="1" fill="#9c9c9c"/>
<text x="1535.50" y="876.00" font-size="12.70" text-anchor="middle" fill="#fff" textLength="26.2" lengthAdjust="spacingAndGlyphs">-12h</text>
<text x="1734.10" y="876.00" font-size="12.70" text-anchor="middle" fill="#fff" textLength="25.2" lengthAdjust="spacingAndGlyphs">-11h</text>
<text x="1932.70" y="876.00" font-size="12.70" text-anchor="middle" fill="#fff" textLength="26.2" lengthAdjust="spacingAndGlyphs">-10h</text>
<text x="2131.30" y="876.00" font-size="12.70" text-anchor="middle" fill="#fff" textLength="18.9" lengthAdjust="spacingAndGlyphs">-9h</text>
<text x="2329.90" y="876.00" font-size="12.70" text-anchor="middle" fill="#fff" textLength="18.9" lengthAdjust="spacingAndGlyphs">-8h</text>
<text x="2528.50" y="876.00" font-size="12.70" text-anchor="middle" fill="#fff" textLength="18.9" lengthAdjust="spacingAndGlyphs">-7h</text>
<text x="1496.00" y="741.80" font-size="12.70" text-anchor="end" fill="#fff" clip-path="url(#l4)" textLength="22.2" lengthAdjust="spacingAndGlyphs">900</text>
<text x="1496.00" y="837.70" font-size="12.70" text-anchor="end" fill="#fff" clip-path="url(#l4)" textLength="22.2" lengthAdjust="spacingAndGlyphs">800</text>
<rect x="1498" y="917" width="1" height="153" fill="#9c9c9c"/>
<rect x="1498" y="1069" width="1042" height="1" fill="#9c9c9c"/>
<text x="1532.40" y="1086.00" font-size="12.70" text-anchor="middle" fill="#fff" textLength="26.2" lengthAdjust="spacingAndGlyphs">-12h</text>
<text x="1731.60" y="1086.00" font-size="12.70" text-anchor="middle" fill="#fff" textLength="25.2" lengthAdjust="spacingAndGlyphs">-11h</text>
<text x="1930.80" y="1086.00" font-size="12.70" text-anchor="middle" fill="#fff" textLength="26.2" lengthAdjust="spacingAndGlyphs">-10h</text>
<text x="2130.00" y="1086.00" font-size="12.70" text-anchor="middle" fill="#fff" textLength="18.9" lengthAdjust="spacingAndGlyphs">-9h</text>
<text x="2329.20" y="1086.00" font-size="12.70" text-anchor="middle" fill="#fff" textLength="18.9" lengthAdjust="spacingAndGlyphs">-8h</text>
<text x="2528.40" y="1086.00" font-size="12.70" text-anchor="middle" fill="#fff" textLength="18.9" lengthAdjust="spacingAndGlyphs">-7h</text>
<text x="1493.00" y="957.90" font-size="12.70" text-anchor="end" fill="#fff" clip-path="url(#l5)" textLength="26.7" lengthAdjust="spacingAndGlyphs">-620</text>
<text x="1493.00" y="997.80" font-size="12.70" text-anchor="end" fill="#fff" clip-path="url(#l5)" textLength="26.7" lengthAdjust="spacingAndGlyphs">-630</text>
<text x="1493.00" y="1037.70" font-size="12.70" text-anchor="end" fill="#fff" clip-path="url(#l5)" textLength="26.7" lengthAdjust="spacingAndGlyphs">-640</text>
<rect x="1505" y="1127" width="1" height="154" fill="#9c9c9c"/>
<rect x="1505" y="1280" width="1035" height="1" fill="#9c9c9c"/>
<text x="1539.30" y="1297.00" font-size="12.70" text-anchor="middle" fill="#fff" textLength="26.2" lengthAdjust="spacingAndGlyphs">-12h</text>
<text x="1737.14" y="1297.00" font-size="12.70" text-anchor="middle" fill="#fff" textLength="25.2" lengthAdjust="spacingAndGlyphs">-11h</text>
<text x="1934.98" y="1297.00" font-size="12.70" text-anchor="middle" fill="#fff" textLength="26.2" lengthAdjust="spacingAndGlyphs">-10h</text>
<text x="2132.82" y="1297.00" font-size="12.70" text-anchor="middle" fill="#fff" textLength="18.9" lengthAdjust="spacingAndGlyphs">-9h</text>
<text x="2330.66" y="1297.00" font-size="12.70" text-anchor="middle" fill="#fff" textLength="18.9" lengthAdjust="spacingAndGlyphs">-8h</text>
<text x="2528.50" y="1297.00" font-size="12.70" text-anchor="middle" fill="#fff" textLength="18.9" lengthAdjust="spacingAndGlyphs">-7h</text>
<text x="1500.00" y="1148.90" font-size="12.70" text-anchor="end" fill="#fff" clip-path="url(#l6)" textLength="33.1" lengthAdjust="spacingAndGlyphs">-1180</text>
<text x="1500.00" y="1182.03" font-size="12.70" text-anchor="end" fill="#fff" clip-path="url(#l6)" textLength="34.1" lengthAdjust="spacingAndGlyphs">-1200</text>
<text x="1500.00" y="1215.17" font-size="12.70" text-anchor="end" fill="#fff" clip-path="url(#l6)" textLength="34.1" lengthAdjust="spacingAndGlyphs">-1220</text>
<text x="1500.00" y="1248.30" font-size="12.70" text-anchor="end" fill="#fff" clip-path="url(#l6)" textLength="34.1" lengthAdjust="spacingAndGlyphs">-1240</text>
<text x="1500.00" y="1281.44" font-size="12.70" text-anchor="end" fill="#fff" clip-path="url(#l6)" textLength="34.1" lengthAdjust="spacingAndGlyphs">-1260</text>
<text x="1880.00" y="65.00" font-size="12.70" text-anchor="start" fill="#fff" textLength="277.1" lengthAdjust="spacingAndGlyphs">H1:CAL-CS_TDEP_KAPPA_C_OUTPUT [m-trend]</text>
<text x="1820.90" y="276.00" font-size="12.70" text-anchor="start" fill="#fff" textLength="383.4" lengthAdjust="spacingAndGlyphs">H1:AWC-OM2_TSAMS_THERMISTOR_2_TEMPERATURE [m-trend]</text>
<text x="1884.60" y="485.80" font-size="12.70" text-anchor="start" fill="#fff" textLength="270.8" lengthAdjust="spacingAndGlyphs">H1:SUS-OM3_M1_DAMP_P_INMON [m-trend]</text>
<text x="1884.30" y="696.40" font-size="12.70" text-anchor="start" fill="#fff" textLength="271.7" lengthAdjust="spacingAndGlyphs">H1:SUS-OMC_M1_DAMP_P_INMON [m-trend]</text>
<text x="1883.10" y="907.00" font-size="12.70" text-anchor="start" fill="#fff" textLength="271.1" lengthAdjust="spacingAndGlyphs">H1:SUS-OM3_M1_DAMP_Y_INMON [m-trend]</text>
<text x="1886.40" y="1117.60" font-size="12.70" text-anchor="start" fill="#fff" textLength="271.3" lengthAdjust="spacingAndGlyphs">H1:SUS-OMC_M1_DAMP_Y_INMON [m-trend]</text>
<text x="0.00" y="0.00" font-size="12.70" text-anchor="middle" fill="#fff" textLength="35" lengthAdjust="spacingAndGlyphs" transform="translate(34.3,136.3) rotate(-90)">undef</text>
<text x="0.00" y="0.00" font-size="12.70" text-anchor="middle" fill="#fff" textLength="35.5" lengthAdjust="spacingAndGlyphs" transform="translate(1459.2,151.0) rotate(-90)">undef</text>
<text x="0.00" y="0.00" font-size="12.70" text-anchor="middle" fill="#fff" transform="translate(1459.2,361.5) rotate(-90)">V</text>
<text x="0.00" y="0.00" font-size="12.70" text-anchor="middle" fill="#fff" textLength="35.5" lengthAdjust="spacingAndGlyphs" transform="translate(1459.2,572.0) rotate(-90)">undef</text>
<text x="0.00" y="0.00" font-size="12.70" text-anchor="middle" fill="#fff" textLength="35.5" lengthAdjust="spacingAndGlyphs" transform="translate(1459.2,782.5) rotate(-90)">undef</text>
<text x="0.00" y="0.00" font-size="12.70" text-anchor="middle" fill="#fff" textLength="35.5" lengthAdjust="spacingAndGlyphs" transform="translate(1459.2,993.0) rotate(-90)">undef</text>
<text x="0.00" y="0.00" font-size="12.70" text-anchor="middle" fill="#fff" textLength="35.5" lengthAdjust="spacingAndGlyphs" transform="translate(1459.2,1203.5) rotate(-90)">undef</text>
<rect x="87.5" y="55.5" width="313" height="62" fill="rgba(110,110,110,0.16)" stroke="#5a5a5a"/>
<rect x="96" y="64" width="19" height="19" fill="#008000"/>
<rect x="96" y="89" width="19" height="19" fill="#9400d3"/>
<text x="122.30" y="78.60" font-size="12.70" text-anchor="start" fill="#fff" textLength="268" lengthAdjust="spacingAndGlyphs">H1:OMC-ASC_QPD_A_PIT_OUTPUT [m-trend]</text>
<text x="122.30" y="103.60" font-size="12.70" text-anchor="start" fill="#fff" textLength="268" lengthAdjust="spacingAndGlyphs">H1:OMC-ASC_QPD_B_PIT_OUTPUT [m-trend]</text>
<text x="1279.40" y="1337.50" font-size="15.40" text-anchor="middle" fill="#fff" textLength="398" lengthAdjust="spacingAndGlyphs">t0 = Tue Jun 27 2023 22:00:00 UTC [1371938418.0000]</text>
<polygon points="2537.7,1375 2550,1375 2543.85,1367" fill="#333"/>
<text x="1182.6" y="15" font-size="12.7" font-weight="bold" fill="#2e3436" textLength="126.6" lengthAdjust="spacingAndGlyphs">ndscope: OMC ASC</text>
</svg>
<div class="btn" style="left:2px;width:98px;"><svg class="a" style="left:8px;top:5px" width="12" height="13"><polygon points="1.5,1.5 10,6.2 1.5,11" fill="#fafafa" stroke="#9a9a9a"/></svg><span style="left:25px">start online</span></div>
<div class="btn" style="left:104px;width:98px;"><svg class="a" style="left:10px;top:6px" width="10" height="10"><rect x="1.5" y="1.5" width="7.5" height="7.5" fill="#f0f0f0" stroke="#b8b8b8"/></svg><span style="left:26px;color:#a8a8a8">stop online</span></div>
<div class="btn" style="left:206px;width:98px;"><span style="left:0;width:98px;text-align:center">reset</span></div>
<div class="btn" style="left:2448px;width:78px;"><span style="left:0;width:78px;text-align:center">snapshot</span></div>
<div class="st" style="left:15px;top:1394px;color:#1a1a1a;letter-spacing:-0.1px">h1daqnds1:8088&nbsp;&nbsp;[393412 channels]</div>
<div class="st" style="left:2403px;top:1394px;color:#000;letter-spacing:-0.15px"><a>ndscope 0.17.1</a> (<a>report bug</a>)</div>
</body></html>
